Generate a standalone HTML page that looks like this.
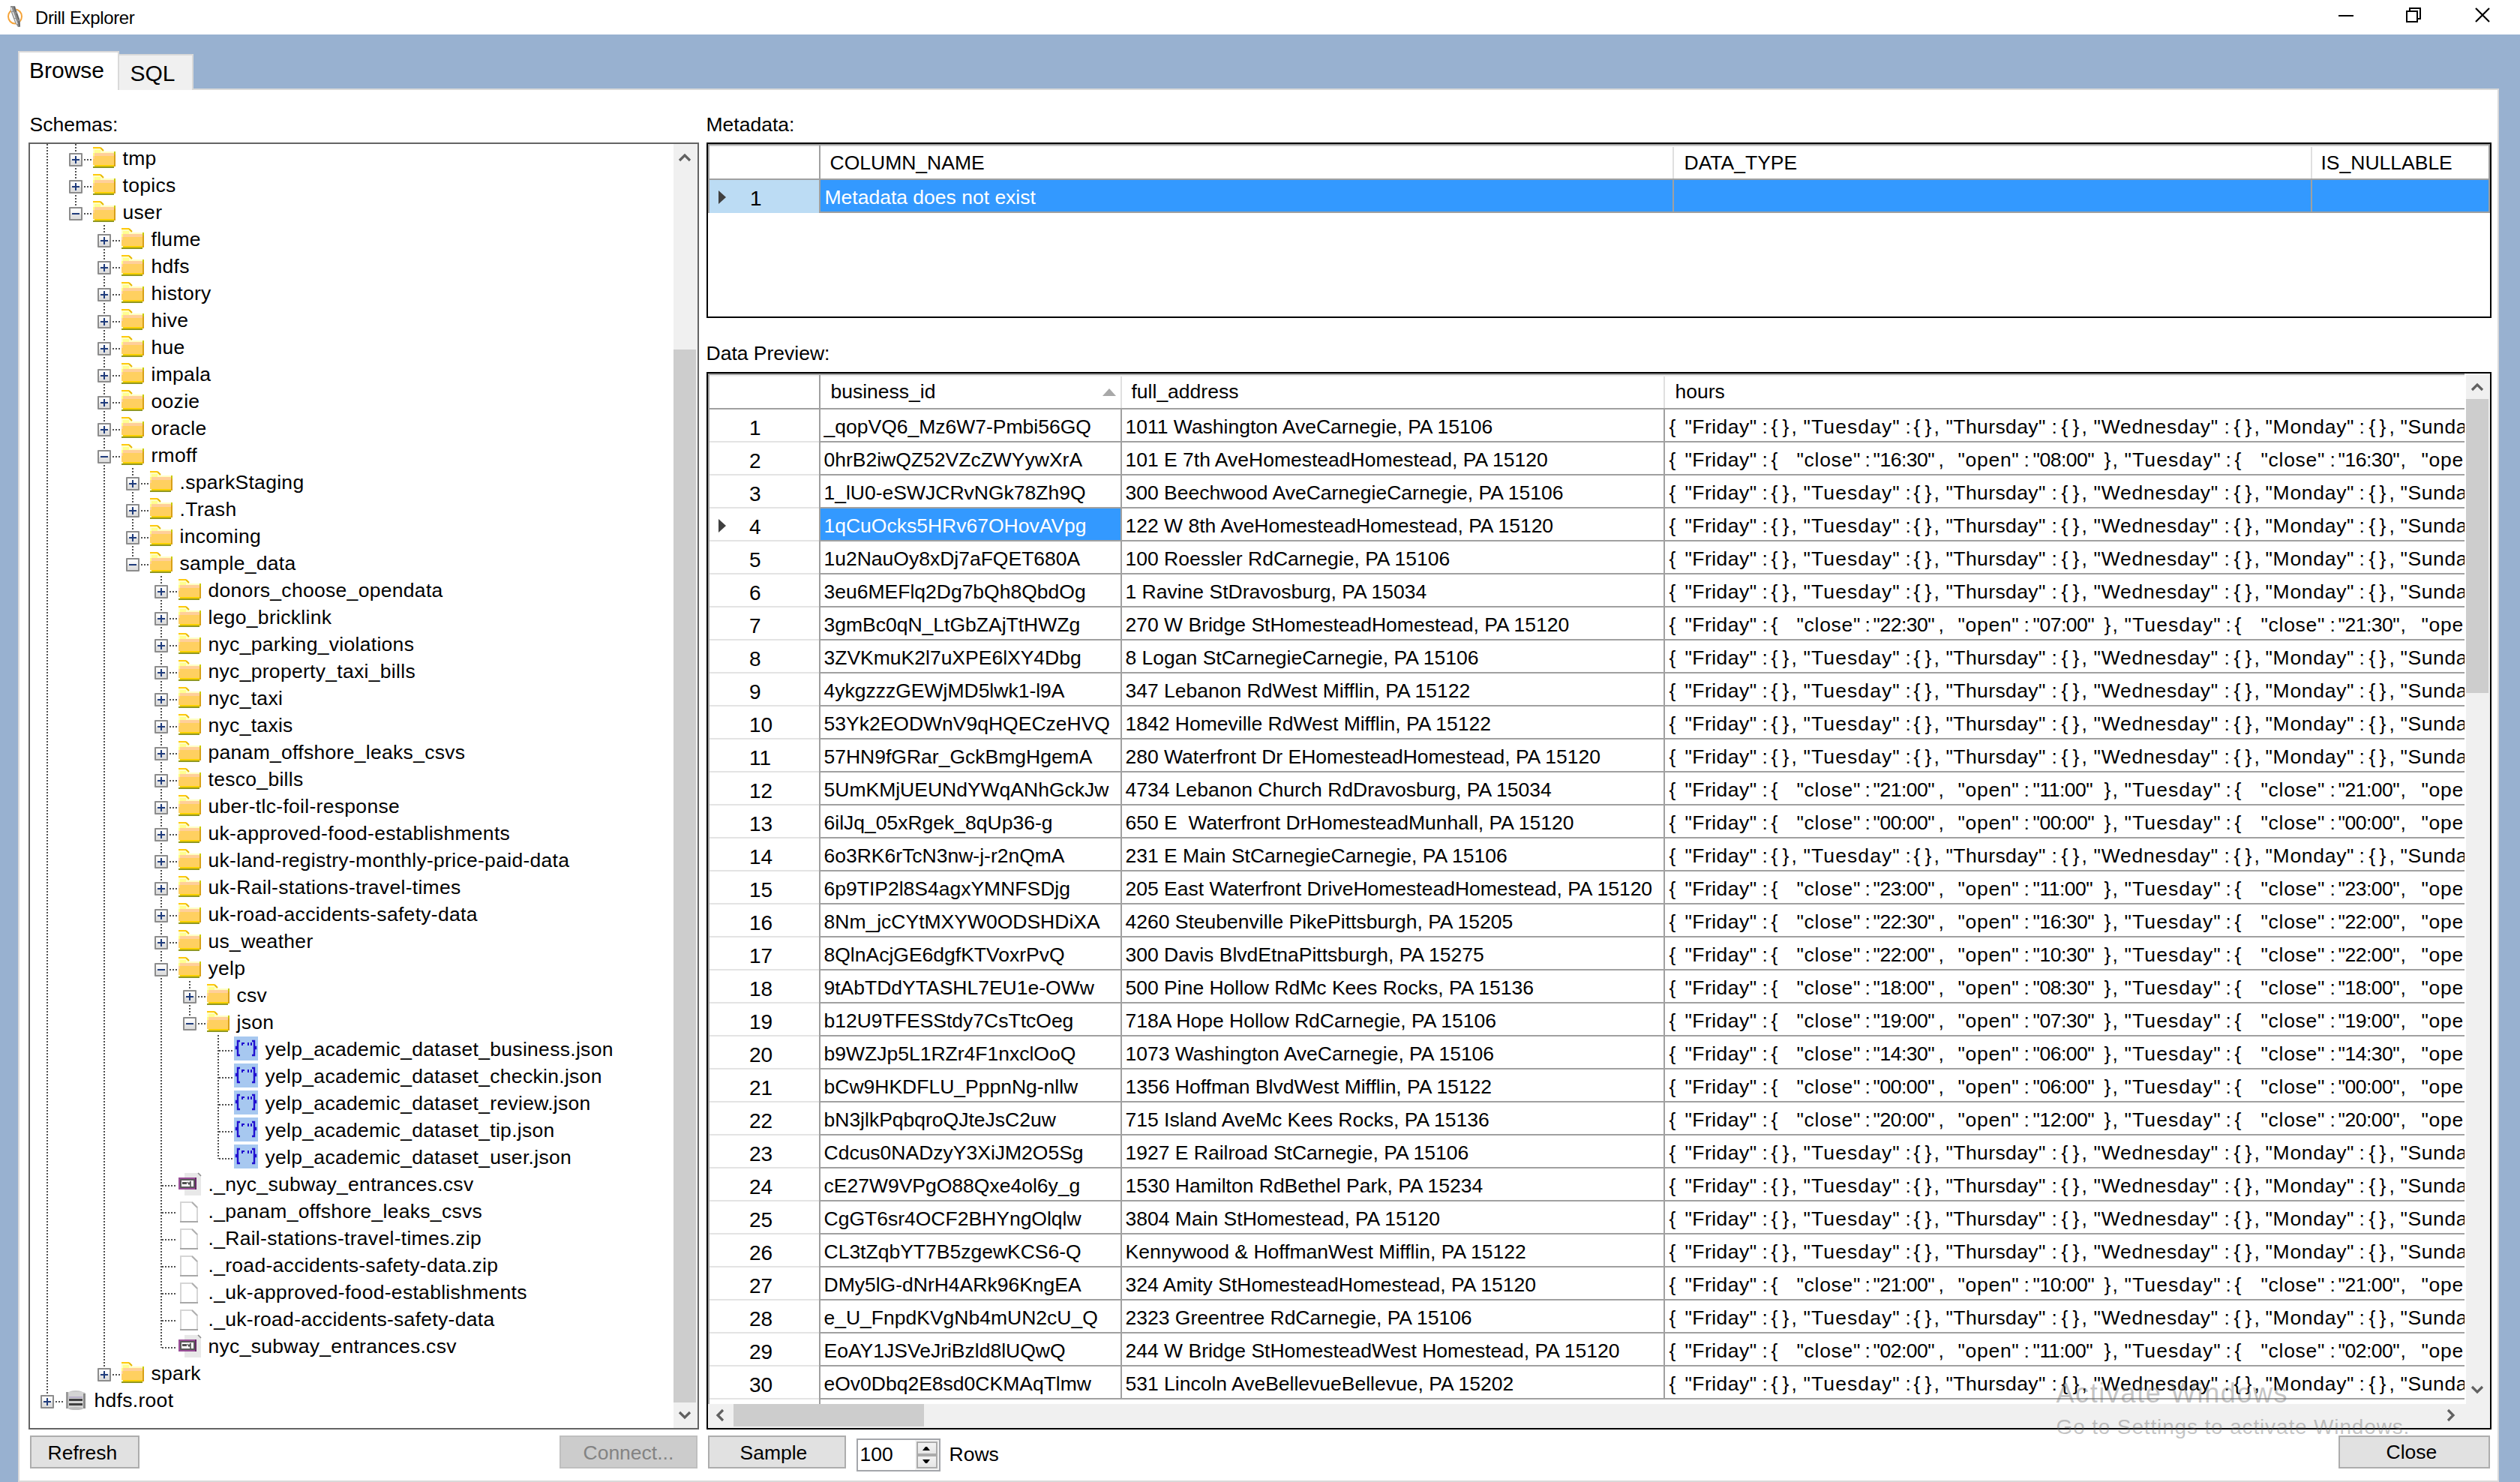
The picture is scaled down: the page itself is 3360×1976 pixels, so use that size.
<!DOCTYPE html><html><head><meta charset="utf-8"><title>Drill Explorer</title><style>
*{margin:0;padding:0;box-sizing:border-box}
html,body{width:3360px;height:1976px;overflow:hidden}
body{position:relative;background:#98B1D0;font-family:"Liberation Sans",sans-serif;color:#000}
div,span{position:absolute}
.t{white-space:pre}
.dv{width:2px;background:repeating-linear-gradient(to bottom,#505050 0 2px,transparent 2px 4px)}
.dh{height:2px;background:repeating-linear-gradient(to right,#505050 0 2px,transparent 2px 4px)}
.pm{width:18px;height:18px;border:2px solid #8C8C8C;border-radius:1px;background:linear-gradient(#FDFDFD 0,#F4F4F4 45%,#E2E2E2 55%,#DEDEDE 100%)}
.pm i{position:absolute;background:#1F3C7C}
svg{position:absolute;overflow:visible}

</style></head><body>
<div style="left:0px;top:0px;width:3360px;height:46px;background:#FFFFFF"></div>
<svg style="left:8px;top:6px" width="26" height="34" viewBox="0 0 26 34"><ellipse cx="12" cy="16" rx="9" ry="9.5" fill="none" stroke="#F6A43A" stroke-width="2"/><path d="M6 2 L12 2 L19 22 L19 30 L16 30 L12 24 L6 8 Z" fill="#8C8C8C"/><path d="M7 4 L8 9 M9 10 L12 18 M12 19 L15 26" stroke="#F0F0F0" stroke-width="1.4"/><path d="M11 3 L13 10 M14 12 L17 20 M17 22 L18 29" stroke="#5E5E5E" stroke-width="1.4"/></svg>
<div class="t" style="left:47.0px;top:12.2px;font-size:24px;line-height:24px;letter-spacing:-0.35px">Drill Explorer</div>
<div style="left:3118px;top:20px;width:20px;height:2px;background:#000"></div>
<div style="left:3212px;top:10px;width:16px;height:16px;border:2px solid #000;background:#fff"></div>
<div style="left:3208px;top:14px;width:16px;height:16px;border:2px solid #000;background:#fff"></div>
<svg style="left:3300px;top:10px" width="20" height="20" viewBox="0 0 20 20"><path d="M1 1 L19 19 M19 1 L1 19" stroke="#000" stroke-width="2.2"/></svg>
<div style="left:24px;top:118px;width:3308px;height:1858px;background:#fff;border:2px solid #D9D9D9"></div>
<div style="left:157px;top:72px;width:101px;height:48px;background:#F0F0F0;border:2px solid #D9D9D9;border-bottom:none"></div>
<div style="left:24px;top:68px;width:135px;height:52px;background:#fff;border:2px solid #D9D9D9;border-bottom:none"></div>
<div style="left:26px;top:118px;width:131px;height:4px;background:#fff"></div>
<div class="t" style="left:39.0px;top:79.1px;font-size:30px;line-height:30px;">Browse</div>
<div class="t" style="left:173.5px;top:83.1px;font-size:30px;line-height:30px;">SQL</div>
<div class="t" style="left:39.5px;top:153.1px;font-size:26.5px;line-height:26.5px;">Schemas:</div>
<div class="t" style="left:941.5px;top:153.1px;font-size:26.5px;line-height:26.5px;">Metadata:</div>
<div class="t" style="left:941.5px;top:458.1px;font-size:26.5px;line-height:26.5px;">Data Preview:</div>
<div style="left:38px;top:190px;width:894px;height:1716px;background:#fff;border:2px solid #646464"></div>
<div class="dv" style="left:62px;top:192px;height:1677px"></div>
<div class="dv" style="left:100px;top:192px;height:21px"></div>
<div class="dv" style="left:100px;top:212px;height:37px"></div>
<div class="dh" style="left:112px;top:212px;width:10px"></div>
<div class="dv" style="left:100px;top:248px;height:37px"></div>
<div class="dh" style="left:112px;top:248px;width:10px"></div>
<div class="dh" style="left:112px;top:284px;width:10px"></div>
<div class="dv" style="left:138px;top:320px;height:37px"></div>
<div class="dv" style="left:138px;top:300px;height:21px"></div>
<div class="dh" style="left:150px;top:320px;width:10px"></div>
<div class="dv" style="left:138px;top:356px;height:37px"></div>
<div class="dh" style="left:150px;top:356px;width:10px"></div>
<div class="dv" style="left:138px;top:392px;height:37px"></div>
<div class="dh" style="left:150px;top:392px;width:10px"></div>
<div class="dv" style="left:138px;top:428px;height:37px"></div>
<div class="dh" style="left:150px;top:428px;width:10px"></div>
<div class="dv" style="left:138px;top:464px;height:37px"></div>
<div class="dh" style="left:150px;top:464px;width:10px"></div>
<div class="dv" style="left:138px;top:500px;height:37px"></div>
<div class="dh" style="left:150px;top:500px;width:10px"></div>
<div class="dv" style="left:138px;top:536px;height:37px"></div>
<div class="dh" style="left:150px;top:536px;width:10px"></div>
<div class="dv" style="left:138px;top:572px;height:37px"></div>
<div class="dh" style="left:150px;top:572px;width:10px"></div>
<div class="dv" style="left:138px;top:608px;height:1225px"></div>
<div class="dh" style="left:150px;top:608px;width:10px"></div>
<div class="dv" style="left:176px;top:644px;height:37px"></div>
<div class="dv" style="left:176px;top:624px;height:21px"></div>
<div class="dh" style="left:188px;top:644px;width:10px"></div>
<div class="dv" style="left:176px;top:680px;height:37px"></div>
<div class="dh" style="left:188px;top:680px;width:10px"></div>
<div class="dv" style="left:176px;top:716px;height:37px"></div>
<div class="dh" style="left:188px;top:716px;width:10px"></div>
<div class="dh" style="left:188px;top:752px;width:10px"></div>
<div class="dv" style="left:214px;top:788px;height:37px"></div>
<div class="dv" style="left:214px;top:768px;height:21px"></div>
<div class="dh" style="left:226px;top:788px;width:10px"></div>
<div class="dv" style="left:214px;top:824px;height:37px"></div>
<div class="dh" style="left:226px;top:824px;width:10px"></div>
<div class="dv" style="left:214px;top:860px;height:37px"></div>
<div class="dh" style="left:226px;top:860px;width:10px"></div>
<div class="dv" style="left:214px;top:896px;height:37px"></div>
<div class="dh" style="left:226px;top:896px;width:10px"></div>
<div class="dv" style="left:214px;top:932px;height:37px"></div>
<div class="dh" style="left:226px;top:932px;width:10px"></div>
<div class="dv" style="left:214px;top:968px;height:37px"></div>
<div class="dh" style="left:226px;top:968px;width:10px"></div>
<div class="dv" style="left:214px;top:1004px;height:37px"></div>
<div class="dh" style="left:226px;top:1004px;width:10px"></div>
<div class="dv" style="left:214px;top:1040px;height:37px"></div>
<div class="dh" style="left:226px;top:1040px;width:10px"></div>
<div class="dv" style="left:214px;top:1076px;height:37px"></div>
<div class="dh" style="left:226px;top:1076px;width:10px"></div>
<div class="dv" style="left:214px;top:1112px;height:37px"></div>
<div class="dh" style="left:226px;top:1112px;width:10px"></div>
<div class="dv" style="left:214px;top:1148px;height:37px"></div>
<div class="dh" style="left:226px;top:1148px;width:10px"></div>
<div class="dv" style="left:214px;top:1184px;height:37px"></div>
<div class="dh" style="left:226px;top:1184px;width:10px"></div>
<div class="dv" style="left:214px;top:1220px;height:37px"></div>
<div class="dh" style="left:226px;top:1220px;width:10px"></div>
<div class="dv" style="left:214px;top:1256px;height:37px"></div>
<div class="dh" style="left:226px;top:1256px;width:10px"></div>
<div class="dv" style="left:214px;top:1292px;height:289px"></div>
<div class="dh" style="left:226px;top:1292px;width:10px"></div>
<div class="dv" style="left:252px;top:1328px;height:37px"></div>
<div class="dv" style="left:252px;top:1308px;height:21px"></div>
<div class="dh" style="left:264px;top:1328px;width:10px"></div>
<div class="dh" style="left:264px;top:1364px;width:10px"></div>
<div class="dv" style="left:290px;top:1400px;height:37px"></div>
<div class="dv" style="left:290px;top:1380px;height:21px"></div>
<div class="dh" style="left:292px;top:1400px;width:20px"></div>
<div class="dv" style="left:290px;top:1436px;height:37px"></div>
<div class="dh" style="left:292px;top:1436px;width:20px"></div>
<div class="dv" style="left:290px;top:1472px;height:37px"></div>
<div class="dh" style="left:292px;top:1472px;width:20px"></div>
<div class="dv" style="left:290px;top:1508px;height:37px"></div>
<div class="dh" style="left:292px;top:1508px;width:20px"></div>
<div class="dh" style="left:292px;top:1544px;width:20px"></div>
<div class="dv" style="left:214px;top:1580px;height:37px"></div>
<div class="dh" style="left:216px;top:1580px;width:20px"></div>
<div class="dv" style="left:214px;top:1616px;height:37px"></div>
<div class="dh" style="left:216px;top:1616px;width:20px"></div>
<div class="dv" style="left:214px;top:1652px;height:37px"></div>
<div class="dh" style="left:216px;top:1652px;width:20px"></div>
<div class="dv" style="left:214px;top:1688px;height:37px"></div>
<div class="dh" style="left:216px;top:1688px;width:20px"></div>
<div class="dv" style="left:214px;top:1724px;height:37px"></div>
<div class="dh" style="left:216px;top:1724px;width:20px"></div>
<div class="dv" style="left:214px;top:1760px;height:37px"></div>
<div class="dh" style="left:216px;top:1760px;width:20px"></div>
<div class="dh" style="left:216px;top:1796px;width:20px"></div>
<div class="dh" style="left:150px;top:1832px;width:10px"></div>
<div class="dh" style="left:74px;top:1868px;width:10px"></div>
<div class="pm" style="left:92px;top:204px"><i style="left:2px;top:6px;width:10px;height:2px"></i><i style="left:6px;top:2px;width:2px;height:10px"></i></div>
<svg style="left:124px;top:196px" width="30" height="28" viewBox="0 0 30 28"><path d="M0 0 H10 L14 6 H28 V26 H0 Z" fill="#FFFFC4"/><rect x="0" y="0" width="10" height="2" fill="#FFC90E"/><path d="M10 1 L12 3 L14 5" stroke="#E6B800" stroke-width="2" fill="none"/><rect x="2" y="4" width="8" height="4" fill="#FFFF90"/><rect x="2" y="8" width="26" height="4" fill="#FFCF9A"/><rect x="0" y="12" width="28" height="12" fill="#FFD060"/><rect x="0" y="8" width="2" height="4" fill="#FFFF80"/><rect x="0" y="12" width="2" height="4" fill="#FFD09A"/><rect x="2" y="24" width="26" height="2" fill="#FFD200"/><rect x="28" y="6" width="2" height="20" fill="#D8A018"/><rect x="28" y="6" width="2" height="4" fill="#C8C800"/><rect x="0" y="26" width="28" height="2" fill="#909820"/></svg>
<div class="t" style="left:163.5px;top:198.1px;font-size:26.5px;line-height:26.5px;letter-spacing:0.3px">tmp</div>
<div class="pm" style="left:92px;top:240px"><i style="left:2px;top:6px;width:10px;height:2px"></i><i style="left:6px;top:2px;width:2px;height:10px"></i></div>
<svg style="left:124px;top:232px" width="30" height="28" viewBox="0 0 30 28"><path d="M0 0 H10 L14 6 H28 V26 H0 Z" fill="#FFFFC4"/><rect x="0" y="0" width="10" height="2" fill="#FFC90E"/><path d="M10 1 L12 3 L14 5" stroke="#E6B800" stroke-width="2" fill="none"/><rect x="2" y="4" width="8" height="4" fill="#FFFF90"/><rect x="2" y="8" width="26" height="4" fill="#FFCF9A"/><rect x="0" y="12" width="28" height="12" fill="#FFD060"/><rect x="0" y="8" width="2" height="4" fill="#FFFF80"/><rect x="0" y="12" width="2" height="4" fill="#FFD09A"/><rect x="2" y="24" width="26" height="2" fill="#FFD200"/><rect x="28" y="6" width="2" height="20" fill="#D8A018"/><rect x="28" y="6" width="2" height="4" fill="#C8C800"/><rect x="0" y="26" width="28" height="2" fill="#909820"/></svg>
<div class="t" style="left:163.5px;top:234.1px;font-size:26.5px;line-height:26.5px;letter-spacing:0.3px">topics</div>
<div class="pm" style="left:92px;top:276px"><i style="left:2px;top:6px;width:10px;height:2px"></i></div>
<svg style="left:124px;top:268px" width="30" height="28" viewBox="0 0 30 28"><path d="M0 0 H10 L14 6 H28 V26 H0 Z" fill="#FFFFC4"/><rect x="0" y="0" width="10" height="2" fill="#FFC90E"/><path d="M10 1 L12 3 L14 5" stroke="#E6B800" stroke-width="2" fill="none"/><rect x="2" y="4" width="8" height="4" fill="#FFFF90"/><rect x="2" y="8" width="26" height="4" fill="#FFCF9A"/><rect x="0" y="12" width="28" height="12" fill="#FFD060"/><rect x="0" y="8" width="2" height="4" fill="#FFFF80"/><rect x="0" y="12" width="2" height="4" fill="#FFD09A"/><rect x="2" y="24" width="26" height="2" fill="#FFD200"/><rect x="28" y="6" width="2" height="20" fill="#D8A018"/><rect x="28" y="6" width="2" height="4" fill="#C8C800"/><rect x="0" y="26" width="28" height="2" fill="#909820"/></svg>
<div class="t" style="left:163.5px;top:270.1px;font-size:26.5px;line-height:26.5px;letter-spacing:0.3px">user</div>
<div class="pm" style="left:130px;top:312px"><i style="left:2px;top:6px;width:10px;height:2px"></i><i style="left:6px;top:2px;width:2px;height:10px"></i></div>
<svg style="left:162px;top:304px" width="30" height="28" viewBox="0 0 30 28"><path d="M0 0 H10 L14 6 H28 V26 H0 Z" fill="#FFFFC4"/><rect x="0" y="0" width="10" height="2" fill="#FFC90E"/><path d="M10 1 L12 3 L14 5" stroke="#E6B800" stroke-width="2" fill="none"/><rect x="2" y="4" width="8" height="4" fill="#FFFF90"/><rect x="2" y="8" width="26" height="4" fill="#FFCF9A"/><rect x="0" y="12" width="28" height="12" fill="#FFD060"/><rect x="0" y="8" width="2" height="4" fill="#FFFF80"/><rect x="0" y="12" width="2" height="4" fill="#FFD09A"/><rect x="2" y="24" width="26" height="2" fill="#FFD200"/><rect x="28" y="6" width="2" height="20" fill="#D8A018"/><rect x="28" y="6" width="2" height="4" fill="#C8C800"/><rect x="0" y="26" width="28" height="2" fill="#909820"/></svg>
<div class="t" style="left:201.5px;top:306.1px;font-size:26.5px;line-height:26.5px;letter-spacing:0.3px">flume</div>
<div class="pm" style="left:130px;top:348px"><i style="left:2px;top:6px;width:10px;height:2px"></i><i style="left:6px;top:2px;width:2px;height:10px"></i></div>
<svg style="left:162px;top:340px" width="30" height="28" viewBox="0 0 30 28"><path d="M0 0 H10 L14 6 H28 V26 H0 Z" fill="#FFFFC4"/><rect x="0" y="0" width="10" height="2" fill="#FFC90E"/><path d="M10 1 L12 3 L14 5" stroke="#E6B800" stroke-width="2" fill="none"/><rect x="2" y="4" width="8" height="4" fill="#FFFF90"/><rect x="2" y="8" width="26" height="4" fill="#FFCF9A"/><rect x="0" y="12" width="28" height="12" fill="#FFD060"/><rect x="0" y="8" width="2" height="4" fill="#FFFF80"/><rect x="0" y="12" width="2" height="4" fill="#FFD09A"/><rect x="2" y="24" width="26" height="2" fill="#FFD200"/><rect x="28" y="6" width="2" height="20" fill="#D8A018"/><rect x="28" y="6" width="2" height="4" fill="#C8C800"/><rect x="0" y="26" width="28" height="2" fill="#909820"/></svg>
<div class="t" style="left:201.5px;top:342.1px;font-size:26.5px;line-height:26.5px;letter-spacing:0.3px">hdfs</div>
<div class="pm" style="left:130px;top:384px"><i style="left:2px;top:6px;width:10px;height:2px"></i><i style="left:6px;top:2px;width:2px;height:10px"></i></div>
<svg style="left:162px;top:376px" width="30" height="28" viewBox="0 0 30 28"><path d="M0 0 H10 L14 6 H28 V26 H0 Z" fill="#FFFFC4"/><rect x="0" y="0" width="10" height="2" fill="#FFC90E"/><path d="M10 1 L12 3 L14 5" stroke="#E6B800" stroke-width="2" fill="none"/><rect x="2" y="4" width="8" height="4" fill="#FFFF90"/><rect x="2" y="8" width="26" height="4" fill="#FFCF9A"/><rect x="0" y="12" width="28" height="12" fill="#FFD060"/><rect x="0" y="8" width="2" height="4" fill="#FFFF80"/><rect x="0" y="12" width="2" height="4" fill="#FFD09A"/><rect x="2" y="24" width="26" height="2" fill="#FFD200"/><rect x="28" y="6" width="2" height="20" fill="#D8A018"/><rect x="28" y="6" width="2" height="4" fill="#C8C800"/><rect x="0" y="26" width="28" height="2" fill="#909820"/></svg>
<div class="t" style="left:201.5px;top:378.1px;font-size:26.5px;line-height:26.5px;letter-spacing:0.3px">history</div>
<div class="pm" style="left:130px;top:420px"><i style="left:2px;top:6px;width:10px;height:2px"></i><i style="left:6px;top:2px;width:2px;height:10px"></i></div>
<svg style="left:162px;top:412px" width="30" height="28" viewBox="0 0 30 28"><path d="M0 0 H10 L14 6 H28 V26 H0 Z" fill="#FFFFC4"/><rect x="0" y="0" width="10" height="2" fill="#FFC90E"/><path d="M10 1 L12 3 L14 5" stroke="#E6B800" stroke-width="2" fill="none"/><rect x="2" y="4" width="8" height="4" fill="#FFFF90"/><rect x="2" y="8" width="26" height="4" fill="#FFCF9A"/><rect x="0" y="12" width="28" height="12" fill="#FFD060"/><rect x="0" y="8" width="2" height="4" fill="#FFFF80"/><rect x="0" y="12" width="2" height="4" fill="#FFD09A"/><rect x="2" y="24" width="26" height="2" fill="#FFD200"/><rect x="28" y="6" width="2" height="20" fill="#D8A018"/><rect x="28" y="6" width="2" height="4" fill="#C8C800"/><rect x="0" y="26" width="28" height="2" fill="#909820"/></svg>
<div class="t" style="left:201.5px;top:414.1px;font-size:26.5px;line-height:26.5px;letter-spacing:0.3px">hive</div>
<div class="pm" style="left:130px;top:456px"><i style="left:2px;top:6px;width:10px;height:2px"></i><i style="left:6px;top:2px;width:2px;height:10px"></i></div>
<svg style="left:162px;top:448px" width="30" height="28" viewBox="0 0 30 28"><path d="M0 0 H10 L14 6 H28 V26 H0 Z" fill="#FFFFC4"/><rect x="0" y="0" width="10" height="2" fill="#FFC90E"/><path d="M10 1 L12 3 L14 5" stroke="#E6B800" stroke-width="2" fill="none"/><rect x="2" y="4" width="8" height="4" fill="#FFFF90"/><rect x="2" y="8" width="26" height="4" fill="#FFCF9A"/><rect x="0" y="12" width="28" height="12" fill="#FFD060"/><rect x="0" y="8" width="2" height="4" fill="#FFFF80"/><rect x="0" y="12" width="2" height="4" fill="#FFD09A"/><rect x="2" y="24" width="26" height="2" fill="#FFD200"/><rect x="28" y="6" width="2" height="20" fill="#D8A018"/><rect x="28" y="6" width="2" height="4" fill="#C8C800"/><rect x="0" y="26" width="28" height="2" fill="#909820"/></svg>
<div class="t" style="left:201.5px;top:450.1px;font-size:26.5px;line-height:26.5px;letter-spacing:0.3px">hue</div>
<div class="pm" style="left:130px;top:492px"><i style="left:2px;top:6px;width:10px;height:2px"></i><i style="left:6px;top:2px;width:2px;height:10px"></i></div>
<svg style="left:162px;top:484px" width="30" height="28" viewBox="0 0 30 28"><path d="M0 0 H10 L14 6 H28 V26 H0 Z" fill="#FFFFC4"/><rect x="0" y="0" width="10" height="2" fill="#FFC90E"/><path d="M10 1 L12 3 L14 5" stroke="#E6B800" stroke-width="2" fill="none"/><rect x="2" y="4" width="8" height="4" fill="#FFFF90"/><rect x="2" y="8" width="26" height="4" fill="#FFCF9A"/><rect x="0" y="12" width="28" height="12" fill="#FFD060"/><rect x="0" y="8" width="2" height="4" fill="#FFFF80"/><rect x="0" y="12" width="2" height="4" fill="#FFD09A"/><rect x="2" y="24" width="26" height="2" fill="#FFD200"/><rect x="28" y="6" width="2" height="20" fill="#D8A018"/><rect x="28" y="6" width="2" height="4" fill="#C8C800"/><rect x="0" y="26" width="28" height="2" fill="#909820"/></svg>
<div class="t" style="left:201.5px;top:486.1px;font-size:26.5px;line-height:26.5px;letter-spacing:0.3px">impala</div>
<div class="pm" style="left:130px;top:528px"><i style="left:2px;top:6px;width:10px;height:2px"></i><i style="left:6px;top:2px;width:2px;height:10px"></i></div>
<svg style="left:162px;top:520px" width="30" height="28" viewBox="0 0 30 28"><path d="M0 0 H10 L14 6 H28 V26 H0 Z" fill="#FFFFC4"/><rect x="0" y="0" width="10" height="2" fill="#FFC90E"/><path d="M10 1 L12 3 L14 5" stroke="#E6B800" stroke-width="2" fill="none"/><rect x="2" y="4" width="8" height="4" fill="#FFFF90"/><rect x="2" y="8" width="26" height="4" fill="#FFCF9A"/><rect x="0" y="12" width="28" height="12" fill="#FFD060"/><rect x="0" y="8" width="2" height="4" fill="#FFFF80"/><rect x="0" y="12" width="2" height="4" fill="#FFD09A"/><rect x="2" y="24" width="26" height="2" fill="#FFD200"/><rect x="28" y="6" width="2" height="20" fill="#D8A018"/><rect x="28" y="6" width="2" height="4" fill="#C8C800"/><rect x="0" y="26" width="28" height="2" fill="#909820"/></svg>
<div class="t" style="left:201.5px;top:522.1px;font-size:26.5px;line-height:26.5px;letter-spacing:0.3px">oozie</div>
<div class="pm" style="left:130px;top:564px"><i style="left:2px;top:6px;width:10px;height:2px"></i><i style="left:6px;top:2px;width:2px;height:10px"></i></div>
<svg style="left:162px;top:556px" width="30" height="28" viewBox="0 0 30 28"><path d="M0 0 H10 L14 6 H28 V26 H0 Z" fill="#FFFFC4"/><rect x="0" y="0" width="10" height="2" fill="#FFC90E"/><path d="M10 1 L12 3 L14 5" stroke="#E6B800" stroke-width="2" fill="none"/><rect x="2" y="4" width="8" height="4" fill="#FFFF90"/><rect x="2" y="8" width="26" height="4" fill="#FFCF9A"/><rect x="0" y="12" width="28" height="12" fill="#FFD060"/><rect x="0" y="8" width="2" height="4" fill="#FFFF80"/><rect x="0" y="12" width="2" height="4" fill="#FFD09A"/><rect x="2" y="24" width="26" height="2" fill="#FFD200"/><rect x="28" y="6" width="2" height="20" fill="#D8A018"/><rect x="28" y="6" width="2" height="4" fill="#C8C800"/><rect x="0" y="26" width="28" height="2" fill="#909820"/></svg>
<div class="t" style="left:201.5px;top:558.1px;font-size:26.5px;line-height:26.5px;letter-spacing:0.3px">oracle</div>
<div class="pm" style="left:130px;top:600px"><i style="left:2px;top:6px;width:10px;height:2px"></i></div>
<svg style="left:162px;top:592px" width="30" height="28" viewBox="0 0 30 28"><path d="M0 0 H10 L14 6 H28 V26 H0 Z" fill="#FFFFC4"/><rect x="0" y="0" width="10" height="2" fill="#FFC90E"/><path d="M10 1 L12 3 L14 5" stroke="#E6B800" stroke-width="2" fill="none"/><rect x="2" y="4" width="8" height="4" fill="#FFFF90"/><rect x="2" y="8" width="26" height="4" fill="#FFCF9A"/><rect x="0" y="12" width="28" height="12" fill="#FFD060"/><rect x="0" y="8" width="2" height="4" fill="#FFFF80"/><rect x="0" y="12" width="2" height="4" fill="#FFD09A"/><rect x="2" y="24" width="26" height="2" fill="#FFD200"/><rect x="28" y="6" width="2" height="20" fill="#D8A018"/><rect x="28" y="6" width="2" height="4" fill="#C8C800"/><rect x="0" y="26" width="28" height="2" fill="#909820"/></svg>
<div class="t" style="left:201.5px;top:594.1px;font-size:26.5px;line-height:26.5px;letter-spacing:0.3px">rmoff</div>
<div class="pm" style="left:168px;top:636px"><i style="left:2px;top:6px;width:10px;height:2px"></i><i style="left:6px;top:2px;width:2px;height:10px"></i></div>
<svg style="left:200px;top:628px" width="30" height="28" viewBox="0 0 30 28"><path d="M0 0 H10 L14 6 H28 V26 H0 Z" fill="#FFFFC4"/><rect x="0" y="0" width="10" height="2" fill="#FFC90E"/><path d="M10 1 L12 3 L14 5" stroke="#E6B800" stroke-width="2" fill="none"/><rect x="2" y="4" width="8" height="4" fill="#FFFF90"/><rect x="2" y="8" width="26" height="4" fill="#FFCF9A"/><rect x="0" y="12" width="28" height="12" fill="#FFD060"/><rect x="0" y="8" width="2" height="4" fill="#FFFF80"/><rect x="0" y="12" width="2" height="4" fill="#FFD09A"/><rect x="2" y="24" width="26" height="2" fill="#FFD200"/><rect x="28" y="6" width="2" height="20" fill="#D8A018"/><rect x="28" y="6" width="2" height="4" fill="#C8C800"/><rect x="0" y="26" width="28" height="2" fill="#909820"/></svg>
<div class="t" style="left:239.5px;top:630.1px;font-size:26.5px;line-height:26.5px;letter-spacing:0.3px">.sparkStaging</div>
<div class="pm" style="left:168px;top:672px"><i style="left:2px;top:6px;width:10px;height:2px"></i><i style="left:6px;top:2px;width:2px;height:10px"></i></div>
<svg style="left:200px;top:664px" width="30" height="28" viewBox="0 0 30 28"><path d="M0 0 H10 L14 6 H28 V26 H0 Z" fill="#FFFFC4"/><rect x="0" y="0" width="10" height="2" fill="#FFC90E"/><path d="M10 1 L12 3 L14 5" stroke="#E6B800" stroke-width="2" fill="none"/><rect x="2" y="4" width="8" height="4" fill="#FFFF90"/><rect x="2" y="8" width="26" height="4" fill="#FFCF9A"/><rect x="0" y="12" width="28" height="12" fill="#FFD060"/><rect x="0" y="8" width="2" height="4" fill="#FFFF80"/><rect x="0" y="12" width="2" height="4" fill="#FFD09A"/><rect x="2" y="24" width="26" height="2" fill="#FFD200"/><rect x="28" y="6" width="2" height="20" fill="#D8A018"/><rect x="28" y="6" width="2" height="4" fill="#C8C800"/><rect x="0" y="26" width="28" height="2" fill="#909820"/></svg>
<div class="t" style="left:239.5px;top:666.1px;font-size:26.5px;line-height:26.5px;letter-spacing:0.3px">.Trash</div>
<div class="pm" style="left:168px;top:708px"><i style="left:2px;top:6px;width:10px;height:2px"></i><i style="left:6px;top:2px;width:2px;height:10px"></i></div>
<svg style="left:200px;top:700px" width="30" height="28" viewBox="0 0 30 28"><path d="M0 0 H10 L14 6 H28 V26 H0 Z" fill="#FFFFC4"/><rect x="0" y="0" width="10" height="2" fill="#FFC90E"/><path d="M10 1 L12 3 L14 5" stroke="#E6B800" stroke-width="2" fill="none"/><rect x="2" y="4" width="8" height="4" fill="#FFFF90"/><rect x="2" y="8" width="26" height="4" fill="#FFCF9A"/><rect x="0" y="12" width="28" height="12" fill="#FFD060"/><rect x="0" y="8" width="2" height="4" fill="#FFFF80"/><rect x="0" y="12" width="2" height="4" fill="#FFD09A"/><rect x="2" y="24" width="26" height="2" fill="#FFD200"/><rect x="28" y="6" width="2" height="20" fill="#D8A018"/><rect x="28" y="6" width="2" height="4" fill="#C8C800"/><rect x="0" y="26" width="28" height="2" fill="#909820"/></svg>
<div class="t" style="left:239.5px;top:702.1px;font-size:26.5px;line-height:26.5px;letter-spacing:0.3px">incoming</div>
<div class="pm" style="left:168px;top:744px"><i style="left:2px;top:6px;width:10px;height:2px"></i></div>
<svg style="left:200px;top:736px" width="30" height="28" viewBox="0 0 30 28"><path d="M0 0 H10 L14 6 H28 V26 H0 Z" fill="#FFFFC4"/><rect x="0" y="0" width="10" height="2" fill="#FFC90E"/><path d="M10 1 L12 3 L14 5" stroke="#E6B800" stroke-width="2" fill="none"/><rect x="2" y="4" width="8" height="4" fill="#FFFF90"/><rect x="2" y="8" width="26" height="4" fill="#FFCF9A"/><rect x="0" y="12" width="28" height="12" fill="#FFD060"/><rect x="0" y="8" width="2" height="4" fill="#FFFF80"/><rect x="0" y="12" width="2" height="4" fill="#FFD09A"/><rect x="2" y="24" width="26" height="2" fill="#FFD200"/><rect x="28" y="6" width="2" height="20" fill="#D8A018"/><rect x="28" y="6" width="2" height="4" fill="#C8C800"/><rect x="0" y="26" width="28" height="2" fill="#909820"/></svg>
<div class="t" style="left:239.5px;top:738.1px;font-size:26.5px;line-height:26.5px;letter-spacing:0.3px">sample_data</div>
<div class="pm" style="left:206px;top:780px"><i style="left:2px;top:6px;width:10px;height:2px"></i><i style="left:6px;top:2px;width:2px;height:10px"></i></div>
<svg style="left:238px;top:772px" width="30" height="28" viewBox="0 0 30 28"><path d="M0 0 H10 L14 6 H28 V26 H0 Z" fill="#FFFFC4"/><rect x="0" y="0" width="10" height="2" fill="#FFC90E"/><path d="M10 1 L12 3 L14 5" stroke="#E6B800" stroke-width="2" fill="none"/><rect x="2" y="4" width="8" height="4" fill="#FFFF90"/><rect x="2" y="8" width="26" height="4" fill="#FFCF9A"/><rect x="0" y="12" width="28" height="12" fill="#FFD060"/><rect x="0" y="8" width="2" height="4" fill="#FFFF80"/><rect x="0" y="12" width="2" height="4" fill="#FFD09A"/><rect x="2" y="24" width="26" height="2" fill="#FFD200"/><rect x="28" y="6" width="2" height="20" fill="#D8A018"/><rect x="28" y="6" width="2" height="4" fill="#C8C800"/><rect x="0" y="26" width="28" height="2" fill="#909820"/></svg>
<div class="t" style="left:277.5px;top:774.1px;font-size:26.5px;line-height:26.5px;letter-spacing:0.3px">donors_choose_opendata</div>
<div class="pm" style="left:206px;top:816px"><i style="left:2px;top:6px;width:10px;height:2px"></i><i style="left:6px;top:2px;width:2px;height:10px"></i></div>
<svg style="left:238px;top:808px" width="30" height="28" viewBox="0 0 30 28"><path d="M0 0 H10 L14 6 H28 V26 H0 Z" fill="#FFFFC4"/><rect x="0" y="0" width="10" height="2" fill="#FFC90E"/><path d="M10 1 L12 3 L14 5" stroke="#E6B800" stroke-width="2" fill="none"/><rect x="2" y="4" width="8" height="4" fill="#FFFF90"/><rect x="2" y="8" width="26" height="4" fill="#FFCF9A"/><rect x="0" y="12" width="28" height="12" fill="#FFD060"/><rect x="0" y="8" width="2" height="4" fill="#FFFF80"/><rect x="0" y="12" width="2" height="4" fill="#FFD09A"/><rect x="2" y="24" width="26" height="2" fill="#FFD200"/><rect x="28" y="6" width="2" height="20" fill="#D8A018"/><rect x="28" y="6" width="2" height="4" fill="#C8C800"/><rect x="0" y="26" width="28" height="2" fill="#909820"/></svg>
<div class="t" style="left:277.5px;top:810.1px;font-size:26.5px;line-height:26.5px;letter-spacing:0.3px">lego_bricklink</div>
<div class="pm" style="left:206px;top:852px"><i style="left:2px;top:6px;width:10px;height:2px"></i><i style="left:6px;top:2px;width:2px;height:10px"></i></div>
<svg style="left:238px;top:844px" width="30" height="28" viewBox="0 0 30 28"><path d="M0 0 H10 L14 6 H28 V26 H0 Z" fill="#FFFFC4"/><rect x="0" y="0" width="10" height="2" fill="#FFC90E"/><path d="M10 1 L12 3 L14 5" stroke="#E6B800" stroke-width="2" fill="none"/><rect x="2" y="4" width="8" height="4" fill="#FFFF90"/><rect x="2" y="8" width="26" height="4" fill="#FFCF9A"/><rect x="0" y="12" width="28" height="12" fill="#FFD060"/><rect x="0" y="8" width="2" height="4" fill="#FFFF80"/><rect x="0" y="12" width="2" height="4" fill="#FFD09A"/><rect x="2" y="24" width="26" height="2" fill="#FFD200"/><rect x="28" y="6" width="2" height="20" fill="#D8A018"/><rect x="28" y="6" width="2" height="4" fill="#C8C800"/><rect x="0" y="26" width="28" height="2" fill="#909820"/></svg>
<div class="t" style="left:277.5px;top:846.1px;font-size:26.5px;line-height:26.5px;letter-spacing:0.3px">nyc_parking_violations</div>
<div class="pm" style="left:206px;top:888px"><i style="left:2px;top:6px;width:10px;height:2px"></i><i style="left:6px;top:2px;width:2px;height:10px"></i></div>
<svg style="left:238px;top:880px" width="30" height="28" viewBox="0 0 30 28"><path d="M0 0 H10 L14 6 H28 V26 H0 Z" fill="#FFFFC4"/><rect x="0" y="0" width="10" height="2" fill="#FFC90E"/><path d="M10 1 L12 3 L14 5" stroke="#E6B800" stroke-width="2" fill="none"/><rect x="2" y="4" width="8" height="4" fill="#FFFF90"/><rect x="2" y="8" width="26" height="4" fill="#FFCF9A"/><rect x="0" y="12" width="28" height="12" fill="#FFD060"/><rect x="0" y="8" width="2" height="4" fill="#FFFF80"/><rect x="0" y="12" width="2" height="4" fill="#FFD09A"/><rect x="2" y="24" width="26" height="2" fill="#FFD200"/><rect x="28" y="6" width="2" height="20" fill="#D8A018"/><rect x="28" y="6" width="2" height="4" fill="#C8C800"/><rect x="0" y="26" width="28" height="2" fill="#909820"/></svg>
<div class="t" style="left:277.5px;top:882.1px;font-size:26.5px;line-height:26.5px;letter-spacing:0.3px">nyc_property_taxi_bills</div>
<div class="pm" style="left:206px;top:924px"><i style="left:2px;top:6px;width:10px;height:2px"></i><i style="left:6px;top:2px;width:2px;height:10px"></i></div>
<svg style="left:238px;top:916px" width="30" height="28" viewBox="0 0 30 28"><path d="M0 0 H10 L14 6 H28 V26 H0 Z" fill="#FFFFC4"/><rect x="0" y="0" width="10" height="2" fill="#FFC90E"/><path d="M10 1 L12 3 L14 5" stroke="#E6B800" stroke-width="2" fill="none"/><rect x="2" y="4" width="8" height="4" fill="#FFFF90"/><rect x="2" y="8" width="26" height="4" fill="#FFCF9A"/><rect x="0" y="12" width="28" height="12" fill="#FFD060"/><rect x="0" y="8" width="2" height="4" fill="#FFFF80"/><rect x="0" y="12" width="2" height="4" fill="#FFD09A"/><rect x="2" y="24" width="26" height="2" fill="#FFD200"/><rect x="28" y="6" width="2" height="20" fill="#D8A018"/><rect x="28" y="6" width="2" height="4" fill="#C8C800"/><rect x="0" y="26" width="28" height="2" fill="#909820"/></svg>
<div class="t" style="left:277.5px;top:918.1px;font-size:26.5px;line-height:26.5px;letter-spacing:0.3px">nyc_taxi</div>
<div class="pm" style="left:206px;top:960px"><i style="left:2px;top:6px;width:10px;height:2px"></i><i style="left:6px;top:2px;width:2px;height:10px"></i></div>
<svg style="left:238px;top:952px" width="30" height="28" viewBox="0 0 30 28"><path d="M0 0 H10 L14 6 H28 V26 H0 Z" fill="#FFFFC4"/><rect x="0" y="0" width="10" height="2" fill="#FFC90E"/><path d="M10 1 L12 3 L14 5" stroke="#E6B800" stroke-width="2" fill="none"/><rect x="2" y="4" width="8" height="4" fill="#FFFF90"/><rect x="2" y="8" width="26" height="4" fill="#FFCF9A"/><rect x="0" y="12" width="28" height="12" fill="#FFD060"/><rect x="0" y="8" width="2" height="4" fill="#FFFF80"/><rect x="0" y="12" width="2" height="4" fill="#FFD09A"/><rect x="2" y="24" width="26" height="2" fill="#FFD200"/><rect x="28" y="6" width="2" height="20" fill="#D8A018"/><rect x="28" y="6" width="2" height="4" fill="#C8C800"/><rect x="0" y="26" width="28" height="2" fill="#909820"/></svg>
<div class="t" style="left:277.5px;top:954.1px;font-size:26.5px;line-height:26.5px;letter-spacing:0.3px">nyc_taxis</div>
<div class="pm" style="left:206px;top:996px"><i style="left:2px;top:6px;width:10px;height:2px"></i><i style="left:6px;top:2px;width:2px;height:10px"></i></div>
<svg style="left:238px;top:988px" width="30" height="28" viewBox="0 0 30 28"><path d="M0 0 H10 L14 6 H28 V26 H0 Z" fill="#FFFFC4"/><rect x="0" y="0" width="10" height="2" fill="#FFC90E"/><path d="M10 1 L12 3 L14 5" stroke="#E6B800" stroke-width="2" fill="none"/><rect x="2" y="4" width="8" height="4" fill="#FFFF90"/><rect x="2" y="8" width="26" height="4" fill="#FFCF9A"/><rect x="0" y="12" width="28" height="12" fill="#FFD060"/><rect x="0" y="8" width="2" height="4" fill="#FFFF80"/><rect x="0" y="12" width="2" height="4" fill="#FFD09A"/><rect x="2" y="24" width="26" height="2" fill="#FFD200"/><rect x="28" y="6" width="2" height="20" fill="#D8A018"/><rect x="28" y="6" width="2" height="4" fill="#C8C800"/><rect x="0" y="26" width="28" height="2" fill="#909820"/></svg>
<div class="t" style="left:277.5px;top:990.1px;font-size:26.5px;line-height:26.5px;letter-spacing:0.3px">panam_offshore_leaks_csvs</div>
<div class="pm" style="left:206px;top:1032px"><i style="left:2px;top:6px;width:10px;height:2px"></i><i style="left:6px;top:2px;width:2px;height:10px"></i></div>
<svg style="left:238px;top:1024px" width="30" height="28" viewBox="0 0 30 28"><path d="M0 0 H10 L14 6 H28 V26 H0 Z" fill="#FFFFC4"/><rect x="0" y="0" width="10" height="2" fill="#FFC90E"/><path d="M10 1 L12 3 L14 5" stroke="#E6B800" stroke-width="2" fill="none"/><rect x="2" y="4" width="8" height="4" fill="#FFFF90"/><rect x="2" y="8" width="26" height="4" fill="#FFCF9A"/><rect x="0" y="12" width="28" height="12" fill="#FFD060"/><rect x="0" y="8" width="2" height="4" fill="#FFFF80"/><rect x="0" y="12" width="2" height="4" fill="#FFD09A"/><rect x="2" y="24" width="26" height="2" fill="#FFD200"/><rect x="28" y="6" width="2" height="20" fill="#D8A018"/><rect x="28" y="6" width="2" height="4" fill="#C8C800"/><rect x="0" y="26" width="28" height="2" fill="#909820"/></svg>
<div class="t" style="left:277.5px;top:1026.1px;font-size:26.5px;line-height:26.5px;letter-spacing:0.3px">tesco_bills</div>
<div class="pm" style="left:206px;top:1068px"><i style="left:2px;top:6px;width:10px;height:2px"></i><i style="left:6px;top:2px;width:2px;height:10px"></i></div>
<svg style="left:238px;top:1060px" width="30" height="28" viewBox="0 0 30 28"><path d="M0 0 H10 L14 6 H28 V26 H0 Z" fill="#FFFFC4"/><rect x="0" y="0" width="10" height="2" fill="#FFC90E"/><path d="M10 1 L12 3 L14 5" stroke="#E6B800" stroke-width="2" fill="none"/><rect x="2" y="4" width="8" height="4" fill="#FFFF90"/><rect x="2" y="8" width="26" height="4" fill="#FFCF9A"/><rect x="0" y="12" width="28" height="12" fill="#FFD060"/><rect x="0" y="8" width="2" height="4" fill="#FFFF80"/><rect x="0" y="12" width="2" height="4" fill="#FFD09A"/><rect x="2" y="24" width="26" height="2" fill="#FFD200"/><rect x="28" y="6" width="2" height="20" fill="#D8A018"/><rect x="28" y="6" width="2" height="4" fill="#C8C800"/><rect x="0" y="26" width="28" height="2" fill="#909820"/></svg>
<div class="t" style="left:277.5px;top:1062.1px;font-size:26.5px;line-height:26.5px;letter-spacing:0.3px">uber-tlc-foil-response</div>
<div class="pm" style="left:206px;top:1104px"><i style="left:2px;top:6px;width:10px;height:2px"></i><i style="left:6px;top:2px;width:2px;height:10px"></i></div>
<svg style="left:238px;top:1096px" width="30" height="28" viewBox="0 0 30 28"><path d="M0 0 H10 L14 6 H28 V26 H0 Z" fill="#FFFFC4"/><rect x="0" y="0" width="10" height="2" fill="#FFC90E"/><path d="M10 1 L12 3 L14 5" stroke="#E6B800" stroke-width="2" fill="none"/><rect x="2" y="4" width="8" height="4" fill="#FFFF90"/><rect x="2" y="8" width="26" height="4" fill="#FFCF9A"/><rect x="0" y="12" width="28" height="12" fill="#FFD060"/><rect x="0" y="8" width="2" height="4" fill="#FFFF80"/><rect x="0" y="12" width="2" height="4" fill="#FFD09A"/><rect x="2" y="24" width="26" height="2" fill="#FFD200"/><rect x="28" y="6" width="2" height="20" fill="#D8A018"/><rect x="28" y="6" width="2" height="4" fill="#C8C800"/><rect x="0" y="26" width="28" height="2" fill="#909820"/></svg>
<div class="t" style="left:277.5px;top:1098.1px;font-size:26.5px;line-height:26.5px;letter-spacing:0.3px">uk-approved-food-establishments</div>
<div class="pm" style="left:206px;top:1140px"><i style="left:2px;top:6px;width:10px;height:2px"></i><i style="left:6px;top:2px;width:2px;height:10px"></i></div>
<svg style="left:238px;top:1132px" width="30" height="28" viewBox="0 0 30 28"><path d="M0 0 H10 L14 6 H28 V26 H0 Z" fill="#FFFFC4"/><rect x="0" y="0" width="10" height="2" fill="#FFC90E"/><path d="M10 1 L12 3 L14 5" stroke="#E6B800" stroke-width="2" fill="none"/><rect x="2" y="4" width="8" height="4" fill="#FFFF90"/><rect x="2" y="8" width="26" height="4" fill="#FFCF9A"/><rect x="0" y="12" width="28" height="12" fill="#FFD060"/><rect x="0" y="8" width="2" height="4" fill="#FFFF80"/><rect x="0" y="12" width="2" height="4" fill="#FFD09A"/><rect x="2" y="24" width="26" height="2" fill="#FFD200"/><rect x="28" y="6" width="2" height="20" fill="#D8A018"/><rect x="28" y="6" width="2" height="4" fill="#C8C800"/><rect x="0" y="26" width="28" height="2" fill="#909820"/></svg>
<div class="t" style="left:277.5px;top:1134.1px;font-size:26.5px;line-height:26.5px;letter-spacing:0.3px">uk-land-registry-monthly-price-paid-data</div>
<div class="pm" style="left:206px;top:1176px"><i style="left:2px;top:6px;width:10px;height:2px"></i><i style="left:6px;top:2px;width:2px;height:10px"></i></div>
<svg style="left:238px;top:1168px" width="30" height="28" viewBox="0 0 30 28"><path d="M0 0 H10 L14 6 H28 V26 H0 Z" fill="#FFFFC4"/><rect x="0" y="0" width="10" height="2" fill="#FFC90E"/><path d="M10 1 L12 3 L14 5" stroke="#E6B800" stroke-width="2" fill="none"/><rect x="2" y="4" width="8" height="4" fill="#FFFF90"/><rect x="2" y="8" width="26" height="4" fill="#FFCF9A"/><rect x="0" y="12" width="28" height="12" fill="#FFD060"/><rect x="0" y="8" width="2" height="4" fill="#FFFF80"/><rect x="0" y="12" width="2" height="4" fill="#FFD09A"/><rect x="2" y="24" width="26" height="2" fill="#FFD200"/><rect x="28" y="6" width="2" height="20" fill="#D8A018"/><rect x="28" y="6" width="2" height="4" fill="#C8C800"/><rect x="0" y="26" width="28" height="2" fill="#909820"/></svg>
<div class="t" style="left:277.5px;top:1170.1px;font-size:26.5px;line-height:26.5px;letter-spacing:0.3px">uk-Rail-stations-travel-times</div>
<div class="pm" style="left:206px;top:1212px"><i style="left:2px;top:6px;width:10px;height:2px"></i><i style="left:6px;top:2px;width:2px;height:10px"></i></div>
<svg style="left:238px;top:1204px" width="30" height="28" viewBox="0 0 30 28"><path d="M0 0 H10 L14 6 H28 V26 H0 Z" fill="#FFFFC4"/><rect x="0" y="0" width="10" height="2" fill="#FFC90E"/><path d="M10 1 L12 3 L14 5" stroke="#E6B800" stroke-width="2" fill="none"/><rect x="2" y="4" width="8" height="4" fill="#FFFF90"/><rect x="2" y="8" width="26" height="4" fill="#FFCF9A"/><rect x="0" y="12" width="28" height="12" fill="#FFD060"/><rect x="0" y="8" width="2" height="4" fill="#FFFF80"/><rect x="0" y="12" width="2" height="4" fill="#FFD09A"/><rect x="2" y="24" width="26" height="2" fill="#FFD200"/><rect x="28" y="6" width="2" height="20" fill="#D8A018"/><rect x="28" y="6" width="2" height="4" fill="#C8C800"/><rect x="0" y="26" width="28" height="2" fill="#909820"/></svg>
<div class="t" style="left:277.5px;top:1206.1px;font-size:26.5px;line-height:26.5px;letter-spacing:0.3px">uk-road-accidents-safety-data</div>
<div class="pm" style="left:206px;top:1248px"><i style="left:2px;top:6px;width:10px;height:2px"></i><i style="left:6px;top:2px;width:2px;height:10px"></i></div>
<svg style="left:238px;top:1240px" width="30" height="28" viewBox="0 0 30 28"><path d="M0 0 H10 L14 6 H28 V26 H0 Z" fill="#FFFFC4"/><rect x="0" y="0" width="10" height="2" fill="#FFC90E"/><path d="M10 1 L12 3 L14 5" stroke="#E6B800" stroke-width="2" fill="none"/><rect x="2" y="4" width="8" height="4" fill="#FFFF90"/><rect x="2" y="8" width="26" height="4" fill="#FFCF9A"/><rect x="0" y="12" width="28" height="12" fill="#FFD060"/><rect x="0" y="8" width="2" height="4" fill="#FFFF80"/><rect x="0" y="12" width="2" height="4" fill="#FFD09A"/><rect x="2" y="24" width="26" height="2" fill="#FFD200"/><rect x="28" y="6" width="2" height="20" fill="#D8A018"/><rect x="28" y="6" width="2" height="4" fill="#C8C800"/><rect x="0" y="26" width="28" height="2" fill="#909820"/></svg>
<div class="t" style="left:277.5px;top:1242.1px;font-size:26.5px;line-height:26.5px;letter-spacing:0.3px">us_weather</div>
<div class="pm" style="left:206px;top:1284px"><i style="left:2px;top:6px;width:10px;height:2px"></i></div>
<svg style="left:238px;top:1276px" width="30" height="28" viewBox="0 0 30 28"><path d="M0 0 H10 L14 6 H28 V26 H0 Z" fill="#FFFFC4"/><rect x="0" y="0" width="10" height="2" fill="#FFC90E"/><path d="M10 1 L12 3 L14 5" stroke="#E6B800" stroke-width="2" fill="none"/><rect x="2" y="4" width="8" height="4" fill="#FFFF90"/><rect x="2" y="8" width="26" height="4" fill="#FFCF9A"/><rect x="0" y="12" width="28" height="12" fill="#FFD060"/><rect x="0" y="8" width="2" height="4" fill="#FFFF80"/><rect x="0" y="12" width="2" height="4" fill="#FFD09A"/><rect x="2" y="24" width="26" height="2" fill="#FFD200"/><rect x="28" y="6" width="2" height="20" fill="#D8A018"/><rect x="28" y="6" width="2" height="4" fill="#C8C800"/><rect x="0" y="26" width="28" height="2" fill="#909820"/></svg>
<div class="t" style="left:277.5px;top:1278.1px;font-size:26.5px;line-height:26.5px;letter-spacing:0.3px">yelp</div>
<div class="pm" style="left:244px;top:1320px"><i style="left:2px;top:6px;width:10px;height:2px"></i><i style="left:6px;top:2px;width:2px;height:10px"></i></div>
<svg style="left:276px;top:1312px" width="30" height="28" viewBox="0 0 30 28"><path d="M0 0 H10 L14 6 H28 V26 H0 Z" fill="#FFFFC4"/><rect x="0" y="0" width="10" height="2" fill="#FFC90E"/><path d="M10 1 L12 3 L14 5" stroke="#E6B800" stroke-width="2" fill="none"/><rect x="2" y="4" width="8" height="4" fill="#FFFF90"/><rect x="2" y="8" width="26" height="4" fill="#FFCF9A"/><rect x="0" y="12" width="28" height="12" fill="#FFD060"/><rect x="0" y="8" width="2" height="4" fill="#FFFF80"/><rect x="0" y="12" width="2" height="4" fill="#FFD09A"/><rect x="2" y="24" width="26" height="2" fill="#FFD200"/><rect x="28" y="6" width="2" height="20" fill="#D8A018"/><rect x="28" y="6" width="2" height="4" fill="#C8C800"/><rect x="0" y="26" width="28" height="2" fill="#909820"/></svg>
<div class="t" style="left:315.5px;top:1314.1px;font-size:26.5px;line-height:26.5px;letter-spacing:0.3px">csv</div>
<div class="pm" style="left:244px;top:1356px"><i style="left:2px;top:6px;width:10px;height:2px"></i></div>
<svg style="left:276px;top:1348px" width="30" height="28" viewBox="0 0 30 28"><path d="M0 0 H10 L14 6 H28 V26 H0 Z" fill="#FFFFC4"/><rect x="0" y="0" width="10" height="2" fill="#FFC90E"/><path d="M10 1 L12 3 L14 5" stroke="#E6B800" stroke-width="2" fill="none"/><rect x="2" y="4" width="8" height="4" fill="#FFFF90"/><rect x="2" y="8" width="26" height="4" fill="#FFCF9A"/><rect x="0" y="12" width="28" height="12" fill="#FFD060"/><rect x="0" y="8" width="2" height="4" fill="#FFFF80"/><rect x="0" y="12" width="2" height="4" fill="#FFD09A"/><rect x="2" y="24" width="26" height="2" fill="#FFD200"/><rect x="28" y="6" width="2" height="20" fill="#D8A018"/><rect x="28" y="6" width="2" height="4" fill="#C8C800"/><rect x="0" y="26" width="28" height="2" fill="#909820"/></svg>
<div class="t" style="left:315.5px;top:1350.1px;font-size:26.5px;line-height:26.5px;letter-spacing:0.3px">json</div>
<svg style="left:312px;top:1382px" width="32" height="32" viewBox="0 0 32 32"><rect width="32" height="32" fill="#A7C8F0"/><path d="M8 6 H5 V14 H3 V16 H5 V25 H8" stroke="#2010D0" stroke-width="2.4" fill="none"/><path d="M24 6 H27 V14 H29 V16 H27 V25 H24" stroke="#2010D0" stroke-width="2.4" fill="none"/><rect x="10" y="8" width="2" height="4" fill="#2010D0"/><rect x="12" y="8" width="2" height="2" fill="#2010D0"/><rect x="18" y="8" width="2" height="4" fill="#2010D0"/><rect x="22" y="8" width="2" height="4" fill="#2010D0"/></svg>
<div class="t" style="left:353.5px;top:1386.1px;font-size:26.5px;line-height:26.5px;letter-spacing:0.3px">yelp_academic_dataset_business.json</div>
<svg style="left:312px;top:1418px" width="32" height="32" viewBox="0 0 32 32"><rect width="32" height="32" fill="#A7C8F0"/><path d="M8 6 H5 V14 H3 V16 H5 V25 H8" stroke="#2010D0" stroke-width="2.4" fill="none"/><path d="M24 6 H27 V14 H29 V16 H27 V25 H24" stroke="#2010D0" stroke-width="2.4" fill="none"/><rect x="10" y="8" width="2" height="4" fill="#2010D0"/><rect x="12" y="8" width="2" height="2" fill="#2010D0"/><rect x="18" y="8" width="2" height="4" fill="#2010D0"/><rect x="22" y="8" width="2" height="4" fill="#2010D0"/></svg>
<div class="t" style="left:353.5px;top:1422.1px;font-size:26.5px;line-height:26.5px;letter-spacing:0.3px">yelp_academic_dataset_checkin.json</div>
<svg style="left:312px;top:1454px" width="32" height="32" viewBox="0 0 32 32"><rect width="32" height="32" fill="#A7C8F0"/><path d="M8 6 H5 V14 H3 V16 H5 V25 H8" stroke="#2010D0" stroke-width="2.4" fill="none"/><path d="M24 6 H27 V14 H29 V16 H27 V25 H24" stroke="#2010D0" stroke-width="2.4" fill="none"/><rect x="10" y="8" width="2" height="4" fill="#2010D0"/><rect x="12" y="8" width="2" height="2" fill="#2010D0"/><rect x="18" y="8" width="2" height="4" fill="#2010D0"/><rect x="22" y="8" width="2" height="4" fill="#2010D0"/></svg>
<div class="t" style="left:353.5px;top:1458.1px;font-size:26.5px;line-height:26.5px;letter-spacing:0.3px">yelp_academic_dataset_review.json</div>
<svg style="left:312px;top:1490px" width="32" height="32" viewBox="0 0 32 32"><rect width="32" height="32" fill="#A7C8F0"/><path d="M8 6 H5 V14 H3 V16 H5 V25 H8" stroke="#2010D0" stroke-width="2.4" fill="none"/><path d="M24 6 H27 V14 H29 V16 H27 V25 H24" stroke="#2010D0" stroke-width="2.4" fill="none"/><rect x="10" y="8" width="2" height="4" fill="#2010D0"/><rect x="12" y="8" width="2" height="2" fill="#2010D0"/><rect x="18" y="8" width="2" height="4" fill="#2010D0"/><rect x="22" y="8" width="2" height="4" fill="#2010D0"/></svg>
<div class="t" style="left:353.5px;top:1494.1px;font-size:26.5px;line-height:26.5px;letter-spacing:0.3px">yelp_academic_dataset_tip.json</div>
<svg style="left:312px;top:1526px" width="32" height="32" viewBox="0 0 32 32"><rect width="32" height="32" fill="#A7C8F0"/><path d="M8 6 H5 V14 H3 V16 H5 V25 H8" stroke="#2010D0" stroke-width="2.4" fill="none"/><path d="M24 6 H27 V14 H29 V16 H27 V25 H24" stroke="#2010D0" stroke-width="2.4" fill="none"/><rect x="10" y="8" width="2" height="4" fill="#2010D0"/><rect x="12" y="8" width="2" height="2" fill="#2010D0"/><rect x="18" y="8" width="2" height="4" fill="#2010D0"/><rect x="22" y="8" width="2" height="4" fill="#2010D0"/></svg>
<div class="t" style="left:353.5px;top:1530.1px;font-size:26.5px;line-height:26.5px;letter-spacing:0.3px">yelp_academic_dataset_user.json</div>
<svg style="left:238px;top:1564px" width="32" height="30" viewBox="0 0 32 30"><path d="M8 0 H28 L30 2 V30 H8 Z" fill="#E8E8E8"/><path d="M26 0 L30 4" stroke="#888" stroke-width="1.5"/><rect x="0" y="6" width="24" height="16" fill="#9A4E98"/><rect x="22" y="6" width="2" height="16" fill="#6A2A6A"/><rect x="2" y="8" width="20" height="12" fill="#5A5A5A"/><rect x="4" y="10" width="16" height="8" fill="#fff"/><rect x="5" y="12" width="6" height="3" fill="#505050"/><path d="M12 12 L14 15 L16 11 V18" stroke="#505050" stroke-width="1.6" fill="none"/></svg>
<div class="t" style="left:277.5px;top:1566.1px;font-size:26.5px;line-height:26.5px;letter-spacing:0.3px">._nyc_subway_entrances.csv</div>
<svg style="left:240px;top:1602px" width="24" height="28" viewBox="0 0 24 28"><path d="M1 1 H16 L23 8 V27 H1 Z" fill="#FFFFFF" stroke="#D6D6D6" stroke-width="2"/><path d="M16 1 L23 8" stroke="#B0B0B0" stroke-width="2"/><rect x="0" y="26" width="24" height="2" fill="#A8A8A8"/></svg>
<div class="t" style="left:277.5px;top:1602.1px;font-size:26.5px;line-height:26.5px;letter-spacing:0.3px">._panam_offshore_leaks_csvs</div>
<svg style="left:240px;top:1638px" width="24" height="28" viewBox="0 0 24 28"><path d="M1 1 H16 L23 8 V27 H1 Z" fill="#FFFFFF" stroke="#D6D6D6" stroke-width="2"/><path d="M16 1 L23 8" stroke="#B0B0B0" stroke-width="2"/><rect x="0" y="26" width="24" height="2" fill="#A8A8A8"/></svg>
<div class="t" style="left:277.5px;top:1638.1px;font-size:26.5px;line-height:26.5px;letter-spacing:0.3px">._Rail-stations-travel-times.zip</div>
<svg style="left:240px;top:1674px" width="24" height="28" viewBox="0 0 24 28"><path d="M1 1 H16 L23 8 V27 H1 Z" fill="#FFFFFF" stroke="#D6D6D6" stroke-width="2"/><path d="M16 1 L23 8" stroke="#B0B0B0" stroke-width="2"/><rect x="0" y="26" width="24" height="2" fill="#A8A8A8"/></svg>
<div class="t" style="left:277.5px;top:1674.1px;font-size:26.5px;line-height:26.5px;letter-spacing:0.3px">._road-accidents-safety-data.zip</div>
<svg style="left:240px;top:1710px" width="24" height="28" viewBox="0 0 24 28"><path d="M1 1 H16 L23 8 V27 H1 Z" fill="#FFFFFF" stroke="#D6D6D6" stroke-width="2"/><path d="M16 1 L23 8" stroke="#B0B0B0" stroke-width="2"/><rect x="0" y="26" width="24" height="2" fill="#A8A8A8"/></svg>
<div class="t" style="left:277.5px;top:1710.1px;font-size:26.5px;line-height:26.5px;letter-spacing:0.3px">._uk-approved-food-establishments</div>
<svg style="left:240px;top:1746px" width="24" height="28" viewBox="0 0 24 28"><path d="M1 1 H16 L23 8 V27 H1 Z" fill="#FFFFFF" stroke="#D6D6D6" stroke-width="2"/><path d="M16 1 L23 8" stroke="#B0B0B0" stroke-width="2"/><rect x="0" y="26" width="24" height="2" fill="#A8A8A8"/></svg>
<div class="t" style="left:277.5px;top:1746.1px;font-size:26.5px;line-height:26.5px;letter-spacing:0.3px">._uk-road-accidents-safety-data</div>
<svg style="left:238px;top:1780px" width="32" height="30" viewBox="0 0 32 30"><path d="M8 0 H28 L30 2 V30 H8 Z" fill="#E8E8E8"/><path d="M26 0 L30 4" stroke="#888" stroke-width="1.5"/><rect x="0" y="6" width="24" height="16" fill="#9A4E98"/><rect x="22" y="6" width="2" height="16" fill="#6A2A6A"/><rect x="2" y="8" width="20" height="12" fill="#5A5A5A"/><rect x="4" y="10" width="16" height="8" fill="#fff"/><rect x="5" y="12" width="6" height="3" fill="#505050"/><path d="M12 12 L14 15 L16 11 V18" stroke="#505050" stroke-width="1.6" fill="none"/></svg>
<div class="t" style="left:277.5px;top:1782.1px;font-size:26.5px;line-height:26.5px;letter-spacing:0.3px">nyc_subway_entrances.csv</div>
<div class="pm" style="left:130px;top:1824px"><i style="left:2px;top:6px;width:10px;height:2px"></i><i style="left:6px;top:2px;width:2px;height:10px"></i></div>
<svg style="left:162px;top:1816px" width="30" height="28" viewBox="0 0 30 28"><path d="M0 0 H10 L14 6 H28 V26 H0 Z" fill="#FFFFC4"/><rect x="0" y="0" width="10" height="2" fill="#FFC90E"/><path d="M10 1 L12 3 L14 5" stroke="#E6B800" stroke-width="2" fill="none"/><rect x="2" y="4" width="8" height="4" fill="#FFFF90"/><rect x="2" y="8" width="26" height="4" fill="#FFCF9A"/><rect x="0" y="12" width="28" height="12" fill="#FFD060"/><rect x="0" y="8" width="2" height="4" fill="#FFFF80"/><rect x="0" y="12" width="2" height="4" fill="#FFD09A"/><rect x="2" y="24" width="26" height="2" fill="#FFD200"/><rect x="28" y="6" width="2" height="20" fill="#D8A018"/><rect x="28" y="6" width="2" height="4" fill="#C8C800"/><rect x="0" y="26" width="28" height="2" fill="#909820"/></svg>
<div class="t" style="left:201.5px;top:1818.1px;font-size:26.5px;line-height:26.5px;letter-spacing:0.3px">spark</div>
<div class="pm" style="left:54px;top:1860px"><i style="left:2px;top:6px;width:10px;height:2px"></i><i style="left:6px;top:2px;width:2px;height:10px"></i></div>
<svg style="left:88px;top:1854px" width="26" height="26" viewBox="0 0 26 26"><ellipse cx="13" cy="3" rx="10" ry="3" fill="#C8C8C8"/><rect x="0" y="2" width="26" height="22" rx="3" fill="#D4D4D4"/><rect x="0" y="2" width="3" height="22" fill="#9A9A9A"/><rect x="23" y="4" width="3" height="20" fill="#8A8A8A"/><rect x="4" y="8" width="18" height="2" fill="#B8B0C8"/><rect x="4" y="11" width="18" height="3" fill="#404040"/><rect x="4" y="17" width="18" height="3" fill="#404040"/><ellipse cx="13" cy="24" rx="10" ry="2" fill="#BDBDBD"/></svg>
<div class="t" style="left:125.5px;top:1854.1px;font-size:26.5px;line-height:26.5px;letter-spacing:0.3px">hdfs.root</div>
<div style="left:898px;top:192px;width:32px;height:1712px;background:#F0F0F0"></div>
<div style="left:898px;top:466px;width:30px;height:1404px;background:#CDCDCD"></div>
<svg style="left:0;top:0" width="1" height="1"><path d="M906 214 L913 207 L920 214" stroke="#606060" stroke-width="3.2" fill="none"/></svg>
<svg style="left:0;top:0" width="1" height="1"><path d="M906 1883 L913 1890 L920 1883" stroke="#606060" stroke-width="3.2" fill="none"/></svg>
<div style="left:942px;top:190px;width:2380px;height:234px;background:#fff;border:2px solid #000"></div>
<div style="left:944px;top:192px;width:2376px;height:2px;background:#A0A0A0"></div>
<div style="left:944px;top:192px;width:2px;height:92px;background:#A0A0A0"></div>
<div style="left:946px;top:194px;width:2374px;height:2px;background:#F0F0F0"></div>
<div style="left:946px;top:238px;width:2374px;height:2px;background:#A0A0A0"></div>
<div style="left:946px;top:240px;width:146px;height:44px;background:#BCDCF4"></div>
<div style="left:1094px;top:240px;width:2224px;height:42px;background:#3399FF"></div>
<div style="left:1094px;top:282px;width:2226px;height:2px;background:#A0A0A0"></div>
<div style="left:1092px;top:194px;width:2px;height:90px;background:#A0A0A0"></div>
<div style="left:2230px;top:196px;width:2px;height:42px;background:#E0E0E0"></div>
<div style="left:2230px;top:240px;width:2px;height:44px;background:#A0A0A0"></div>
<div style="left:3081px;top:196px;width:2px;height:42px;background:#E0E0E0"></div>
<div style="left:3081px;top:240px;width:2px;height:44px;background:#A0A0A0"></div>
<div style="left:3318px;top:194px;width:2px;height:90px;background:#A0A0A0"></div>
<svg style="left:958px;top:254px" width="10" height="18" viewBox="0 0 10 18"><path d="M0 0 L10 9 L0 18 Z" fill="#404040"/></svg>
<div class="t" style="left:1000.0px;top:250.8px;font-size:28px;line-height:28px;">1</div>
<div class="t" style="left:1106.5px;top:204.1px;font-size:26.5px;line-height:26.5px;">COLUMN_NAME</div>
<div class="t" style="left:2245.5px;top:204.1px;font-size:26.5px;line-height:26.5px;">DATA_TYPE</div>
<div class="t" style="left:3094.5px;top:204.1px;font-size:26.5px;line-height:26.5px;">IS_NULLABLE</div>
<div class="t" style="left:1099.5px;top:250.1px;font-size:26.5px;line-height:26.5px;color:#fff;">Metadata does not exist</div>
<div style="left:942px;top:496px;width:2380px;height:1410px;background:#fff;border:2px solid #000"></div>
<div style="left:944px;top:498px;width:2342px;height:2px;background:#A0A0A0"></div>
<div style="left:946px;top:500px;width:2340px;height:2px;background:#F0F0F0"></div>
<div style="left:944px;top:498px;width:2px;height:1374px;background:#A0A0A0"></div>
<div style="left:946px;top:544px;width:2340px;height:2px;background:#A0A0A0"></div>
<div style="left:1092px;top:500px;width:2px;height:1372px;background:#A0A0A0"></div>
<div style="left:1494px;top:502px;width:2px;height:42px;background:#E0E0E0"></div>
<div style="left:2218px;top:502px;width:2px;height:42px;background:#E0E0E0"></div>
<div style="left:1494px;top:546px;width:2px;height:1320px;background:#A0A0A0"></div>
<div style="left:2218px;top:546px;width:2px;height:1320px;background:#A0A0A0"></div>
<div class="t" style="left:1107.5px;top:509.1px;font-size:26.5px;line-height:26.5px;">business_id</div>
<div class="t" style="left:1508.5px;top:509.1px;font-size:26.5px;line-height:26.5px;">full_address</div>
<div class="t" style="left:2233.5px;top:509.1px;font-size:26.5px;line-height:26.5px;">hours</div>
<svg style="left:1470px;top:518px" width="18" height="10" viewBox="0 0 18 10"><path d="M0 10 L9 0 L18 10 Z" fill="#A8A8A8"/></svg>
<div style="left:946px;top:588px;width:146px;height:2px;background:#E4E4E4"></div>
<div style="left:1094px;top:588px;width:2192px;height:2px;background:#A0A0A0"></div>
<div class="t" style="left:999.0px;top:556.8px;font-size:28px;line-height:28px;">1</div>
<div class="t" style="left:1098.5px;top:556.1px;font-size:26.5px;line-height:26.5px;">_qopVQ6_Mz6W7-Pmbi56GQ</div>
<div class="t" style="left:1500.5px;top:556.1px;font-size:26.5px;line-height:26.5px;">1011 Washington AveCarnegie, PA 15106</div>
<div style="left:946px;top:632px;width:146px;height:2px;background:#E4E4E4"></div>
<div style="left:1094px;top:632px;width:2192px;height:2px;background:#A0A0A0"></div>
<div class="t" style="left:999.0px;top:600.8px;font-size:28px;line-height:28px;">2</div>
<div class="t" style="left:1098.5px;top:600.1px;font-size:26.5px;line-height:26.5px;">0hrB2iwQZ52VZcZWYywXrA</div>
<div class="t" style="left:1500.5px;top:600.1px;font-size:26.5px;line-height:26.5px;">101 E 7th AveHomesteadHomestead, PA 15120</div>
<div style="left:946px;top:676px;width:146px;height:2px;background:#E4E4E4"></div>
<div style="left:1094px;top:676px;width:2192px;height:2px;background:#A0A0A0"></div>
<div class="t" style="left:999.0px;top:644.8px;font-size:28px;line-height:28px;">3</div>
<div class="t" style="left:1098.5px;top:644.1px;font-size:26.5px;line-height:26.5px;">1_lU0-eSWJCRvNGk78Zh9Q</div>
<div class="t" style="left:1500.5px;top:644.1px;font-size:26.5px;line-height:26.5px;">300 Beechwood AveCarnegieCarnegie, PA 15106</div>
<div style="left:946px;top:720px;width:146px;height:2px;background:#E4E4E4"></div>
<div style="left:1094px;top:720px;width:2192px;height:2px;background:#A0A0A0"></div>
<div style="left:1094px;top:678px;width:400px;height:42px;background:#3399FF"></div>
<svg style="left:958px;top:692px" width="10" height="18" viewBox="0 0 10 18"><path d="M0 0 L10 9 L0 18 Z" fill="#404040"/></svg>
<div class="t" style="left:999.0px;top:688.8px;font-size:28px;line-height:28px;">4</div>
<div class="t" style="left:1098.5px;top:688.1px;font-size:26.5px;line-height:26.5px;color:#fff;">1qCuOcks5HRv67OHovAVpg</div>
<div class="t" style="left:1500.5px;top:688.1px;font-size:26.5px;line-height:26.5px;">122 W 8th AveHomesteadHomestead, PA 15120</div>
<div style="left:946px;top:764px;width:146px;height:2px;background:#E4E4E4"></div>
<div style="left:1094px;top:764px;width:2192px;height:2px;background:#A0A0A0"></div>
<div class="t" style="left:999.0px;top:732.8px;font-size:28px;line-height:28px;">5</div>
<div class="t" style="left:1098.5px;top:732.1px;font-size:26.5px;line-height:26.5px;">1u2NauOy8xDj7aFQET680A</div>
<div class="t" style="left:1500.5px;top:732.1px;font-size:26.5px;line-height:26.5px;">100 Roessler RdCarnegie, PA 15106</div>
<div style="left:946px;top:808px;width:146px;height:2px;background:#E4E4E4"></div>
<div style="left:1094px;top:808px;width:2192px;height:2px;background:#A0A0A0"></div>
<div class="t" style="left:999.0px;top:776.8px;font-size:28px;line-height:28px;">6</div>
<div class="t" style="left:1098.5px;top:776.1px;font-size:26.5px;line-height:26.5px;">3eu6MEFlq2Dg7bQh8QbdOg</div>
<div class="t" style="left:1500.5px;top:776.1px;font-size:26.5px;line-height:26.5px;">1 Ravine StDravosburg, PA 15034</div>
<div style="left:946px;top:852px;width:146px;height:2px;background:#E4E4E4"></div>
<div style="left:1094px;top:852px;width:2192px;height:2px;background:#A0A0A0"></div>
<div class="t" style="left:999.0px;top:820.8px;font-size:28px;line-height:28px;">7</div>
<div class="t" style="left:1098.5px;top:820.1px;font-size:26.5px;line-height:26.5px;">3gmBc0qN_LtGbZAjTtHWZg</div>
<div class="t" style="left:1500.5px;top:820.1px;font-size:26.5px;line-height:26.5px;">270 W Bridge StHomesteadHomestead, PA 15120</div>
<div style="left:946px;top:896px;width:146px;height:2px;background:#E4E4E4"></div>
<div style="left:1094px;top:896px;width:2192px;height:2px;background:#A0A0A0"></div>
<div class="t" style="left:999.0px;top:864.8px;font-size:28px;line-height:28px;">8</div>
<div class="t" style="left:1098.5px;top:864.1px;font-size:26.5px;line-height:26.5px;">3ZVKmuK2l7uXPE6lXY4Dbg</div>
<div class="t" style="left:1500.5px;top:864.1px;font-size:26.5px;line-height:26.5px;">8 Logan StCarnegieCarnegie, PA 15106</div>
<div style="left:946px;top:940px;width:146px;height:2px;background:#E4E4E4"></div>
<div style="left:1094px;top:940px;width:2192px;height:2px;background:#A0A0A0"></div>
<div class="t" style="left:999.0px;top:908.8px;font-size:28px;line-height:28px;">9</div>
<div class="t" style="left:1098.5px;top:908.1px;font-size:26.5px;line-height:26.5px;">4ykgzzzGEWjMD5lwk1-l9A</div>
<div class="t" style="left:1500.5px;top:908.1px;font-size:26.5px;line-height:26.5px;">347 Lebanon RdWest Mifflin, PA 15122</div>
<div style="left:946px;top:984px;width:146px;height:2px;background:#E4E4E4"></div>
<div style="left:1094px;top:984px;width:2192px;height:2px;background:#A0A0A0"></div>
<div class="t" style="left:999.0px;top:952.8px;font-size:28px;line-height:28px;">10</div>
<div class="t" style="left:1098.5px;top:952.1px;font-size:26.5px;line-height:26.5px;">53Yk2EODWnV9qHQECzeHVQ</div>
<div class="t" style="left:1500.5px;top:952.1px;font-size:26.5px;line-height:26.5px;">1842 Homeville RdWest Mifflin, PA 15122</div>
<div style="left:946px;top:1028px;width:146px;height:2px;background:#E4E4E4"></div>
<div style="left:1094px;top:1028px;width:2192px;height:2px;background:#A0A0A0"></div>
<div class="t" style="left:999.0px;top:996.8px;font-size:28px;line-height:28px;">11</div>
<div class="t" style="left:1098.5px;top:996.1px;font-size:26.5px;line-height:26.5px;">57HN9fGRar_GckBmgHgemA</div>
<div class="t" style="left:1500.5px;top:996.1px;font-size:26.5px;line-height:26.5px;">280 Waterfront Dr EHomesteadHomestead, PA 15120</div>
<div style="left:946px;top:1072px;width:146px;height:2px;background:#E4E4E4"></div>
<div style="left:1094px;top:1072px;width:2192px;height:2px;background:#A0A0A0"></div>
<div class="t" style="left:999.0px;top:1040.8px;font-size:28px;line-height:28px;">12</div>
<div class="t" style="left:1098.5px;top:1040.1px;font-size:26.5px;line-height:26.5px;">5UmKMjUEUNdYWqANhGckJw</div>
<div class="t" style="left:1500.5px;top:1040.1px;font-size:26.5px;line-height:26.5px;">4734 Lebanon Church RdDravosburg, PA 15034</div>
<div style="left:946px;top:1116px;width:146px;height:2px;background:#E4E4E4"></div>
<div style="left:1094px;top:1116px;width:2192px;height:2px;background:#A0A0A0"></div>
<div class="t" style="left:999.0px;top:1084.8px;font-size:28px;line-height:28px;">13</div>
<div class="t" style="left:1098.5px;top:1084.1px;font-size:26.5px;line-height:26.5px;">6ilJq_05xRgek_8qUp36-g</div>
<div class="t" style="left:1500.5px;top:1084.1px;font-size:26.5px;line-height:26.5px;">650 E  Waterfront DrHomesteadMunhall, PA 15120</div>
<div style="left:946px;top:1160px;width:146px;height:2px;background:#E4E4E4"></div>
<div style="left:1094px;top:1160px;width:2192px;height:2px;background:#A0A0A0"></div>
<div class="t" style="left:999.0px;top:1128.8px;font-size:28px;line-height:28px;">14</div>
<div class="t" style="left:1098.5px;top:1128.1px;font-size:26.5px;line-height:26.5px;">6o3RK6rTcN3nw-j-r2nQmA</div>
<div class="t" style="left:1500.5px;top:1128.1px;font-size:26.5px;line-height:26.5px;">231 E Main StCarnegieCarnegie, PA 15106</div>
<div style="left:946px;top:1204px;width:146px;height:2px;background:#E4E4E4"></div>
<div style="left:1094px;top:1204px;width:2192px;height:2px;background:#A0A0A0"></div>
<div class="t" style="left:999.0px;top:1172.8px;font-size:28px;line-height:28px;">15</div>
<div class="t" style="left:1098.5px;top:1172.1px;font-size:26.5px;line-height:26.5px;">6p9TIP2l8S4agxYMNFSDjg</div>
<div class="t" style="left:1500.5px;top:1172.1px;font-size:26.5px;line-height:26.5px;">205 East Waterfront DriveHomesteadHomestead, PA 15120</div>
<div style="left:946px;top:1248px;width:146px;height:2px;background:#E4E4E4"></div>
<div style="left:1094px;top:1248px;width:2192px;height:2px;background:#A0A0A0"></div>
<div class="t" style="left:999.0px;top:1216.8px;font-size:28px;line-height:28px;">16</div>
<div class="t" style="left:1098.5px;top:1216.1px;font-size:26.5px;line-height:26.5px;">8Nm_jcCYtMXYW0ODSHDiXA</div>
<div class="t" style="left:1500.5px;top:1216.1px;font-size:26.5px;line-height:26.5px;">4260 Steubenville PikePittsburgh, PA 15205</div>
<div style="left:946px;top:1292px;width:146px;height:2px;background:#E4E4E4"></div>
<div style="left:1094px;top:1292px;width:2192px;height:2px;background:#A0A0A0"></div>
<div class="t" style="left:999.0px;top:1260.8px;font-size:28px;line-height:28px;">17</div>
<div class="t" style="left:1098.5px;top:1260.1px;font-size:26.5px;line-height:26.5px;">8QlnAcjGE6dgfKTVoxrPvQ</div>
<div class="t" style="left:1500.5px;top:1260.1px;font-size:26.5px;line-height:26.5px;">300 Davis BlvdEtnaPittsburgh, PA 15275</div>
<div style="left:946px;top:1336px;width:146px;height:2px;background:#E4E4E4"></div>
<div style="left:1094px;top:1336px;width:2192px;height:2px;background:#A0A0A0"></div>
<div class="t" style="left:999.0px;top:1304.8px;font-size:28px;line-height:28px;">18</div>
<div class="t" style="left:1098.5px;top:1304.1px;font-size:26.5px;line-height:26.5px;">9tAbTDdYTASHL7EU1e-OWw</div>
<div class="t" style="left:1500.5px;top:1304.1px;font-size:26.5px;line-height:26.5px;">500 Pine Hollow RdMc Kees Rocks, PA 15136</div>
<div style="left:946px;top:1380px;width:146px;height:2px;background:#E4E4E4"></div>
<div style="left:1094px;top:1380px;width:2192px;height:2px;background:#A0A0A0"></div>
<div class="t" style="left:999.0px;top:1348.8px;font-size:28px;line-height:28px;">19</div>
<div class="t" style="left:1098.5px;top:1348.1px;font-size:26.5px;line-height:26.5px;">b12U9TFESStdy7CsTtcOeg</div>
<div class="t" style="left:1500.5px;top:1348.1px;font-size:26.5px;line-height:26.5px;">718A Hope Hollow RdCarnegie, PA 15106</div>
<div style="left:946px;top:1424px;width:146px;height:2px;background:#E4E4E4"></div>
<div style="left:1094px;top:1424px;width:2192px;height:2px;background:#A0A0A0"></div>
<div class="t" style="left:999.0px;top:1392.8px;font-size:28px;line-height:28px;">20</div>
<div class="t" style="left:1098.5px;top:1392.1px;font-size:26.5px;line-height:26.5px;">b9WZJp5L1RZr4F1nxclOoQ</div>
<div class="t" style="left:1500.5px;top:1392.1px;font-size:26.5px;line-height:26.5px;">1073 Washington AveCarnegie, PA 15106</div>
<div style="left:946px;top:1468px;width:146px;height:2px;background:#E4E4E4"></div>
<div style="left:1094px;top:1468px;width:2192px;height:2px;background:#A0A0A0"></div>
<div class="t" style="left:999.0px;top:1436.8px;font-size:28px;line-height:28px;">21</div>
<div class="t" style="left:1098.5px;top:1436.1px;font-size:26.5px;line-height:26.5px;">bCw9HKDFLU_PppnNg-nllw</div>
<div class="t" style="left:1500.5px;top:1436.1px;font-size:26.5px;line-height:26.5px;">1356 Hoffman BlvdWest Mifflin, PA 15122</div>
<div style="left:946px;top:1512px;width:146px;height:2px;background:#E4E4E4"></div>
<div style="left:1094px;top:1512px;width:2192px;height:2px;background:#A0A0A0"></div>
<div class="t" style="left:999.0px;top:1480.8px;font-size:28px;line-height:28px;">22</div>
<div class="t" style="left:1098.5px;top:1480.1px;font-size:26.5px;line-height:26.5px;">bN3jlkPqbqroQJteJsC2uw</div>
<div class="t" style="left:1500.5px;top:1480.1px;font-size:26.5px;line-height:26.5px;">715 Island AveMc Kees Rocks, PA 15136</div>
<div style="left:946px;top:1556px;width:146px;height:2px;background:#E4E4E4"></div>
<div style="left:1094px;top:1556px;width:2192px;height:2px;background:#A0A0A0"></div>
<div class="t" style="left:999.0px;top:1524.8px;font-size:28px;line-height:28px;">23</div>
<div class="t" style="left:1098.5px;top:1524.1px;font-size:26.5px;line-height:26.5px;">Cdcus0NADzyY3XiJM2O5Sg</div>
<div class="t" style="left:1500.5px;top:1524.1px;font-size:26.5px;line-height:26.5px;">1927 E Railroad StCarnegie, PA 15106</div>
<div style="left:946px;top:1600px;width:146px;height:2px;background:#E4E4E4"></div>
<div style="left:1094px;top:1600px;width:2192px;height:2px;background:#A0A0A0"></div>
<div class="t" style="left:999.0px;top:1568.8px;font-size:28px;line-height:28px;">24</div>
<div class="t" style="left:1098.5px;top:1568.1px;font-size:26.5px;line-height:26.5px;">cE27W9VPgO88Qxe4ol6y_g</div>
<div class="t" style="left:1500.5px;top:1568.1px;font-size:26.5px;line-height:26.5px;">1530 Hamilton RdBethel Park, PA 15234</div>
<div style="left:946px;top:1644px;width:146px;height:2px;background:#E4E4E4"></div>
<div style="left:1094px;top:1644px;width:2192px;height:2px;background:#A0A0A0"></div>
<div class="t" style="left:999.0px;top:1612.8px;font-size:28px;line-height:28px;">25</div>
<div class="t" style="left:1098.5px;top:1612.1px;font-size:26.5px;line-height:26.5px;">CgGT6sr4OCF2BHYngOlqlw</div>
<div class="t" style="left:1500.5px;top:1612.1px;font-size:26.5px;line-height:26.5px;">3804 Main StHomestead, PA 15120</div>
<div style="left:946px;top:1688px;width:146px;height:2px;background:#E4E4E4"></div>
<div style="left:1094px;top:1688px;width:2192px;height:2px;background:#A0A0A0"></div>
<div class="t" style="left:999.0px;top:1656.8px;font-size:28px;line-height:28px;">26</div>
<div class="t" style="left:1098.5px;top:1656.1px;font-size:26.5px;line-height:26.5px;">CL3tZqbYT7B5zgewKCS6-Q</div>
<div class="t" style="left:1500.5px;top:1656.1px;font-size:26.5px;line-height:26.5px;">Kennywood &amp; HoffmanWest Mifflin, PA 15122</div>
<div style="left:946px;top:1732px;width:146px;height:2px;background:#E4E4E4"></div>
<div style="left:1094px;top:1732px;width:2192px;height:2px;background:#A0A0A0"></div>
<div class="t" style="left:999.0px;top:1700.8px;font-size:28px;line-height:28px;">27</div>
<div class="t" style="left:1098.5px;top:1700.1px;font-size:26.5px;line-height:26.5px;">DMy5lG-dNrH4ARk96KngEA</div>
<div class="t" style="left:1500.5px;top:1700.1px;font-size:26.5px;line-height:26.5px;">324 Amity StHomesteadHomestead, PA 15120</div>
<div style="left:946px;top:1776px;width:146px;height:2px;background:#E4E4E4"></div>
<div style="left:1094px;top:1776px;width:2192px;height:2px;background:#A0A0A0"></div>
<div class="t" style="left:999.0px;top:1744.8px;font-size:28px;line-height:28px;">28</div>
<div class="t" style="left:1098.5px;top:1744.1px;font-size:26.5px;line-height:26.5px;">e_U_FnpdKVgNb4mUN2cU_Q</div>
<div class="t" style="left:1500.5px;top:1744.1px;font-size:26.5px;line-height:26.5px;">2323 Greentree RdCarnegie, PA 15106</div>
<div style="left:946px;top:1820px;width:146px;height:2px;background:#E4E4E4"></div>
<div style="left:1094px;top:1820px;width:2192px;height:2px;background:#A0A0A0"></div>
<div class="t" style="left:999.0px;top:1788.8px;font-size:28px;line-height:28px;">29</div>
<div class="t" style="left:1098.5px;top:1788.1px;font-size:26.5px;line-height:26.5px;">EoAY1JSVeJriBzld8lUQwQ</div>
<div class="t" style="left:1500.5px;top:1788.1px;font-size:26.5px;line-height:26.5px;">244 W Bridge StHomesteadWest Homestead, PA 15120</div>
<div style="left:946px;top:1864px;width:146px;height:2px;background:#E4E4E4"></div>
<div style="left:1094px;top:1864px;width:2192px;height:2px;background:#A0A0A0"></div>
<div class="t" style="left:999.0px;top:1832.8px;font-size:28px;line-height:28px;">30</div>
<div class="t" style="left:1098.5px;top:1832.1px;font-size:26.5px;line-height:26.5px;">eOv0Dbq2E8sd0CKMAqTlmw</div>
<div class="t" style="left:1500.5px;top:1832.1px;font-size:26.5px;line-height:26.5px;">531 Lincoln AveBellevueBellevue, PA 15202</div>
<div style="left:2220px;top:546px;width:1066px;height:1320px;overflow:hidden">
<div class="t" style="left:5.5px;top:10.1px;font-size:26.5px;line-height:26.5px;letter-spacing:0px">{</div>
<div class="t" style="left:26.5px;top:10.1px;font-size:26.5px;line-height:26.5px;letter-spacing:0.45px">&quot;Friday&quot;</div>
<div class="t" style="left:129.5px;top:10.1px;font-size:26.5px;line-height:26.5px;letter-spacing:0px">:</div>
<div class="t" style="left:141.5px;top:10.1px;font-size:26.5px;line-height:26.5px;letter-spacing:0px">{</div>
<div class="t" style="left:156.5px;top:10.1px;font-size:26.5px;line-height:26.5px;letter-spacing:0px">}</div>
<div class="t" style="left:168.5px;top:10.1px;font-size:26.5px;line-height:26.5px;letter-spacing:0px">,</div>
<div class="t" style="left:184.5px;top:10.1px;font-size:26.5px;line-height:26.5px;letter-spacing:1.1px">&quot;Tuesday&quot;</div>
<div class="t" style="left:320.5px;top:10.1px;font-size:26.5px;line-height:26.5px;letter-spacing:0px">:</div>
<div class="t" style="left:331.5px;top:10.1px;font-size:26.5px;line-height:26.5px;letter-spacing:0px">{</div>
<div class="t" style="left:346.5px;top:10.1px;font-size:26.5px;line-height:26.5px;letter-spacing:0px">}</div>
<div class="t" style="left:358.5px;top:10.1px;font-size:26.5px;line-height:26.5px;letter-spacing:0px">,</div>
<div class="t" style="left:374.5px;top:10.1px;font-size:26.5px;line-height:26.5px;letter-spacing:0.4px">&quot;Thursday&quot;</div>
<div class="t" style="left:515.5px;top:10.1px;font-size:26.5px;line-height:26.5px;letter-spacing:0px">:</div>
<div class="t" style="left:528.5px;top:10.1px;font-size:26.5px;line-height:26.5px;letter-spacing:0px">{</div>
<div class="t" style="left:543.5px;top:10.1px;font-size:26.5px;line-height:26.5px;letter-spacing:0px">}</div>
<div class="t" style="left:555.5px;top:10.1px;font-size:26.5px;line-height:26.5px;letter-spacing:0px">,</div>
<div class="t" style="left:571.5px;top:10.1px;font-size:26.5px;line-height:26.5px;letter-spacing:0.75px">&quot;Wednesday&quot;</div>
<div class="t" style="left:745.5px;top:10.1px;font-size:26.5px;line-height:26.5px;letter-spacing:0px">:</div>
<div class="t" style="left:758.5px;top:10.1px;font-size:26.5px;line-height:26.5px;letter-spacing:0px">{</div>
<div class="t" style="left:773.5px;top:10.1px;font-size:26.5px;line-height:26.5px;letter-spacing:0px">}</div>
<div class="t" style="left:785.5px;top:10.1px;font-size:26.5px;line-height:26.5px;letter-spacing:0px">,</div>
<div class="t" style="left:800.5px;top:10.1px;font-size:26.5px;line-height:26.5px;letter-spacing:0.7px">&quot;Monday&quot;</div>
<div class="t" style="left:925.5px;top:10.1px;font-size:26.5px;line-height:26.5px;letter-spacing:0px">:</div>
<div class="t" style="left:938.5px;top:10.1px;font-size:26.5px;line-height:26.5px;letter-spacing:0px">{</div>
<div class="t" style="left:952.5px;top:10.1px;font-size:26.5px;line-height:26.5px;letter-spacing:0px">}</div>
<div class="t" style="left:965.5px;top:10.1px;font-size:26.5px;line-height:26.5px;letter-spacing:0px">,</div>
<div class="t" style="left:980.5px;top:10.1px;font-size:26.5px;line-height:26.5px;letter-spacing:0.6px">&quot;Sunday&quot;</div>
<div class="t" style="left:5.5px;top:54.1px;font-size:26.5px;line-height:26.5px;letter-spacing:0px">{</div>
<div class="t" style="left:26.5px;top:54.1px;font-size:26.5px;line-height:26.5px;letter-spacing:0.45px">&quot;Friday&quot;</div>
<div class="t" style="left:129.5px;top:54.1px;font-size:26.5px;line-height:26.5px;letter-spacing:0px">:</div>
<div class="t" style="left:141.5px;top:54.1px;font-size:26.5px;line-height:26.5px;letter-spacing:0px">{</div>
<div class="t" style="left:175.5px;top:54.1px;font-size:26.5px;line-height:26.5px;letter-spacing:0.7px">&quot;close&quot;</div>
<div class="t" style="left:266.5px;top:54.1px;font-size:26.5px;line-height:26.5px;letter-spacing:0px">:</div>
<div class="t" style="left:277.5px;top:54.1px;font-size:26.5px;line-height:26.5px;letter-spacing:-0.5px">&quot;16:30&quot;</div>
<div class="t" style="left:364.5px;top:54.1px;font-size:26.5px;line-height:26.5px;letter-spacing:0px">,</div>
<div class="t" style="left:390.5px;top:54.1px;font-size:26.5px;line-height:26.5px;letter-spacing:0.7px">&quot;open&quot;</div>
<div class="t" style="left:478.5px;top:54.1px;font-size:26.5px;line-height:26.5px;letter-spacing:0px">:</div>
<div class="t" style="left:490.5px;top:54.1px;font-size:26.5px;line-height:26.5px;letter-spacing:-0.5px">&quot;08:00&quot;</div>
<div class="t" style="left:585.5px;top:54.1px;font-size:26.5px;line-height:26.5px;letter-spacing:0px">}</div>
<div class="t" style="left:596.5px;top:54.1px;font-size:26.5px;line-height:26.5px;letter-spacing:0px">,</div>
<div class="t" style="left:612.5px;top:54.1px;font-size:26.5px;line-height:26.5px;letter-spacing:1.1px">&quot;Tuesday&quot;</div>
<div class="t" style="left:747.5px;top:54.1px;font-size:26.5px;line-height:26.5px;letter-spacing:0px">:</div>
<div class="t" style="left:759.5px;top:54.1px;font-size:26.5px;line-height:26.5px;letter-spacing:0px">{</div>
<div class="t" style="left:794.5px;top:54.1px;font-size:26.5px;line-height:26.5px;letter-spacing:0.7px">&quot;close&quot;</div>
<div class="t" style="left:886.5px;top:54.1px;font-size:26.5px;line-height:26.5px;letter-spacing:0px">:</div>
<div class="t" style="left:897.5px;top:54.1px;font-size:26.5px;line-height:26.5px;letter-spacing:-0.5px">&quot;16:30&quot;</div>
<div class="t" style="left:980.5px;top:54.1px;font-size:26.5px;line-height:26.5px;letter-spacing:0px">,</div>
<div class="t" style="left:1008.5px;top:54.1px;font-size:26.5px;line-height:26.5px;letter-spacing:0.7px">&quot;open&quot;</div>
<div class="t" style="left:5.5px;top:98.1px;font-size:26.5px;line-height:26.5px;letter-spacing:0px">{</div>
<div class="t" style="left:26.5px;top:98.1px;font-size:26.5px;line-height:26.5px;letter-spacing:0.45px">&quot;Friday&quot;</div>
<div class="t" style="left:129.5px;top:98.1px;font-size:26.5px;line-height:26.5px;letter-spacing:0px">:</div>
<div class="t" style="left:141.5px;top:98.1px;font-size:26.5px;line-height:26.5px;letter-spacing:0px">{</div>
<div class="t" style="left:156.5px;top:98.1px;font-size:26.5px;line-height:26.5px;letter-spacing:0px">}</div>
<div class="t" style="left:168.5px;top:98.1px;font-size:26.5px;line-height:26.5px;letter-spacing:0px">,</div>
<div class="t" style="left:184.5px;top:98.1px;font-size:26.5px;line-height:26.5px;letter-spacing:1.1px">&quot;Tuesday&quot;</div>
<div class="t" style="left:320.5px;top:98.1px;font-size:26.5px;line-height:26.5px;letter-spacing:0px">:</div>
<div class="t" style="left:331.5px;top:98.1px;font-size:26.5px;line-height:26.5px;letter-spacing:0px">{</div>
<div class="t" style="left:346.5px;top:98.1px;font-size:26.5px;line-height:26.5px;letter-spacing:0px">}</div>
<div class="t" style="left:358.5px;top:98.1px;font-size:26.5px;line-height:26.5px;letter-spacing:0px">,</div>
<div class="t" style="left:374.5px;top:98.1px;font-size:26.5px;line-height:26.5px;letter-spacing:0.4px">&quot;Thursday&quot;</div>
<div class="t" style="left:515.5px;top:98.1px;font-size:26.5px;line-height:26.5px;letter-spacing:0px">:</div>
<div class="t" style="left:528.5px;top:98.1px;font-size:26.5px;line-height:26.5px;letter-spacing:0px">{</div>
<div class="t" style="left:543.5px;top:98.1px;font-size:26.5px;line-height:26.5px;letter-spacing:0px">}</div>
<div class="t" style="left:555.5px;top:98.1px;font-size:26.5px;line-height:26.5px;letter-spacing:0px">,</div>
<div class="t" style="left:571.5px;top:98.1px;font-size:26.5px;line-height:26.5px;letter-spacing:0.75px">&quot;Wednesday&quot;</div>
<div class="t" style="left:745.5px;top:98.1px;font-size:26.5px;line-height:26.5px;letter-spacing:0px">:</div>
<div class="t" style="left:758.5px;top:98.1px;font-size:26.5px;line-height:26.5px;letter-spacing:0px">{</div>
<div class="t" style="left:773.5px;top:98.1px;font-size:26.5px;line-height:26.5px;letter-spacing:0px">}</div>
<div class="t" style="left:785.5px;top:98.1px;font-size:26.5px;line-height:26.5px;letter-spacing:0px">,</div>
<div class="t" style="left:800.5px;top:98.1px;font-size:26.5px;line-height:26.5px;letter-spacing:0.7px">&quot;Monday&quot;</div>
<div class="t" style="left:925.5px;top:98.1px;font-size:26.5px;line-height:26.5px;letter-spacing:0px">:</div>
<div class="t" style="left:938.5px;top:98.1px;font-size:26.5px;line-height:26.5px;letter-spacing:0px">{</div>
<div class="t" style="left:952.5px;top:98.1px;font-size:26.5px;line-height:26.5px;letter-spacing:0px">}</div>
<div class="t" style="left:965.5px;top:98.1px;font-size:26.5px;line-height:26.5px;letter-spacing:0px">,</div>
<div class="t" style="left:980.5px;top:98.1px;font-size:26.5px;line-height:26.5px;letter-spacing:0.6px">&quot;Sunday&quot;</div>
<div class="t" style="left:5.5px;top:142.1px;font-size:26.5px;line-height:26.5px;letter-spacing:0px">{</div>
<div class="t" style="left:26.5px;top:142.1px;font-size:26.5px;line-height:26.5px;letter-spacing:0.45px">&quot;Friday&quot;</div>
<div class="t" style="left:129.5px;top:142.1px;font-size:26.5px;line-height:26.5px;letter-spacing:0px">:</div>
<div class="t" style="left:141.5px;top:142.1px;font-size:26.5px;line-height:26.5px;letter-spacing:0px">{</div>
<div class="t" style="left:156.5px;top:142.1px;font-size:26.5px;line-height:26.5px;letter-spacing:0px">}</div>
<div class="t" style="left:168.5px;top:142.1px;font-size:26.5px;line-height:26.5px;letter-spacing:0px">,</div>
<div class="t" style="left:184.5px;top:142.1px;font-size:26.5px;line-height:26.5px;letter-spacing:1.1px">&quot;Tuesday&quot;</div>
<div class="t" style="left:320.5px;top:142.1px;font-size:26.5px;line-height:26.5px;letter-spacing:0px">:</div>
<div class="t" style="left:331.5px;top:142.1px;font-size:26.5px;line-height:26.5px;letter-spacing:0px">{</div>
<div class="t" style="left:346.5px;top:142.1px;font-size:26.5px;line-height:26.5px;letter-spacing:0px">}</div>
<div class="t" style="left:358.5px;top:142.1px;font-size:26.5px;line-height:26.5px;letter-spacing:0px">,</div>
<div class="t" style="left:374.5px;top:142.1px;font-size:26.5px;line-height:26.5px;letter-spacing:0.4px">&quot;Thursday&quot;</div>
<div class="t" style="left:515.5px;top:142.1px;font-size:26.5px;line-height:26.5px;letter-spacing:0px">:</div>
<div class="t" style="left:528.5px;top:142.1px;font-size:26.5px;line-height:26.5px;letter-spacing:0px">{</div>
<div class="t" style="left:543.5px;top:142.1px;font-size:26.5px;line-height:26.5px;letter-spacing:0px">}</div>
<div class="t" style="left:555.5px;top:142.1px;font-size:26.5px;line-height:26.5px;letter-spacing:0px">,</div>
<div class="t" style="left:571.5px;top:142.1px;font-size:26.5px;line-height:26.5px;letter-spacing:0.75px">&quot;Wednesday&quot;</div>
<div class="t" style="left:745.5px;top:142.1px;font-size:26.5px;line-height:26.5px;letter-spacing:0px">:</div>
<div class="t" style="left:758.5px;top:142.1px;font-size:26.5px;line-height:26.5px;letter-spacing:0px">{</div>
<div class="t" style="left:773.5px;top:142.1px;font-size:26.5px;line-height:26.5px;letter-spacing:0px">}</div>
<div class="t" style="left:785.5px;top:142.1px;font-size:26.5px;line-height:26.5px;letter-spacing:0px">,</div>
<div class="t" style="left:800.5px;top:142.1px;font-size:26.5px;line-height:26.5px;letter-spacing:0.7px">&quot;Monday&quot;</div>
<div class="t" style="left:925.5px;top:142.1px;font-size:26.5px;line-height:26.5px;letter-spacing:0px">:</div>
<div class="t" style="left:938.5px;top:142.1px;font-size:26.5px;line-height:26.5px;letter-spacing:0px">{</div>
<div class="t" style="left:952.5px;top:142.1px;font-size:26.5px;line-height:26.5px;letter-spacing:0px">}</div>
<div class="t" style="left:965.5px;top:142.1px;font-size:26.5px;line-height:26.5px;letter-spacing:0px">,</div>
<div class="t" style="left:980.5px;top:142.1px;font-size:26.5px;line-height:26.5px;letter-spacing:0.6px">&quot;Sunday&quot;</div>
<div class="t" style="left:5.5px;top:186.1px;font-size:26.5px;line-height:26.5px;letter-spacing:0px">{</div>
<div class="t" style="left:26.5px;top:186.1px;font-size:26.5px;line-height:26.5px;letter-spacing:0.45px">&quot;Friday&quot;</div>
<div class="t" style="left:129.5px;top:186.1px;font-size:26.5px;line-height:26.5px;letter-spacing:0px">:</div>
<div class="t" style="left:141.5px;top:186.1px;font-size:26.5px;line-height:26.5px;letter-spacing:0px">{</div>
<div class="t" style="left:156.5px;top:186.1px;font-size:26.5px;line-height:26.5px;letter-spacing:0px">}</div>
<div class="t" style="left:168.5px;top:186.1px;font-size:26.5px;line-height:26.5px;letter-spacing:0px">,</div>
<div class="t" style="left:184.5px;top:186.1px;font-size:26.5px;line-height:26.5px;letter-spacing:1.1px">&quot;Tuesday&quot;</div>
<div class="t" style="left:320.5px;top:186.1px;font-size:26.5px;line-height:26.5px;letter-spacing:0px">:</div>
<div class="t" style="left:331.5px;top:186.1px;font-size:26.5px;line-height:26.5px;letter-spacing:0px">{</div>
<div class="t" style="left:346.5px;top:186.1px;font-size:26.5px;line-height:26.5px;letter-spacing:0px">}</div>
<div class="t" style="left:358.5px;top:186.1px;font-size:26.5px;line-height:26.5px;letter-spacing:0px">,</div>
<div class="t" style="left:374.5px;top:186.1px;font-size:26.5px;line-height:26.5px;letter-spacing:0.4px">&quot;Thursday&quot;</div>
<div class="t" style="left:515.5px;top:186.1px;font-size:26.5px;line-height:26.5px;letter-spacing:0px">:</div>
<div class="t" style="left:528.5px;top:186.1px;font-size:26.5px;line-height:26.5px;letter-spacing:0px">{</div>
<div class="t" style="left:543.5px;top:186.1px;font-size:26.5px;line-height:26.5px;letter-spacing:0px">}</div>
<div class="t" style="left:555.5px;top:186.1px;font-size:26.5px;line-height:26.5px;letter-spacing:0px">,</div>
<div class="t" style="left:571.5px;top:186.1px;font-size:26.5px;line-height:26.5px;letter-spacing:0.75px">&quot;Wednesday&quot;</div>
<div class="t" style="left:745.5px;top:186.1px;font-size:26.5px;line-height:26.5px;letter-spacing:0px">:</div>
<div class="t" style="left:758.5px;top:186.1px;font-size:26.5px;line-height:26.5px;letter-spacing:0px">{</div>
<div class="t" style="left:773.5px;top:186.1px;font-size:26.5px;line-height:26.5px;letter-spacing:0px">}</div>
<div class="t" style="left:785.5px;top:186.1px;font-size:26.5px;line-height:26.5px;letter-spacing:0px">,</div>
<div class="t" style="left:800.5px;top:186.1px;font-size:26.5px;line-height:26.5px;letter-spacing:0.7px">&quot;Monday&quot;</div>
<div class="t" style="left:925.5px;top:186.1px;font-size:26.5px;line-height:26.5px;letter-spacing:0px">:</div>
<div class="t" style="left:938.5px;top:186.1px;font-size:26.5px;line-height:26.5px;letter-spacing:0px">{</div>
<div class="t" style="left:952.5px;top:186.1px;font-size:26.5px;line-height:26.5px;letter-spacing:0px">}</div>
<div class="t" style="left:965.5px;top:186.1px;font-size:26.5px;line-height:26.5px;letter-spacing:0px">,</div>
<div class="t" style="left:980.5px;top:186.1px;font-size:26.5px;line-height:26.5px;letter-spacing:0.6px">&quot;Sunday&quot;</div>
<div class="t" style="left:5.5px;top:230.1px;font-size:26.5px;line-height:26.5px;letter-spacing:0px">{</div>
<div class="t" style="left:26.5px;top:230.1px;font-size:26.5px;line-height:26.5px;letter-spacing:0.45px">&quot;Friday&quot;</div>
<div class="t" style="left:129.5px;top:230.1px;font-size:26.5px;line-height:26.5px;letter-spacing:0px">:</div>
<div class="t" style="left:141.5px;top:230.1px;font-size:26.5px;line-height:26.5px;letter-spacing:0px">{</div>
<div class="t" style="left:156.5px;top:230.1px;font-size:26.5px;line-height:26.5px;letter-spacing:0px">}</div>
<div class="t" style="left:168.5px;top:230.1px;font-size:26.5px;line-height:26.5px;letter-spacing:0px">,</div>
<div class="t" style="left:184.5px;top:230.1px;font-size:26.5px;line-height:26.5px;letter-spacing:1.1px">&quot;Tuesday&quot;</div>
<div class="t" style="left:320.5px;top:230.1px;font-size:26.5px;line-height:26.5px;letter-spacing:0px">:</div>
<div class="t" style="left:331.5px;top:230.1px;font-size:26.5px;line-height:26.5px;letter-spacing:0px">{</div>
<div class="t" style="left:346.5px;top:230.1px;font-size:26.5px;line-height:26.5px;letter-spacing:0px">}</div>
<div class="t" style="left:358.5px;top:230.1px;font-size:26.5px;line-height:26.5px;letter-spacing:0px">,</div>
<div class="t" style="left:374.5px;top:230.1px;font-size:26.5px;line-height:26.5px;letter-spacing:0.4px">&quot;Thursday&quot;</div>
<div class="t" style="left:515.5px;top:230.1px;font-size:26.5px;line-height:26.5px;letter-spacing:0px">:</div>
<div class="t" style="left:528.5px;top:230.1px;font-size:26.5px;line-height:26.5px;letter-spacing:0px">{</div>
<div class="t" style="left:543.5px;top:230.1px;font-size:26.5px;line-height:26.5px;letter-spacing:0px">}</div>
<div class="t" style="left:555.5px;top:230.1px;font-size:26.5px;line-height:26.5px;letter-spacing:0px">,</div>
<div class="t" style="left:571.5px;top:230.1px;font-size:26.5px;line-height:26.5px;letter-spacing:0.75px">&quot;Wednesday&quot;</div>
<div class="t" style="left:745.5px;top:230.1px;font-size:26.5px;line-height:26.5px;letter-spacing:0px">:</div>
<div class="t" style="left:758.5px;top:230.1px;font-size:26.5px;line-height:26.5px;letter-spacing:0px">{</div>
<div class="t" style="left:773.5px;top:230.1px;font-size:26.5px;line-height:26.5px;letter-spacing:0px">}</div>
<div class="t" style="left:785.5px;top:230.1px;font-size:26.5px;line-height:26.5px;letter-spacing:0px">,</div>
<div class="t" style="left:800.5px;top:230.1px;font-size:26.5px;line-height:26.5px;letter-spacing:0.7px">&quot;Monday&quot;</div>
<div class="t" style="left:925.5px;top:230.1px;font-size:26.5px;line-height:26.5px;letter-spacing:0px">:</div>
<div class="t" style="left:938.5px;top:230.1px;font-size:26.5px;line-height:26.5px;letter-spacing:0px">{</div>
<div class="t" style="left:952.5px;top:230.1px;font-size:26.5px;line-height:26.5px;letter-spacing:0px">}</div>
<div class="t" style="left:965.5px;top:230.1px;font-size:26.5px;line-height:26.5px;letter-spacing:0px">,</div>
<div class="t" style="left:980.5px;top:230.1px;font-size:26.5px;line-height:26.5px;letter-spacing:0.6px">&quot;Sunday&quot;</div>
<div class="t" style="left:5.5px;top:274.1px;font-size:26.5px;line-height:26.5px;letter-spacing:0px">{</div>
<div class="t" style="left:26.5px;top:274.1px;font-size:26.5px;line-height:26.5px;letter-spacing:0.45px">&quot;Friday&quot;</div>
<div class="t" style="left:129.5px;top:274.1px;font-size:26.5px;line-height:26.5px;letter-spacing:0px">:</div>
<div class="t" style="left:141.5px;top:274.1px;font-size:26.5px;line-height:26.5px;letter-spacing:0px">{</div>
<div class="t" style="left:175.5px;top:274.1px;font-size:26.5px;line-height:26.5px;letter-spacing:0.7px">&quot;close&quot;</div>
<div class="t" style="left:266.5px;top:274.1px;font-size:26.5px;line-height:26.5px;letter-spacing:0px">:</div>
<div class="t" style="left:277.5px;top:274.1px;font-size:26.5px;line-height:26.5px;letter-spacing:-0.5px">&quot;22:30&quot;</div>
<div class="t" style="left:364.5px;top:274.1px;font-size:26.5px;line-height:26.5px;letter-spacing:0px">,</div>
<div class="t" style="left:390.5px;top:274.1px;font-size:26.5px;line-height:26.5px;letter-spacing:0.7px">&quot;open&quot;</div>
<div class="t" style="left:478.5px;top:274.1px;font-size:26.5px;line-height:26.5px;letter-spacing:0px">:</div>
<div class="t" style="left:490.5px;top:274.1px;font-size:26.5px;line-height:26.5px;letter-spacing:-0.5px">&quot;07:00&quot;</div>
<div class="t" style="left:585.5px;top:274.1px;font-size:26.5px;line-height:26.5px;letter-spacing:0px">}</div>
<div class="t" style="left:596.5px;top:274.1px;font-size:26.5px;line-height:26.5px;letter-spacing:0px">,</div>
<div class="t" style="left:612.5px;top:274.1px;font-size:26.5px;line-height:26.5px;letter-spacing:1.1px">&quot;Tuesday&quot;</div>
<div class="t" style="left:747.5px;top:274.1px;font-size:26.5px;line-height:26.5px;letter-spacing:0px">:</div>
<div class="t" style="left:759.5px;top:274.1px;font-size:26.5px;line-height:26.5px;letter-spacing:0px">{</div>
<div class="t" style="left:794.5px;top:274.1px;font-size:26.5px;line-height:26.5px;letter-spacing:0.7px">&quot;close&quot;</div>
<div class="t" style="left:886.5px;top:274.1px;font-size:26.5px;line-height:26.5px;letter-spacing:0px">:</div>
<div class="t" style="left:897.5px;top:274.1px;font-size:26.5px;line-height:26.5px;letter-spacing:-0.5px">&quot;21:30&quot;</div>
<div class="t" style="left:980.5px;top:274.1px;font-size:26.5px;line-height:26.5px;letter-spacing:0px">,</div>
<div class="t" style="left:1008.5px;top:274.1px;font-size:26.5px;line-height:26.5px;letter-spacing:0.7px">&quot;open&quot;</div>
<div class="t" style="left:5.5px;top:318.1px;font-size:26.5px;line-height:26.5px;letter-spacing:0px">{</div>
<div class="t" style="left:26.5px;top:318.1px;font-size:26.5px;line-height:26.5px;letter-spacing:0.45px">&quot;Friday&quot;</div>
<div class="t" style="left:129.5px;top:318.1px;font-size:26.5px;line-height:26.5px;letter-spacing:0px">:</div>
<div class="t" style="left:141.5px;top:318.1px;font-size:26.5px;line-height:26.5px;letter-spacing:0px">{</div>
<div class="t" style="left:156.5px;top:318.1px;font-size:26.5px;line-height:26.5px;letter-spacing:0px">}</div>
<div class="t" style="left:168.5px;top:318.1px;font-size:26.5px;line-height:26.5px;letter-spacing:0px">,</div>
<div class="t" style="left:184.5px;top:318.1px;font-size:26.5px;line-height:26.5px;letter-spacing:1.1px">&quot;Tuesday&quot;</div>
<div class="t" style="left:320.5px;top:318.1px;font-size:26.5px;line-height:26.5px;letter-spacing:0px">:</div>
<div class="t" style="left:331.5px;top:318.1px;font-size:26.5px;line-height:26.5px;letter-spacing:0px">{</div>
<div class="t" style="left:346.5px;top:318.1px;font-size:26.5px;line-height:26.5px;letter-spacing:0px">}</div>
<div class="t" style="left:358.5px;top:318.1px;font-size:26.5px;line-height:26.5px;letter-spacing:0px">,</div>
<div class="t" style="left:374.5px;top:318.1px;font-size:26.5px;line-height:26.5px;letter-spacing:0.4px">&quot;Thursday&quot;</div>
<div class="t" style="left:515.5px;top:318.1px;font-size:26.5px;line-height:26.5px;letter-spacing:0px">:</div>
<div class="t" style="left:528.5px;top:318.1px;font-size:26.5px;line-height:26.5px;letter-spacing:0px">{</div>
<div class="t" style="left:543.5px;top:318.1px;font-size:26.5px;line-height:26.5px;letter-spacing:0px">}</div>
<div class="t" style="left:555.5px;top:318.1px;font-size:26.5px;line-height:26.5px;letter-spacing:0px">,</div>
<div class="t" style="left:571.5px;top:318.1px;font-size:26.5px;line-height:26.5px;letter-spacing:0.75px">&quot;Wednesday&quot;</div>
<div class="t" style="left:745.5px;top:318.1px;font-size:26.5px;line-height:26.5px;letter-spacing:0px">:</div>
<div class="t" style="left:758.5px;top:318.1px;font-size:26.5px;line-height:26.5px;letter-spacing:0px">{</div>
<div class="t" style="left:773.5px;top:318.1px;font-size:26.5px;line-height:26.5px;letter-spacing:0px">}</div>
<div class="t" style="left:785.5px;top:318.1px;font-size:26.5px;line-height:26.5px;letter-spacing:0px">,</div>
<div class="t" style="left:800.5px;top:318.1px;font-size:26.5px;line-height:26.5px;letter-spacing:0.7px">&quot;Monday&quot;</div>
<div class="t" style="left:925.5px;top:318.1px;font-size:26.5px;line-height:26.5px;letter-spacing:0px">:</div>
<div class="t" style="left:938.5px;top:318.1px;font-size:26.5px;line-height:26.5px;letter-spacing:0px">{</div>
<div class="t" style="left:952.5px;top:318.1px;font-size:26.5px;line-height:26.5px;letter-spacing:0px">}</div>
<div class="t" style="left:965.5px;top:318.1px;font-size:26.5px;line-height:26.5px;letter-spacing:0px">,</div>
<div class="t" style="left:980.5px;top:318.1px;font-size:26.5px;line-height:26.5px;letter-spacing:0.6px">&quot;Sunday&quot;</div>
<div class="t" style="left:5.5px;top:362.1px;font-size:26.5px;line-height:26.5px;letter-spacing:0px">{</div>
<div class="t" style="left:26.5px;top:362.1px;font-size:26.5px;line-height:26.5px;letter-spacing:0.45px">&quot;Friday&quot;</div>
<div class="t" style="left:129.5px;top:362.1px;font-size:26.5px;line-height:26.5px;letter-spacing:0px">:</div>
<div class="t" style="left:141.5px;top:362.1px;font-size:26.5px;line-height:26.5px;letter-spacing:0px">{</div>
<div class="t" style="left:156.5px;top:362.1px;font-size:26.5px;line-height:26.5px;letter-spacing:0px">}</div>
<div class="t" style="left:168.5px;top:362.1px;font-size:26.5px;line-height:26.5px;letter-spacing:0px">,</div>
<div class="t" style="left:184.5px;top:362.1px;font-size:26.5px;line-height:26.5px;letter-spacing:1.1px">&quot;Tuesday&quot;</div>
<div class="t" style="left:320.5px;top:362.1px;font-size:26.5px;line-height:26.5px;letter-spacing:0px">:</div>
<div class="t" style="left:331.5px;top:362.1px;font-size:26.5px;line-height:26.5px;letter-spacing:0px">{</div>
<div class="t" style="left:346.5px;top:362.1px;font-size:26.5px;line-height:26.5px;letter-spacing:0px">}</div>
<div class="t" style="left:358.5px;top:362.1px;font-size:26.5px;line-height:26.5px;letter-spacing:0px">,</div>
<div class="t" style="left:374.5px;top:362.1px;font-size:26.5px;line-height:26.5px;letter-spacing:0.4px">&quot;Thursday&quot;</div>
<div class="t" style="left:515.5px;top:362.1px;font-size:26.5px;line-height:26.5px;letter-spacing:0px">:</div>
<div class="t" style="left:528.5px;top:362.1px;font-size:26.5px;line-height:26.5px;letter-spacing:0px">{</div>
<div class="t" style="left:543.5px;top:362.1px;font-size:26.5px;line-height:26.5px;letter-spacing:0px">}</div>
<div class="t" style="left:555.5px;top:362.1px;font-size:26.5px;line-height:26.5px;letter-spacing:0px">,</div>
<div class="t" style="left:571.5px;top:362.1px;font-size:26.5px;line-height:26.5px;letter-spacing:0.75px">&quot;Wednesday&quot;</div>
<div class="t" style="left:745.5px;top:362.1px;font-size:26.5px;line-height:26.5px;letter-spacing:0px">:</div>
<div class="t" style="left:758.5px;top:362.1px;font-size:26.5px;line-height:26.5px;letter-spacing:0px">{</div>
<div class="t" style="left:773.5px;top:362.1px;font-size:26.5px;line-height:26.5px;letter-spacing:0px">}</div>
<div class="t" style="left:785.5px;top:362.1px;font-size:26.5px;line-height:26.5px;letter-spacing:0px">,</div>
<div class="t" style="left:800.5px;top:362.1px;font-size:26.5px;line-height:26.5px;letter-spacing:0.7px">&quot;Monday&quot;</div>
<div class="t" style="left:925.5px;top:362.1px;font-size:26.5px;line-height:26.5px;letter-spacing:0px">:</div>
<div class="t" style="left:938.5px;top:362.1px;font-size:26.5px;line-height:26.5px;letter-spacing:0px">{</div>
<div class="t" style="left:952.5px;top:362.1px;font-size:26.5px;line-height:26.5px;letter-spacing:0px">}</div>
<div class="t" style="left:965.5px;top:362.1px;font-size:26.5px;line-height:26.5px;letter-spacing:0px">,</div>
<div class="t" style="left:980.5px;top:362.1px;font-size:26.5px;line-height:26.5px;letter-spacing:0.6px">&quot;Sunday&quot;</div>
<div class="t" style="left:5.5px;top:406.1px;font-size:26.5px;line-height:26.5px;letter-spacing:0px">{</div>
<div class="t" style="left:26.5px;top:406.1px;font-size:26.5px;line-height:26.5px;letter-spacing:0.45px">&quot;Friday&quot;</div>
<div class="t" style="left:129.5px;top:406.1px;font-size:26.5px;line-height:26.5px;letter-spacing:0px">:</div>
<div class="t" style="left:141.5px;top:406.1px;font-size:26.5px;line-height:26.5px;letter-spacing:0px">{</div>
<div class="t" style="left:156.5px;top:406.1px;font-size:26.5px;line-height:26.5px;letter-spacing:0px">}</div>
<div class="t" style="left:168.5px;top:406.1px;font-size:26.5px;line-height:26.5px;letter-spacing:0px">,</div>
<div class="t" style="left:184.5px;top:406.1px;font-size:26.5px;line-height:26.5px;letter-spacing:1.1px">&quot;Tuesday&quot;</div>
<div class="t" style="left:320.5px;top:406.1px;font-size:26.5px;line-height:26.5px;letter-spacing:0px">:</div>
<div class="t" style="left:331.5px;top:406.1px;font-size:26.5px;line-height:26.5px;letter-spacing:0px">{</div>
<div class="t" style="left:346.5px;top:406.1px;font-size:26.5px;line-height:26.5px;letter-spacing:0px">}</div>
<div class="t" style="left:358.5px;top:406.1px;font-size:26.5px;line-height:26.5px;letter-spacing:0px">,</div>
<div class="t" style="left:374.5px;top:406.1px;font-size:26.5px;line-height:26.5px;letter-spacing:0.4px">&quot;Thursday&quot;</div>
<div class="t" style="left:515.5px;top:406.1px;font-size:26.5px;line-height:26.5px;letter-spacing:0px">:</div>
<div class="t" style="left:528.5px;top:406.1px;font-size:26.5px;line-height:26.5px;letter-spacing:0px">{</div>
<div class="t" style="left:543.5px;top:406.1px;font-size:26.5px;line-height:26.5px;letter-spacing:0px">}</div>
<div class="t" style="left:555.5px;top:406.1px;font-size:26.5px;line-height:26.5px;letter-spacing:0px">,</div>
<div class="t" style="left:571.5px;top:406.1px;font-size:26.5px;line-height:26.5px;letter-spacing:0.75px">&quot;Wednesday&quot;</div>
<div class="t" style="left:745.5px;top:406.1px;font-size:26.5px;line-height:26.5px;letter-spacing:0px">:</div>
<div class="t" style="left:758.5px;top:406.1px;font-size:26.5px;line-height:26.5px;letter-spacing:0px">{</div>
<div class="t" style="left:773.5px;top:406.1px;font-size:26.5px;line-height:26.5px;letter-spacing:0px">}</div>
<div class="t" style="left:785.5px;top:406.1px;font-size:26.5px;line-height:26.5px;letter-spacing:0px">,</div>
<div class="t" style="left:800.5px;top:406.1px;font-size:26.5px;line-height:26.5px;letter-spacing:0.7px">&quot;Monday&quot;</div>
<div class="t" style="left:925.5px;top:406.1px;font-size:26.5px;line-height:26.5px;letter-spacing:0px">:</div>
<div class="t" style="left:938.5px;top:406.1px;font-size:26.5px;line-height:26.5px;letter-spacing:0px">{</div>
<div class="t" style="left:952.5px;top:406.1px;font-size:26.5px;line-height:26.5px;letter-spacing:0px">}</div>
<div class="t" style="left:965.5px;top:406.1px;font-size:26.5px;line-height:26.5px;letter-spacing:0px">,</div>
<div class="t" style="left:980.5px;top:406.1px;font-size:26.5px;line-height:26.5px;letter-spacing:0.6px">&quot;Sunday&quot;</div>
<div class="t" style="left:5.5px;top:450.1px;font-size:26.5px;line-height:26.5px;letter-spacing:0px">{</div>
<div class="t" style="left:26.5px;top:450.1px;font-size:26.5px;line-height:26.5px;letter-spacing:0.45px">&quot;Friday&quot;</div>
<div class="t" style="left:129.5px;top:450.1px;font-size:26.5px;line-height:26.5px;letter-spacing:0px">:</div>
<div class="t" style="left:141.5px;top:450.1px;font-size:26.5px;line-height:26.5px;letter-spacing:0px">{</div>
<div class="t" style="left:156.5px;top:450.1px;font-size:26.5px;line-height:26.5px;letter-spacing:0px">}</div>
<div class="t" style="left:168.5px;top:450.1px;font-size:26.5px;line-height:26.5px;letter-spacing:0px">,</div>
<div class="t" style="left:184.5px;top:450.1px;font-size:26.5px;line-height:26.5px;letter-spacing:1.1px">&quot;Tuesday&quot;</div>
<div class="t" style="left:320.5px;top:450.1px;font-size:26.5px;line-height:26.5px;letter-spacing:0px">:</div>
<div class="t" style="left:331.5px;top:450.1px;font-size:26.5px;line-height:26.5px;letter-spacing:0px">{</div>
<div class="t" style="left:346.5px;top:450.1px;font-size:26.5px;line-height:26.5px;letter-spacing:0px">}</div>
<div class="t" style="left:358.5px;top:450.1px;font-size:26.5px;line-height:26.5px;letter-spacing:0px">,</div>
<div class="t" style="left:374.5px;top:450.1px;font-size:26.5px;line-height:26.5px;letter-spacing:0.4px">&quot;Thursday&quot;</div>
<div class="t" style="left:515.5px;top:450.1px;font-size:26.5px;line-height:26.5px;letter-spacing:0px">:</div>
<div class="t" style="left:528.5px;top:450.1px;font-size:26.5px;line-height:26.5px;letter-spacing:0px">{</div>
<div class="t" style="left:543.5px;top:450.1px;font-size:26.5px;line-height:26.5px;letter-spacing:0px">}</div>
<div class="t" style="left:555.5px;top:450.1px;font-size:26.5px;line-height:26.5px;letter-spacing:0px">,</div>
<div class="t" style="left:571.5px;top:450.1px;font-size:26.5px;line-height:26.5px;letter-spacing:0.75px">&quot;Wednesday&quot;</div>
<div class="t" style="left:745.5px;top:450.1px;font-size:26.5px;line-height:26.5px;letter-spacing:0px">:</div>
<div class="t" style="left:758.5px;top:450.1px;font-size:26.5px;line-height:26.5px;letter-spacing:0px">{</div>
<div class="t" style="left:773.5px;top:450.1px;font-size:26.5px;line-height:26.5px;letter-spacing:0px">}</div>
<div class="t" style="left:785.5px;top:450.1px;font-size:26.5px;line-height:26.5px;letter-spacing:0px">,</div>
<div class="t" style="left:800.5px;top:450.1px;font-size:26.5px;line-height:26.5px;letter-spacing:0.7px">&quot;Monday&quot;</div>
<div class="t" style="left:925.5px;top:450.1px;font-size:26.5px;line-height:26.5px;letter-spacing:0px">:</div>
<div class="t" style="left:938.5px;top:450.1px;font-size:26.5px;line-height:26.5px;letter-spacing:0px">{</div>
<div class="t" style="left:952.5px;top:450.1px;font-size:26.5px;line-height:26.5px;letter-spacing:0px">}</div>
<div class="t" style="left:965.5px;top:450.1px;font-size:26.5px;line-height:26.5px;letter-spacing:0px">,</div>
<div class="t" style="left:980.5px;top:450.1px;font-size:26.5px;line-height:26.5px;letter-spacing:0.6px">&quot;Sunday&quot;</div>
<div class="t" style="left:5.5px;top:494.1px;font-size:26.5px;line-height:26.5px;letter-spacing:0px">{</div>
<div class="t" style="left:26.5px;top:494.1px;font-size:26.5px;line-height:26.5px;letter-spacing:0.45px">&quot;Friday&quot;</div>
<div class="t" style="left:129.5px;top:494.1px;font-size:26.5px;line-height:26.5px;letter-spacing:0px">:</div>
<div class="t" style="left:141.5px;top:494.1px;font-size:26.5px;line-height:26.5px;letter-spacing:0px">{</div>
<div class="t" style="left:175.5px;top:494.1px;font-size:26.5px;line-height:26.5px;letter-spacing:0.7px">&quot;close&quot;</div>
<div class="t" style="left:266.5px;top:494.1px;font-size:26.5px;line-height:26.5px;letter-spacing:0px">:</div>
<div class="t" style="left:277.5px;top:494.1px;font-size:26.5px;line-height:26.5px;letter-spacing:-0.5px">&quot;21:00&quot;</div>
<div class="t" style="left:364.5px;top:494.1px;font-size:26.5px;line-height:26.5px;letter-spacing:0px">,</div>
<div class="t" style="left:390.5px;top:494.1px;font-size:26.5px;line-height:26.5px;letter-spacing:0.7px">&quot;open&quot;</div>
<div class="t" style="left:478.5px;top:494.1px;font-size:26.5px;line-height:26.5px;letter-spacing:0px">:</div>
<div class="t" style="left:490.5px;top:494.1px;font-size:26.5px;line-height:26.5px;letter-spacing:-0.5px">&quot;11:00&quot;</div>
<div class="t" style="left:585.5px;top:494.1px;font-size:26.5px;line-height:26.5px;letter-spacing:0px">}</div>
<div class="t" style="left:596.5px;top:494.1px;font-size:26.5px;line-height:26.5px;letter-spacing:0px">,</div>
<div class="t" style="left:612.5px;top:494.1px;font-size:26.5px;line-height:26.5px;letter-spacing:1.1px">&quot;Tuesday&quot;</div>
<div class="t" style="left:747.5px;top:494.1px;font-size:26.5px;line-height:26.5px;letter-spacing:0px">:</div>
<div class="t" style="left:759.5px;top:494.1px;font-size:26.5px;line-height:26.5px;letter-spacing:0px">{</div>
<div class="t" style="left:794.5px;top:494.1px;font-size:26.5px;line-height:26.5px;letter-spacing:0.7px">&quot;close&quot;</div>
<div class="t" style="left:886.5px;top:494.1px;font-size:26.5px;line-height:26.5px;letter-spacing:0px">:</div>
<div class="t" style="left:897.5px;top:494.1px;font-size:26.5px;line-height:26.5px;letter-spacing:-0.5px">&quot;21:00&quot;</div>
<div class="t" style="left:980.5px;top:494.1px;font-size:26.5px;line-height:26.5px;letter-spacing:0px">,</div>
<div class="t" style="left:1008.5px;top:494.1px;font-size:26.5px;line-height:26.5px;letter-spacing:0.7px">&quot;open&quot;</div>
<div class="t" style="left:5.5px;top:538.1px;font-size:26.5px;line-height:26.5px;letter-spacing:0px">{</div>
<div class="t" style="left:26.5px;top:538.1px;font-size:26.5px;line-height:26.5px;letter-spacing:0.45px">&quot;Friday&quot;</div>
<div class="t" style="left:129.5px;top:538.1px;font-size:26.5px;line-height:26.5px;letter-spacing:0px">:</div>
<div class="t" style="left:141.5px;top:538.1px;font-size:26.5px;line-height:26.5px;letter-spacing:0px">{</div>
<div class="t" style="left:175.5px;top:538.1px;font-size:26.5px;line-height:26.5px;letter-spacing:0.7px">&quot;close&quot;</div>
<div class="t" style="left:266.5px;top:538.1px;font-size:26.5px;line-height:26.5px;letter-spacing:0px">:</div>
<div class="t" style="left:277.5px;top:538.1px;font-size:26.5px;line-height:26.5px;letter-spacing:-0.5px">&quot;00:00&quot;</div>
<div class="t" style="left:364.5px;top:538.1px;font-size:26.5px;line-height:26.5px;letter-spacing:0px">,</div>
<div class="t" style="left:390.5px;top:538.1px;font-size:26.5px;line-height:26.5px;letter-spacing:0.7px">&quot;open&quot;</div>
<div class="t" style="left:478.5px;top:538.1px;font-size:26.5px;line-height:26.5px;letter-spacing:0px">:</div>
<div class="t" style="left:490.5px;top:538.1px;font-size:26.5px;line-height:26.5px;letter-spacing:-0.5px">&quot;00:00&quot;</div>
<div class="t" style="left:585.5px;top:538.1px;font-size:26.5px;line-height:26.5px;letter-spacing:0px">}</div>
<div class="t" style="left:596.5px;top:538.1px;font-size:26.5px;line-height:26.5px;letter-spacing:0px">,</div>
<div class="t" style="left:612.5px;top:538.1px;font-size:26.5px;line-height:26.5px;letter-spacing:1.1px">&quot;Tuesday&quot;</div>
<div class="t" style="left:747.5px;top:538.1px;font-size:26.5px;line-height:26.5px;letter-spacing:0px">:</div>
<div class="t" style="left:759.5px;top:538.1px;font-size:26.5px;line-height:26.5px;letter-spacing:0px">{</div>
<div class="t" style="left:794.5px;top:538.1px;font-size:26.5px;line-height:26.5px;letter-spacing:0.7px">&quot;close&quot;</div>
<div class="t" style="left:886.5px;top:538.1px;font-size:26.5px;line-height:26.5px;letter-spacing:0px">:</div>
<div class="t" style="left:897.5px;top:538.1px;font-size:26.5px;line-height:26.5px;letter-spacing:-0.5px">&quot;00:00&quot;</div>
<div class="t" style="left:980.5px;top:538.1px;font-size:26.5px;line-height:26.5px;letter-spacing:0px">,</div>
<div class="t" style="left:1008.5px;top:538.1px;font-size:26.5px;line-height:26.5px;letter-spacing:0.7px">&quot;open&quot;</div>
<div class="t" style="left:5.5px;top:582.1px;font-size:26.5px;line-height:26.5px;letter-spacing:0px">{</div>
<div class="t" style="left:26.5px;top:582.1px;font-size:26.5px;line-height:26.5px;letter-spacing:0.45px">&quot;Friday&quot;</div>
<div class="t" style="left:129.5px;top:582.1px;font-size:26.5px;line-height:26.5px;letter-spacing:0px">:</div>
<div class="t" style="left:141.5px;top:582.1px;font-size:26.5px;line-height:26.5px;letter-spacing:0px">{</div>
<div class="t" style="left:156.5px;top:582.1px;font-size:26.5px;line-height:26.5px;letter-spacing:0px">}</div>
<div class="t" style="left:168.5px;top:582.1px;font-size:26.5px;line-height:26.5px;letter-spacing:0px">,</div>
<div class="t" style="left:184.5px;top:582.1px;font-size:26.5px;line-height:26.5px;letter-spacing:1.1px">&quot;Tuesday&quot;</div>
<div class="t" style="left:320.5px;top:582.1px;font-size:26.5px;line-height:26.5px;letter-spacing:0px">:</div>
<div class="t" style="left:331.5px;top:582.1px;font-size:26.5px;line-height:26.5px;letter-spacing:0px">{</div>
<div class="t" style="left:346.5px;top:582.1px;font-size:26.5px;line-height:26.5px;letter-spacing:0px">}</div>
<div class="t" style="left:358.5px;top:582.1px;font-size:26.5px;line-height:26.5px;letter-spacing:0px">,</div>
<div class="t" style="left:374.5px;top:582.1px;font-size:26.5px;line-height:26.5px;letter-spacing:0.4px">&quot;Thursday&quot;</div>
<div class="t" style="left:515.5px;top:582.1px;font-size:26.5px;line-height:26.5px;letter-spacing:0px">:</div>
<div class="t" style="left:528.5px;top:582.1px;font-size:26.5px;line-height:26.5px;letter-spacing:0px">{</div>
<div class="t" style="left:543.5px;top:582.1px;font-size:26.5px;line-height:26.5px;letter-spacing:0px">}</div>
<div class="t" style="left:555.5px;top:582.1px;font-size:26.5px;line-height:26.5px;letter-spacing:0px">,</div>
<div class="t" style="left:571.5px;top:582.1px;font-size:26.5px;line-height:26.5px;letter-spacing:0.75px">&quot;Wednesday&quot;</div>
<div class="t" style="left:745.5px;top:582.1px;font-size:26.5px;line-height:26.5px;letter-spacing:0px">:</div>
<div class="t" style="left:758.5px;top:582.1px;font-size:26.5px;line-height:26.5px;letter-spacing:0px">{</div>
<div class="t" style="left:773.5px;top:582.1px;font-size:26.5px;line-height:26.5px;letter-spacing:0px">}</div>
<div class="t" style="left:785.5px;top:582.1px;font-size:26.5px;line-height:26.5px;letter-spacing:0px">,</div>
<div class="t" style="left:800.5px;top:582.1px;font-size:26.5px;line-height:26.5px;letter-spacing:0.7px">&quot;Monday&quot;</div>
<div class="t" style="left:925.5px;top:582.1px;font-size:26.5px;line-height:26.5px;letter-spacing:0px">:</div>
<div class="t" style="left:938.5px;top:582.1px;font-size:26.5px;line-height:26.5px;letter-spacing:0px">{</div>
<div class="t" style="left:952.5px;top:582.1px;font-size:26.5px;line-height:26.5px;letter-spacing:0px">}</div>
<div class="t" style="left:965.5px;top:582.1px;font-size:26.5px;line-height:26.5px;letter-spacing:0px">,</div>
<div class="t" style="left:980.5px;top:582.1px;font-size:26.5px;line-height:26.5px;letter-spacing:0.6px">&quot;Sunday&quot;</div>
<div class="t" style="left:5.5px;top:626.1px;font-size:26.5px;line-height:26.5px;letter-spacing:0px">{</div>
<div class="t" style="left:26.5px;top:626.1px;font-size:26.5px;line-height:26.5px;letter-spacing:0.45px">&quot;Friday&quot;</div>
<div class="t" style="left:129.5px;top:626.1px;font-size:26.5px;line-height:26.5px;letter-spacing:0px">:</div>
<div class="t" style="left:141.5px;top:626.1px;font-size:26.5px;line-height:26.5px;letter-spacing:0px">{</div>
<div class="t" style="left:175.5px;top:626.1px;font-size:26.5px;line-height:26.5px;letter-spacing:0.7px">&quot;close&quot;</div>
<div class="t" style="left:266.5px;top:626.1px;font-size:26.5px;line-height:26.5px;letter-spacing:0px">:</div>
<div class="t" style="left:277.5px;top:626.1px;font-size:26.5px;line-height:26.5px;letter-spacing:-0.5px">&quot;23:00&quot;</div>
<div class="t" style="left:364.5px;top:626.1px;font-size:26.5px;line-height:26.5px;letter-spacing:0px">,</div>
<div class="t" style="left:390.5px;top:626.1px;font-size:26.5px;line-height:26.5px;letter-spacing:0.7px">&quot;open&quot;</div>
<div class="t" style="left:478.5px;top:626.1px;font-size:26.5px;line-height:26.5px;letter-spacing:0px">:</div>
<div class="t" style="left:490.5px;top:626.1px;font-size:26.5px;line-height:26.5px;letter-spacing:-0.5px">&quot;11:00&quot;</div>
<div class="t" style="left:585.5px;top:626.1px;font-size:26.5px;line-height:26.5px;letter-spacing:0px">}</div>
<div class="t" style="left:596.5px;top:626.1px;font-size:26.5px;line-height:26.5px;letter-spacing:0px">,</div>
<div class="t" style="left:612.5px;top:626.1px;font-size:26.5px;line-height:26.5px;letter-spacing:1.1px">&quot;Tuesday&quot;</div>
<div class="t" style="left:747.5px;top:626.1px;font-size:26.5px;line-height:26.5px;letter-spacing:0px">:</div>
<div class="t" style="left:759.5px;top:626.1px;font-size:26.5px;line-height:26.5px;letter-spacing:0px">{</div>
<div class="t" style="left:794.5px;top:626.1px;font-size:26.5px;line-height:26.5px;letter-spacing:0.7px">&quot;close&quot;</div>
<div class="t" style="left:886.5px;top:626.1px;font-size:26.5px;line-height:26.5px;letter-spacing:0px">:</div>
<div class="t" style="left:897.5px;top:626.1px;font-size:26.5px;line-height:26.5px;letter-spacing:-0.5px">&quot;23:00&quot;</div>
<div class="t" style="left:980.5px;top:626.1px;font-size:26.5px;line-height:26.5px;letter-spacing:0px">,</div>
<div class="t" style="left:1008.5px;top:626.1px;font-size:26.5px;line-height:26.5px;letter-spacing:0.7px">&quot;open&quot;</div>
<div class="t" style="left:5.5px;top:670.1px;font-size:26.5px;line-height:26.5px;letter-spacing:0px">{</div>
<div class="t" style="left:26.5px;top:670.1px;font-size:26.5px;line-height:26.5px;letter-spacing:0.45px">&quot;Friday&quot;</div>
<div class="t" style="left:129.5px;top:670.1px;font-size:26.5px;line-height:26.5px;letter-spacing:0px">:</div>
<div class="t" style="left:141.5px;top:670.1px;font-size:26.5px;line-height:26.5px;letter-spacing:0px">{</div>
<div class="t" style="left:175.5px;top:670.1px;font-size:26.5px;line-height:26.5px;letter-spacing:0.7px">&quot;close&quot;</div>
<div class="t" style="left:266.5px;top:670.1px;font-size:26.5px;line-height:26.5px;letter-spacing:0px">:</div>
<div class="t" style="left:277.5px;top:670.1px;font-size:26.5px;line-height:26.5px;letter-spacing:-0.5px">&quot;22:30&quot;</div>
<div class="t" style="left:364.5px;top:670.1px;font-size:26.5px;line-height:26.5px;letter-spacing:0px">,</div>
<div class="t" style="left:390.5px;top:670.1px;font-size:26.5px;line-height:26.5px;letter-spacing:0.7px">&quot;open&quot;</div>
<div class="t" style="left:478.5px;top:670.1px;font-size:26.5px;line-height:26.5px;letter-spacing:0px">:</div>
<div class="t" style="left:490.5px;top:670.1px;font-size:26.5px;line-height:26.5px;letter-spacing:-0.5px">&quot;16:30&quot;</div>
<div class="t" style="left:585.5px;top:670.1px;font-size:26.5px;line-height:26.5px;letter-spacing:0px">}</div>
<div class="t" style="left:596.5px;top:670.1px;font-size:26.5px;line-height:26.5px;letter-spacing:0px">,</div>
<div class="t" style="left:612.5px;top:670.1px;font-size:26.5px;line-height:26.5px;letter-spacing:1.1px">&quot;Tuesday&quot;</div>
<div class="t" style="left:747.5px;top:670.1px;font-size:26.5px;line-height:26.5px;letter-spacing:0px">:</div>
<div class="t" style="left:759.5px;top:670.1px;font-size:26.5px;line-height:26.5px;letter-spacing:0px">{</div>
<div class="t" style="left:794.5px;top:670.1px;font-size:26.5px;line-height:26.5px;letter-spacing:0.7px">&quot;close&quot;</div>
<div class="t" style="left:886.5px;top:670.1px;font-size:26.5px;line-height:26.5px;letter-spacing:0px">:</div>
<div class="t" style="left:897.5px;top:670.1px;font-size:26.5px;line-height:26.5px;letter-spacing:-0.5px">&quot;22:00&quot;</div>
<div class="t" style="left:980.5px;top:670.1px;font-size:26.5px;line-height:26.5px;letter-spacing:0px">,</div>
<div class="t" style="left:1008.5px;top:670.1px;font-size:26.5px;line-height:26.5px;letter-spacing:0.7px">&quot;open&quot;</div>
<div class="t" style="left:5.5px;top:714.1px;font-size:26.5px;line-height:26.5px;letter-spacing:0px">{</div>
<div class="t" style="left:26.5px;top:714.1px;font-size:26.5px;line-height:26.5px;letter-spacing:0.45px">&quot;Friday&quot;</div>
<div class="t" style="left:129.5px;top:714.1px;font-size:26.5px;line-height:26.5px;letter-spacing:0px">:</div>
<div class="t" style="left:141.5px;top:714.1px;font-size:26.5px;line-height:26.5px;letter-spacing:0px">{</div>
<div class="t" style="left:175.5px;top:714.1px;font-size:26.5px;line-height:26.5px;letter-spacing:0.7px">&quot;close&quot;</div>
<div class="t" style="left:266.5px;top:714.1px;font-size:26.5px;line-height:26.5px;letter-spacing:0px">:</div>
<div class="t" style="left:277.5px;top:714.1px;font-size:26.5px;line-height:26.5px;letter-spacing:-0.5px">&quot;22:00&quot;</div>
<div class="t" style="left:364.5px;top:714.1px;font-size:26.5px;line-height:26.5px;letter-spacing:0px">,</div>
<div class="t" style="left:390.5px;top:714.1px;font-size:26.5px;line-height:26.5px;letter-spacing:0.7px">&quot;open&quot;</div>
<div class="t" style="left:478.5px;top:714.1px;font-size:26.5px;line-height:26.5px;letter-spacing:0px">:</div>
<div class="t" style="left:490.5px;top:714.1px;font-size:26.5px;line-height:26.5px;letter-spacing:-0.5px">&quot;10:30&quot;</div>
<div class="t" style="left:585.5px;top:714.1px;font-size:26.5px;line-height:26.5px;letter-spacing:0px">}</div>
<div class="t" style="left:596.5px;top:714.1px;font-size:26.5px;line-height:26.5px;letter-spacing:0px">,</div>
<div class="t" style="left:612.5px;top:714.1px;font-size:26.5px;line-height:26.5px;letter-spacing:1.1px">&quot;Tuesday&quot;</div>
<div class="t" style="left:747.5px;top:714.1px;font-size:26.5px;line-height:26.5px;letter-spacing:0px">:</div>
<div class="t" style="left:759.5px;top:714.1px;font-size:26.5px;line-height:26.5px;letter-spacing:0px">{</div>
<div class="t" style="left:794.5px;top:714.1px;font-size:26.5px;line-height:26.5px;letter-spacing:0.7px">&quot;close&quot;</div>
<div class="t" style="left:886.5px;top:714.1px;font-size:26.5px;line-height:26.5px;letter-spacing:0px">:</div>
<div class="t" style="left:897.5px;top:714.1px;font-size:26.5px;line-height:26.5px;letter-spacing:-0.5px">&quot;22:00&quot;</div>
<div class="t" style="left:980.5px;top:714.1px;font-size:26.5px;line-height:26.5px;letter-spacing:0px">,</div>
<div class="t" style="left:1008.5px;top:714.1px;font-size:26.5px;line-height:26.5px;letter-spacing:0.7px">&quot;open&quot;</div>
<div class="t" style="left:5.5px;top:758.1px;font-size:26.5px;line-height:26.5px;letter-spacing:0px">{</div>
<div class="t" style="left:26.5px;top:758.1px;font-size:26.5px;line-height:26.5px;letter-spacing:0.45px">&quot;Friday&quot;</div>
<div class="t" style="left:129.5px;top:758.1px;font-size:26.5px;line-height:26.5px;letter-spacing:0px">:</div>
<div class="t" style="left:141.5px;top:758.1px;font-size:26.5px;line-height:26.5px;letter-spacing:0px">{</div>
<div class="t" style="left:175.5px;top:758.1px;font-size:26.5px;line-height:26.5px;letter-spacing:0.7px">&quot;close&quot;</div>
<div class="t" style="left:266.5px;top:758.1px;font-size:26.5px;line-height:26.5px;letter-spacing:0px">:</div>
<div class="t" style="left:277.5px;top:758.1px;font-size:26.5px;line-height:26.5px;letter-spacing:-0.5px">&quot;18:00&quot;</div>
<div class="t" style="left:364.5px;top:758.1px;font-size:26.5px;line-height:26.5px;letter-spacing:0px">,</div>
<div class="t" style="left:390.5px;top:758.1px;font-size:26.5px;line-height:26.5px;letter-spacing:0.7px">&quot;open&quot;</div>
<div class="t" style="left:478.5px;top:758.1px;font-size:26.5px;line-height:26.5px;letter-spacing:0px">:</div>
<div class="t" style="left:490.5px;top:758.1px;font-size:26.5px;line-height:26.5px;letter-spacing:-0.5px">&quot;08:30&quot;</div>
<div class="t" style="left:585.5px;top:758.1px;font-size:26.5px;line-height:26.5px;letter-spacing:0px">}</div>
<div class="t" style="left:596.5px;top:758.1px;font-size:26.5px;line-height:26.5px;letter-spacing:0px">,</div>
<div class="t" style="left:612.5px;top:758.1px;font-size:26.5px;line-height:26.5px;letter-spacing:1.1px">&quot;Tuesday&quot;</div>
<div class="t" style="left:747.5px;top:758.1px;font-size:26.5px;line-height:26.5px;letter-spacing:0px">:</div>
<div class="t" style="left:759.5px;top:758.1px;font-size:26.5px;line-height:26.5px;letter-spacing:0px">{</div>
<div class="t" style="left:794.5px;top:758.1px;font-size:26.5px;line-height:26.5px;letter-spacing:0.7px">&quot;close&quot;</div>
<div class="t" style="left:886.5px;top:758.1px;font-size:26.5px;line-height:26.5px;letter-spacing:0px">:</div>
<div class="t" style="left:897.5px;top:758.1px;font-size:26.5px;line-height:26.5px;letter-spacing:-0.5px">&quot;18:00&quot;</div>
<div class="t" style="left:980.5px;top:758.1px;font-size:26.5px;line-height:26.5px;letter-spacing:0px">,</div>
<div class="t" style="left:1008.5px;top:758.1px;font-size:26.5px;line-height:26.5px;letter-spacing:0.7px">&quot;open&quot;</div>
<div class="t" style="left:5.5px;top:802.1px;font-size:26.5px;line-height:26.5px;letter-spacing:0px">{</div>
<div class="t" style="left:26.5px;top:802.1px;font-size:26.5px;line-height:26.5px;letter-spacing:0.45px">&quot;Friday&quot;</div>
<div class="t" style="left:129.5px;top:802.1px;font-size:26.5px;line-height:26.5px;letter-spacing:0px">:</div>
<div class="t" style="left:141.5px;top:802.1px;font-size:26.5px;line-height:26.5px;letter-spacing:0px">{</div>
<div class="t" style="left:175.5px;top:802.1px;font-size:26.5px;line-height:26.5px;letter-spacing:0.7px">&quot;close&quot;</div>
<div class="t" style="left:266.5px;top:802.1px;font-size:26.5px;line-height:26.5px;letter-spacing:0px">:</div>
<div class="t" style="left:277.5px;top:802.1px;font-size:26.5px;line-height:26.5px;letter-spacing:-0.5px">&quot;19:00&quot;</div>
<div class="t" style="left:364.5px;top:802.1px;font-size:26.5px;line-height:26.5px;letter-spacing:0px">,</div>
<div class="t" style="left:390.5px;top:802.1px;font-size:26.5px;line-height:26.5px;letter-spacing:0.7px">&quot;open&quot;</div>
<div class="t" style="left:478.5px;top:802.1px;font-size:26.5px;line-height:26.5px;letter-spacing:0px">:</div>
<div class="t" style="left:490.5px;top:802.1px;font-size:26.5px;line-height:26.5px;letter-spacing:-0.5px">&quot;07:30&quot;</div>
<div class="t" style="left:585.5px;top:802.1px;font-size:26.5px;line-height:26.5px;letter-spacing:0px">}</div>
<div class="t" style="left:596.5px;top:802.1px;font-size:26.5px;line-height:26.5px;letter-spacing:0px">,</div>
<div class="t" style="left:612.5px;top:802.1px;font-size:26.5px;line-height:26.5px;letter-spacing:1.1px">&quot;Tuesday&quot;</div>
<div class="t" style="left:747.5px;top:802.1px;font-size:26.5px;line-height:26.5px;letter-spacing:0px">:</div>
<div class="t" style="left:759.5px;top:802.1px;font-size:26.5px;line-height:26.5px;letter-spacing:0px">{</div>
<div class="t" style="left:794.5px;top:802.1px;font-size:26.5px;line-height:26.5px;letter-spacing:0.7px">&quot;close&quot;</div>
<div class="t" style="left:886.5px;top:802.1px;font-size:26.5px;line-height:26.5px;letter-spacing:0px">:</div>
<div class="t" style="left:897.5px;top:802.1px;font-size:26.5px;line-height:26.5px;letter-spacing:-0.5px">&quot;19:00&quot;</div>
<div class="t" style="left:980.5px;top:802.1px;font-size:26.5px;line-height:26.5px;letter-spacing:0px">,</div>
<div class="t" style="left:1008.5px;top:802.1px;font-size:26.5px;line-height:26.5px;letter-spacing:0.7px">&quot;open&quot;</div>
<div class="t" style="left:5.5px;top:846.1px;font-size:26.5px;line-height:26.5px;letter-spacing:0px">{</div>
<div class="t" style="left:26.5px;top:846.1px;font-size:26.5px;line-height:26.5px;letter-spacing:0.45px">&quot;Friday&quot;</div>
<div class="t" style="left:129.5px;top:846.1px;font-size:26.5px;line-height:26.5px;letter-spacing:0px">:</div>
<div class="t" style="left:141.5px;top:846.1px;font-size:26.5px;line-height:26.5px;letter-spacing:0px">{</div>
<div class="t" style="left:175.5px;top:846.1px;font-size:26.5px;line-height:26.5px;letter-spacing:0.7px">&quot;close&quot;</div>
<div class="t" style="left:266.5px;top:846.1px;font-size:26.5px;line-height:26.5px;letter-spacing:0px">:</div>
<div class="t" style="left:277.5px;top:846.1px;font-size:26.5px;line-height:26.5px;letter-spacing:-0.5px">&quot;14:30&quot;</div>
<div class="t" style="left:364.5px;top:846.1px;font-size:26.5px;line-height:26.5px;letter-spacing:0px">,</div>
<div class="t" style="left:390.5px;top:846.1px;font-size:26.5px;line-height:26.5px;letter-spacing:0.7px">&quot;open&quot;</div>
<div class="t" style="left:478.5px;top:846.1px;font-size:26.5px;line-height:26.5px;letter-spacing:0px">:</div>
<div class="t" style="left:490.5px;top:846.1px;font-size:26.5px;line-height:26.5px;letter-spacing:-0.5px">&quot;06:00&quot;</div>
<div class="t" style="left:585.5px;top:846.1px;font-size:26.5px;line-height:26.5px;letter-spacing:0px">}</div>
<div class="t" style="left:596.5px;top:846.1px;font-size:26.5px;line-height:26.5px;letter-spacing:0px">,</div>
<div class="t" style="left:612.5px;top:846.1px;font-size:26.5px;line-height:26.5px;letter-spacing:1.1px">&quot;Tuesday&quot;</div>
<div class="t" style="left:747.5px;top:846.1px;font-size:26.5px;line-height:26.5px;letter-spacing:0px">:</div>
<div class="t" style="left:759.5px;top:846.1px;font-size:26.5px;line-height:26.5px;letter-spacing:0px">{</div>
<div class="t" style="left:794.5px;top:846.1px;font-size:26.5px;line-height:26.5px;letter-spacing:0.7px">&quot;close&quot;</div>
<div class="t" style="left:886.5px;top:846.1px;font-size:26.5px;line-height:26.5px;letter-spacing:0px">:</div>
<div class="t" style="left:897.5px;top:846.1px;font-size:26.5px;line-height:26.5px;letter-spacing:-0.5px">&quot;14:30&quot;</div>
<div class="t" style="left:980.5px;top:846.1px;font-size:26.5px;line-height:26.5px;letter-spacing:0px">,</div>
<div class="t" style="left:1008.5px;top:846.1px;font-size:26.5px;line-height:26.5px;letter-spacing:0.7px">&quot;open&quot;</div>
<div class="t" style="left:5.5px;top:890.1px;font-size:26.5px;line-height:26.5px;letter-spacing:0px">{</div>
<div class="t" style="left:26.5px;top:890.1px;font-size:26.5px;line-height:26.5px;letter-spacing:0.45px">&quot;Friday&quot;</div>
<div class="t" style="left:129.5px;top:890.1px;font-size:26.5px;line-height:26.5px;letter-spacing:0px">:</div>
<div class="t" style="left:141.5px;top:890.1px;font-size:26.5px;line-height:26.5px;letter-spacing:0px">{</div>
<div class="t" style="left:175.5px;top:890.1px;font-size:26.5px;line-height:26.5px;letter-spacing:0.7px">&quot;close&quot;</div>
<div class="t" style="left:266.5px;top:890.1px;font-size:26.5px;line-height:26.5px;letter-spacing:0px">:</div>
<div class="t" style="left:277.5px;top:890.1px;font-size:26.5px;line-height:26.5px;letter-spacing:-0.5px">&quot;00:00&quot;</div>
<div class="t" style="left:364.5px;top:890.1px;font-size:26.5px;line-height:26.5px;letter-spacing:0px">,</div>
<div class="t" style="left:390.5px;top:890.1px;font-size:26.5px;line-height:26.5px;letter-spacing:0.7px">&quot;open&quot;</div>
<div class="t" style="left:478.5px;top:890.1px;font-size:26.5px;line-height:26.5px;letter-spacing:0px">:</div>
<div class="t" style="left:490.5px;top:890.1px;font-size:26.5px;line-height:26.5px;letter-spacing:-0.5px">&quot;06:00&quot;</div>
<div class="t" style="left:585.5px;top:890.1px;font-size:26.5px;line-height:26.5px;letter-spacing:0px">}</div>
<div class="t" style="left:596.5px;top:890.1px;font-size:26.5px;line-height:26.5px;letter-spacing:0px">,</div>
<div class="t" style="left:612.5px;top:890.1px;font-size:26.5px;line-height:26.5px;letter-spacing:1.1px">&quot;Tuesday&quot;</div>
<div class="t" style="left:747.5px;top:890.1px;font-size:26.5px;line-height:26.5px;letter-spacing:0px">:</div>
<div class="t" style="left:759.5px;top:890.1px;font-size:26.5px;line-height:26.5px;letter-spacing:0px">{</div>
<div class="t" style="left:794.5px;top:890.1px;font-size:26.5px;line-height:26.5px;letter-spacing:0.7px">&quot;close&quot;</div>
<div class="t" style="left:886.5px;top:890.1px;font-size:26.5px;line-height:26.5px;letter-spacing:0px">:</div>
<div class="t" style="left:897.5px;top:890.1px;font-size:26.5px;line-height:26.5px;letter-spacing:-0.5px">&quot;00:00&quot;</div>
<div class="t" style="left:980.5px;top:890.1px;font-size:26.5px;line-height:26.5px;letter-spacing:0px">,</div>
<div class="t" style="left:1008.5px;top:890.1px;font-size:26.5px;line-height:26.5px;letter-spacing:0.7px">&quot;open&quot;</div>
<div class="t" style="left:5.5px;top:934.1px;font-size:26.5px;line-height:26.5px;letter-spacing:0px">{</div>
<div class="t" style="left:26.5px;top:934.1px;font-size:26.5px;line-height:26.5px;letter-spacing:0.45px">&quot;Friday&quot;</div>
<div class="t" style="left:129.5px;top:934.1px;font-size:26.5px;line-height:26.5px;letter-spacing:0px">:</div>
<div class="t" style="left:141.5px;top:934.1px;font-size:26.5px;line-height:26.5px;letter-spacing:0px">{</div>
<div class="t" style="left:175.5px;top:934.1px;font-size:26.5px;line-height:26.5px;letter-spacing:0.7px">&quot;close&quot;</div>
<div class="t" style="left:266.5px;top:934.1px;font-size:26.5px;line-height:26.5px;letter-spacing:0px">:</div>
<div class="t" style="left:277.5px;top:934.1px;font-size:26.5px;line-height:26.5px;letter-spacing:-0.5px">&quot;20:00&quot;</div>
<div class="t" style="left:364.5px;top:934.1px;font-size:26.5px;line-height:26.5px;letter-spacing:0px">,</div>
<div class="t" style="left:390.5px;top:934.1px;font-size:26.5px;line-height:26.5px;letter-spacing:0.7px">&quot;open&quot;</div>
<div class="t" style="left:478.5px;top:934.1px;font-size:26.5px;line-height:26.5px;letter-spacing:0px">:</div>
<div class="t" style="left:490.5px;top:934.1px;font-size:26.5px;line-height:26.5px;letter-spacing:-0.5px">&quot;12:00&quot;</div>
<div class="t" style="left:585.5px;top:934.1px;font-size:26.5px;line-height:26.5px;letter-spacing:0px">}</div>
<div class="t" style="left:596.5px;top:934.1px;font-size:26.5px;line-height:26.5px;letter-spacing:0px">,</div>
<div class="t" style="left:612.5px;top:934.1px;font-size:26.5px;line-height:26.5px;letter-spacing:1.1px">&quot;Tuesday&quot;</div>
<div class="t" style="left:747.5px;top:934.1px;font-size:26.5px;line-height:26.5px;letter-spacing:0px">:</div>
<div class="t" style="left:759.5px;top:934.1px;font-size:26.5px;line-height:26.5px;letter-spacing:0px">{</div>
<div class="t" style="left:794.5px;top:934.1px;font-size:26.5px;line-height:26.5px;letter-spacing:0.7px">&quot;close&quot;</div>
<div class="t" style="left:886.5px;top:934.1px;font-size:26.5px;line-height:26.5px;letter-spacing:0px">:</div>
<div class="t" style="left:897.5px;top:934.1px;font-size:26.5px;line-height:26.5px;letter-spacing:-0.5px">&quot;20:00&quot;</div>
<div class="t" style="left:980.5px;top:934.1px;font-size:26.5px;line-height:26.5px;letter-spacing:0px">,</div>
<div class="t" style="left:1008.5px;top:934.1px;font-size:26.5px;line-height:26.5px;letter-spacing:0.7px">&quot;open&quot;</div>
<div class="t" style="left:5.5px;top:978.1px;font-size:26.5px;line-height:26.5px;letter-spacing:0px">{</div>
<div class="t" style="left:26.5px;top:978.1px;font-size:26.5px;line-height:26.5px;letter-spacing:0.45px">&quot;Friday&quot;</div>
<div class="t" style="left:129.5px;top:978.1px;font-size:26.5px;line-height:26.5px;letter-spacing:0px">:</div>
<div class="t" style="left:141.5px;top:978.1px;font-size:26.5px;line-height:26.5px;letter-spacing:0px">{</div>
<div class="t" style="left:156.5px;top:978.1px;font-size:26.5px;line-height:26.5px;letter-spacing:0px">}</div>
<div class="t" style="left:168.5px;top:978.1px;font-size:26.5px;line-height:26.5px;letter-spacing:0px">,</div>
<div class="t" style="left:184.5px;top:978.1px;font-size:26.5px;line-height:26.5px;letter-spacing:1.1px">&quot;Tuesday&quot;</div>
<div class="t" style="left:320.5px;top:978.1px;font-size:26.5px;line-height:26.5px;letter-spacing:0px">:</div>
<div class="t" style="left:331.5px;top:978.1px;font-size:26.5px;line-height:26.5px;letter-spacing:0px">{</div>
<div class="t" style="left:346.5px;top:978.1px;font-size:26.5px;line-height:26.5px;letter-spacing:0px">}</div>
<div class="t" style="left:358.5px;top:978.1px;font-size:26.5px;line-height:26.5px;letter-spacing:0px">,</div>
<div class="t" style="left:374.5px;top:978.1px;font-size:26.5px;line-height:26.5px;letter-spacing:0.4px">&quot;Thursday&quot;</div>
<div class="t" style="left:515.5px;top:978.1px;font-size:26.5px;line-height:26.5px;letter-spacing:0px">:</div>
<div class="t" style="left:528.5px;top:978.1px;font-size:26.5px;line-height:26.5px;letter-spacing:0px">{</div>
<div class="t" style="left:543.5px;top:978.1px;font-size:26.5px;line-height:26.5px;letter-spacing:0px">}</div>
<div class="t" style="left:555.5px;top:978.1px;font-size:26.5px;line-height:26.5px;letter-spacing:0px">,</div>
<div class="t" style="left:571.5px;top:978.1px;font-size:26.5px;line-height:26.5px;letter-spacing:0.75px">&quot;Wednesday&quot;</div>
<div class="t" style="left:745.5px;top:978.1px;font-size:26.5px;line-height:26.5px;letter-spacing:0px">:</div>
<div class="t" style="left:758.5px;top:978.1px;font-size:26.5px;line-height:26.5px;letter-spacing:0px">{</div>
<div class="t" style="left:773.5px;top:978.1px;font-size:26.5px;line-height:26.5px;letter-spacing:0px">}</div>
<div class="t" style="left:785.5px;top:978.1px;font-size:26.5px;line-height:26.5px;letter-spacing:0px">,</div>
<div class="t" style="left:800.5px;top:978.1px;font-size:26.5px;line-height:26.5px;letter-spacing:0.7px">&quot;Monday&quot;</div>
<div class="t" style="left:925.5px;top:978.1px;font-size:26.5px;line-height:26.5px;letter-spacing:0px">:</div>
<div class="t" style="left:938.5px;top:978.1px;font-size:26.5px;line-height:26.5px;letter-spacing:0px">{</div>
<div class="t" style="left:952.5px;top:978.1px;font-size:26.5px;line-height:26.5px;letter-spacing:0px">}</div>
<div class="t" style="left:965.5px;top:978.1px;font-size:26.5px;line-height:26.5px;letter-spacing:0px">,</div>
<div class="t" style="left:980.5px;top:978.1px;font-size:26.5px;line-height:26.5px;letter-spacing:0.6px">&quot;Sunday&quot;</div>
<div class="t" style="left:5.5px;top:1022.1px;font-size:26.5px;line-height:26.5px;letter-spacing:0px">{</div>
<div class="t" style="left:26.5px;top:1022.1px;font-size:26.5px;line-height:26.5px;letter-spacing:0.45px">&quot;Friday&quot;</div>
<div class="t" style="left:129.5px;top:1022.1px;font-size:26.5px;line-height:26.5px;letter-spacing:0px">:</div>
<div class="t" style="left:141.5px;top:1022.1px;font-size:26.5px;line-height:26.5px;letter-spacing:0px">{</div>
<div class="t" style="left:156.5px;top:1022.1px;font-size:26.5px;line-height:26.5px;letter-spacing:0px">}</div>
<div class="t" style="left:168.5px;top:1022.1px;font-size:26.5px;line-height:26.5px;letter-spacing:0px">,</div>
<div class="t" style="left:184.5px;top:1022.1px;font-size:26.5px;line-height:26.5px;letter-spacing:1.1px">&quot;Tuesday&quot;</div>
<div class="t" style="left:320.5px;top:1022.1px;font-size:26.5px;line-height:26.5px;letter-spacing:0px">:</div>
<div class="t" style="left:331.5px;top:1022.1px;font-size:26.5px;line-height:26.5px;letter-spacing:0px">{</div>
<div class="t" style="left:346.5px;top:1022.1px;font-size:26.5px;line-height:26.5px;letter-spacing:0px">}</div>
<div class="t" style="left:358.5px;top:1022.1px;font-size:26.5px;line-height:26.5px;letter-spacing:0px">,</div>
<div class="t" style="left:374.5px;top:1022.1px;font-size:26.5px;line-height:26.5px;letter-spacing:0.4px">&quot;Thursday&quot;</div>
<div class="t" style="left:515.5px;top:1022.1px;font-size:26.5px;line-height:26.5px;letter-spacing:0px">:</div>
<div class="t" style="left:528.5px;top:1022.1px;font-size:26.5px;line-height:26.5px;letter-spacing:0px">{</div>
<div class="t" style="left:543.5px;top:1022.1px;font-size:26.5px;line-height:26.5px;letter-spacing:0px">}</div>
<div class="t" style="left:555.5px;top:1022.1px;font-size:26.5px;line-height:26.5px;letter-spacing:0px">,</div>
<div class="t" style="left:571.5px;top:1022.1px;font-size:26.5px;line-height:26.5px;letter-spacing:0.75px">&quot;Wednesday&quot;</div>
<div class="t" style="left:745.5px;top:1022.1px;font-size:26.5px;line-height:26.5px;letter-spacing:0px">:</div>
<div class="t" style="left:758.5px;top:1022.1px;font-size:26.5px;line-height:26.5px;letter-spacing:0px">{</div>
<div class="t" style="left:773.5px;top:1022.1px;font-size:26.5px;line-height:26.5px;letter-spacing:0px">}</div>
<div class="t" style="left:785.5px;top:1022.1px;font-size:26.5px;line-height:26.5px;letter-spacing:0px">,</div>
<div class="t" style="left:800.5px;top:1022.1px;font-size:26.5px;line-height:26.5px;letter-spacing:0.7px">&quot;Monday&quot;</div>
<div class="t" style="left:925.5px;top:1022.1px;font-size:26.5px;line-height:26.5px;letter-spacing:0px">:</div>
<div class="t" style="left:938.5px;top:1022.1px;font-size:26.5px;line-height:26.5px;letter-spacing:0px">{</div>
<div class="t" style="left:952.5px;top:1022.1px;font-size:26.5px;line-height:26.5px;letter-spacing:0px">}</div>
<div class="t" style="left:965.5px;top:1022.1px;font-size:26.5px;line-height:26.5px;letter-spacing:0px">,</div>
<div class="t" style="left:980.5px;top:1022.1px;font-size:26.5px;line-height:26.5px;letter-spacing:0.6px">&quot;Sunday&quot;</div>
<div class="t" style="left:5.5px;top:1066.1px;font-size:26.5px;line-height:26.5px;letter-spacing:0px">{</div>
<div class="t" style="left:26.5px;top:1066.1px;font-size:26.5px;line-height:26.5px;letter-spacing:0.45px">&quot;Friday&quot;</div>
<div class="t" style="left:129.5px;top:1066.1px;font-size:26.5px;line-height:26.5px;letter-spacing:0px">:</div>
<div class="t" style="left:141.5px;top:1066.1px;font-size:26.5px;line-height:26.5px;letter-spacing:0px">{</div>
<div class="t" style="left:156.5px;top:1066.1px;font-size:26.5px;line-height:26.5px;letter-spacing:0px">}</div>
<div class="t" style="left:168.5px;top:1066.1px;font-size:26.5px;line-height:26.5px;letter-spacing:0px">,</div>
<div class="t" style="left:184.5px;top:1066.1px;font-size:26.5px;line-height:26.5px;letter-spacing:1.1px">&quot;Tuesday&quot;</div>
<div class="t" style="left:320.5px;top:1066.1px;font-size:26.5px;line-height:26.5px;letter-spacing:0px">:</div>
<div class="t" style="left:331.5px;top:1066.1px;font-size:26.5px;line-height:26.5px;letter-spacing:0px">{</div>
<div class="t" style="left:346.5px;top:1066.1px;font-size:26.5px;line-height:26.5px;letter-spacing:0px">}</div>
<div class="t" style="left:358.5px;top:1066.1px;font-size:26.5px;line-height:26.5px;letter-spacing:0px">,</div>
<div class="t" style="left:374.5px;top:1066.1px;font-size:26.5px;line-height:26.5px;letter-spacing:0.4px">&quot;Thursday&quot;</div>
<div class="t" style="left:515.5px;top:1066.1px;font-size:26.5px;line-height:26.5px;letter-spacing:0px">:</div>
<div class="t" style="left:528.5px;top:1066.1px;font-size:26.5px;line-height:26.5px;letter-spacing:0px">{</div>
<div class="t" style="left:543.5px;top:1066.1px;font-size:26.5px;line-height:26.5px;letter-spacing:0px">}</div>
<div class="t" style="left:555.5px;top:1066.1px;font-size:26.5px;line-height:26.5px;letter-spacing:0px">,</div>
<div class="t" style="left:571.5px;top:1066.1px;font-size:26.5px;line-height:26.5px;letter-spacing:0.75px">&quot;Wednesday&quot;</div>
<div class="t" style="left:745.5px;top:1066.1px;font-size:26.5px;line-height:26.5px;letter-spacing:0px">:</div>
<div class="t" style="left:758.5px;top:1066.1px;font-size:26.5px;line-height:26.5px;letter-spacing:0px">{</div>
<div class="t" style="left:773.5px;top:1066.1px;font-size:26.5px;line-height:26.5px;letter-spacing:0px">}</div>
<div class="t" style="left:785.5px;top:1066.1px;font-size:26.5px;line-height:26.5px;letter-spacing:0px">,</div>
<div class="t" style="left:800.5px;top:1066.1px;font-size:26.5px;line-height:26.5px;letter-spacing:0.7px">&quot;Monday&quot;</div>
<div class="t" style="left:925.5px;top:1066.1px;font-size:26.5px;line-height:26.5px;letter-spacing:0px">:</div>
<div class="t" style="left:938.5px;top:1066.1px;font-size:26.5px;line-height:26.5px;letter-spacing:0px">{</div>
<div class="t" style="left:952.5px;top:1066.1px;font-size:26.5px;line-height:26.5px;letter-spacing:0px">}</div>
<div class="t" style="left:965.5px;top:1066.1px;font-size:26.5px;line-height:26.5px;letter-spacing:0px">,</div>
<div class="t" style="left:980.5px;top:1066.1px;font-size:26.5px;line-height:26.5px;letter-spacing:0.6px">&quot;Sunday&quot;</div>
<div class="t" style="left:5.5px;top:1110.1px;font-size:26.5px;line-height:26.5px;letter-spacing:0px">{</div>
<div class="t" style="left:26.5px;top:1110.1px;font-size:26.5px;line-height:26.5px;letter-spacing:0.45px">&quot;Friday&quot;</div>
<div class="t" style="left:129.5px;top:1110.1px;font-size:26.5px;line-height:26.5px;letter-spacing:0px">:</div>
<div class="t" style="left:141.5px;top:1110.1px;font-size:26.5px;line-height:26.5px;letter-spacing:0px">{</div>
<div class="t" style="left:156.5px;top:1110.1px;font-size:26.5px;line-height:26.5px;letter-spacing:0px">}</div>
<div class="t" style="left:168.5px;top:1110.1px;font-size:26.5px;line-height:26.5px;letter-spacing:0px">,</div>
<div class="t" style="left:184.5px;top:1110.1px;font-size:26.5px;line-height:26.5px;letter-spacing:1.1px">&quot;Tuesday&quot;</div>
<div class="t" style="left:320.5px;top:1110.1px;font-size:26.5px;line-height:26.5px;letter-spacing:0px">:</div>
<div class="t" style="left:331.5px;top:1110.1px;font-size:26.5px;line-height:26.5px;letter-spacing:0px">{</div>
<div class="t" style="left:346.5px;top:1110.1px;font-size:26.5px;line-height:26.5px;letter-spacing:0px">}</div>
<div class="t" style="left:358.5px;top:1110.1px;font-size:26.5px;line-height:26.5px;letter-spacing:0px">,</div>
<div class="t" style="left:374.5px;top:1110.1px;font-size:26.5px;line-height:26.5px;letter-spacing:0.4px">&quot;Thursday&quot;</div>
<div class="t" style="left:515.5px;top:1110.1px;font-size:26.5px;line-height:26.5px;letter-spacing:0px">:</div>
<div class="t" style="left:528.5px;top:1110.1px;font-size:26.5px;line-height:26.5px;letter-spacing:0px">{</div>
<div class="t" style="left:543.5px;top:1110.1px;font-size:26.5px;line-height:26.5px;letter-spacing:0px">}</div>
<div class="t" style="left:555.5px;top:1110.1px;font-size:26.5px;line-height:26.5px;letter-spacing:0px">,</div>
<div class="t" style="left:571.5px;top:1110.1px;font-size:26.5px;line-height:26.5px;letter-spacing:0.75px">&quot;Wednesday&quot;</div>
<div class="t" style="left:745.5px;top:1110.1px;font-size:26.5px;line-height:26.5px;letter-spacing:0px">:</div>
<div class="t" style="left:758.5px;top:1110.1px;font-size:26.5px;line-height:26.5px;letter-spacing:0px">{</div>
<div class="t" style="left:773.5px;top:1110.1px;font-size:26.5px;line-height:26.5px;letter-spacing:0px">}</div>
<div class="t" style="left:785.5px;top:1110.1px;font-size:26.5px;line-height:26.5px;letter-spacing:0px">,</div>
<div class="t" style="left:800.5px;top:1110.1px;font-size:26.5px;line-height:26.5px;letter-spacing:0.7px">&quot;Monday&quot;</div>
<div class="t" style="left:925.5px;top:1110.1px;font-size:26.5px;line-height:26.5px;letter-spacing:0px">:</div>
<div class="t" style="left:938.5px;top:1110.1px;font-size:26.5px;line-height:26.5px;letter-spacing:0px">{</div>
<div class="t" style="left:952.5px;top:1110.1px;font-size:26.5px;line-height:26.5px;letter-spacing:0px">}</div>
<div class="t" style="left:965.5px;top:1110.1px;font-size:26.5px;line-height:26.5px;letter-spacing:0px">,</div>
<div class="t" style="left:980.5px;top:1110.1px;font-size:26.5px;line-height:26.5px;letter-spacing:0.6px">&quot;Sunday&quot;</div>
<div class="t" style="left:5.5px;top:1154.1px;font-size:26.5px;line-height:26.5px;letter-spacing:0px">{</div>
<div class="t" style="left:26.5px;top:1154.1px;font-size:26.5px;line-height:26.5px;letter-spacing:0.45px">&quot;Friday&quot;</div>
<div class="t" style="left:129.5px;top:1154.1px;font-size:26.5px;line-height:26.5px;letter-spacing:0px">:</div>
<div class="t" style="left:141.5px;top:1154.1px;font-size:26.5px;line-height:26.5px;letter-spacing:0px">{</div>
<div class="t" style="left:175.5px;top:1154.1px;font-size:26.5px;line-height:26.5px;letter-spacing:0.7px">&quot;close&quot;</div>
<div class="t" style="left:266.5px;top:1154.1px;font-size:26.5px;line-height:26.5px;letter-spacing:0px">:</div>
<div class="t" style="left:277.5px;top:1154.1px;font-size:26.5px;line-height:26.5px;letter-spacing:-0.5px">&quot;21:00&quot;</div>
<div class="t" style="left:364.5px;top:1154.1px;font-size:26.5px;line-height:26.5px;letter-spacing:0px">,</div>
<div class="t" style="left:390.5px;top:1154.1px;font-size:26.5px;line-height:26.5px;letter-spacing:0.7px">&quot;open&quot;</div>
<div class="t" style="left:478.5px;top:1154.1px;font-size:26.5px;line-height:26.5px;letter-spacing:0px">:</div>
<div class="t" style="left:490.5px;top:1154.1px;font-size:26.5px;line-height:26.5px;letter-spacing:-0.5px">&quot;10:00&quot;</div>
<div class="t" style="left:585.5px;top:1154.1px;font-size:26.5px;line-height:26.5px;letter-spacing:0px">}</div>
<div class="t" style="left:596.5px;top:1154.1px;font-size:26.5px;line-height:26.5px;letter-spacing:0px">,</div>
<div class="t" style="left:612.5px;top:1154.1px;font-size:26.5px;line-height:26.5px;letter-spacing:1.1px">&quot;Tuesday&quot;</div>
<div class="t" style="left:747.5px;top:1154.1px;font-size:26.5px;line-height:26.5px;letter-spacing:0px">:</div>
<div class="t" style="left:759.5px;top:1154.1px;font-size:26.5px;line-height:26.5px;letter-spacing:0px">{</div>
<div class="t" style="left:794.5px;top:1154.1px;font-size:26.5px;line-height:26.5px;letter-spacing:0.7px">&quot;close&quot;</div>
<div class="t" style="left:886.5px;top:1154.1px;font-size:26.5px;line-height:26.5px;letter-spacing:0px">:</div>
<div class="t" style="left:897.5px;top:1154.1px;font-size:26.5px;line-height:26.5px;letter-spacing:-0.5px">&quot;21:00&quot;</div>
<div class="t" style="left:980.5px;top:1154.1px;font-size:26.5px;line-height:26.5px;letter-spacing:0px">,</div>
<div class="t" style="left:1008.5px;top:1154.1px;font-size:26.5px;line-height:26.5px;letter-spacing:0.7px">&quot;open&quot;</div>
<div class="t" style="left:5.5px;top:1198.1px;font-size:26.5px;line-height:26.5px;letter-spacing:0px">{</div>
<div class="t" style="left:26.5px;top:1198.1px;font-size:26.5px;line-height:26.5px;letter-spacing:0.45px">&quot;Friday&quot;</div>
<div class="t" style="left:129.5px;top:1198.1px;font-size:26.5px;line-height:26.5px;letter-spacing:0px">:</div>
<div class="t" style="left:141.5px;top:1198.1px;font-size:26.5px;line-height:26.5px;letter-spacing:0px">{</div>
<div class="t" style="left:156.5px;top:1198.1px;font-size:26.5px;line-height:26.5px;letter-spacing:0px">}</div>
<div class="t" style="left:168.5px;top:1198.1px;font-size:26.5px;line-height:26.5px;letter-spacing:0px">,</div>
<div class="t" style="left:184.5px;top:1198.1px;font-size:26.5px;line-height:26.5px;letter-spacing:1.1px">&quot;Tuesday&quot;</div>
<div class="t" style="left:320.5px;top:1198.1px;font-size:26.5px;line-height:26.5px;letter-spacing:0px">:</div>
<div class="t" style="left:331.5px;top:1198.1px;font-size:26.5px;line-height:26.5px;letter-spacing:0px">{</div>
<div class="t" style="left:346.5px;top:1198.1px;font-size:26.5px;line-height:26.5px;letter-spacing:0px">}</div>
<div class="t" style="left:358.5px;top:1198.1px;font-size:26.5px;line-height:26.5px;letter-spacing:0px">,</div>
<div class="t" style="left:374.5px;top:1198.1px;font-size:26.5px;line-height:26.5px;letter-spacing:0.4px">&quot;Thursday&quot;</div>
<div class="t" style="left:515.5px;top:1198.1px;font-size:26.5px;line-height:26.5px;letter-spacing:0px">:</div>
<div class="t" style="left:528.5px;top:1198.1px;font-size:26.5px;line-height:26.5px;letter-spacing:0px">{</div>
<div class="t" style="left:543.5px;top:1198.1px;font-size:26.5px;line-height:26.5px;letter-spacing:0px">}</div>
<div class="t" style="left:555.5px;top:1198.1px;font-size:26.5px;line-height:26.5px;letter-spacing:0px">,</div>
<div class="t" style="left:571.5px;top:1198.1px;font-size:26.5px;line-height:26.5px;letter-spacing:0.75px">&quot;Wednesday&quot;</div>
<div class="t" style="left:745.5px;top:1198.1px;font-size:26.5px;line-height:26.5px;letter-spacing:0px">:</div>
<div class="t" style="left:758.5px;top:1198.1px;font-size:26.5px;line-height:26.5px;letter-spacing:0px">{</div>
<div class="t" style="left:773.5px;top:1198.1px;font-size:26.5px;line-height:26.5px;letter-spacing:0px">}</div>
<div class="t" style="left:785.5px;top:1198.1px;font-size:26.5px;line-height:26.5px;letter-spacing:0px">,</div>
<div class="t" style="left:800.5px;top:1198.1px;font-size:26.5px;line-height:26.5px;letter-spacing:0.7px">&quot;Monday&quot;</div>
<div class="t" style="left:925.5px;top:1198.1px;font-size:26.5px;line-height:26.5px;letter-spacing:0px">:</div>
<div class="t" style="left:938.5px;top:1198.1px;font-size:26.5px;line-height:26.5px;letter-spacing:0px">{</div>
<div class="t" style="left:952.5px;top:1198.1px;font-size:26.5px;line-height:26.5px;letter-spacing:0px">}</div>
<div class="t" style="left:965.5px;top:1198.1px;font-size:26.5px;line-height:26.5px;letter-spacing:0px">,</div>
<div class="t" style="left:980.5px;top:1198.1px;font-size:26.5px;line-height:26.5px;letter-spacing:0.6px">&quot;Sunday&quot;</div>
<div class="t" style="left:5.5px;top:1242.1px;font-size:26.5px;line-height:26.5px;letter-spacing:0px">{</div>
<div class="t" style="left:26.5px;top:1242.1px;font-size:26.5px;line-height:26.5px;letter-spacing:0.45px">&quot;Friday&quot;</div>
<div class="t" style="left:129.5px;top:1242.1px;font-size:26.5px;line-height:26.5px;letter-spacing:0px">:</div>
<div class="t" style="left:141.5px;top:1242.1px;font-size:26.5px;line-height:26.5px;letter-spacing:0px">{</div>
<div class="t" style="left:175.5px;top:1242.1px;font-size:26.5px;line-height:26.5px;letter-spacing:0.7px">&quot;close&quot;</div>
<div class="t" style="left:266.5px;top:1242.1px;font-size:26.5px;line-height:26.5px;letter-spacing:0px">:</div>
<div class="t" style="left:277.5px;top:1242.1px;font-size:26.5px;line-height:26.5px;letter-spacing:-0.5px">&quot;02:00&quot;</div>
<div class="t" style="left:364.5px;top:1242.1px;font-size:26.5px;line-height:26.5px;letter-spacing:0px">,</div>
<div class="t" style="left:390.5px;top:1242.1px;font-size:26.5px;line-height:26.5px;letter-spacing:0.7px">&quot;open&quot;</div>
<div class="t" style="left:478.5px;top:1242.1px;font-size:26.5px;line-height:26.5px;letter-spacing:0px">:</div>
<div class="t" style="left:490.5px;top:1242.1px;font-size:26.5px;line-height:26.5px;letter-spacing:-0.5px">&quot;11:00&quot;</div>
<div class="t" style="left:585.5px;top:1242.1px;font-size:26.5px;line-height:26.5px;letter-spacing:0px">}</div>
<div class="t" style="left:596.5px;top:1242.1px;font-size:26.5px;line-height:26.5px;letter-spacing:0px">,</div>
<div class="t" style="left:612.5px;top:1242.1px;font-size:26.5px;line-height:26.5px;letter-spacing:1.1px">&quot;Tuesday&quot;</div>
<div class="t" style="left:747.5px;top:1242.1px;font-size:26.5px;line-height:26.5px;letter-spacing:0px">:</div>
<div class="t" style="left:759.5px;top:1242.1px;font-size:26.5px;line-height:26.5px;letter-spacing:0px">{</div>
<div class="t" style="left:794.5px;top:1242.1px;font-size:26.5px;line-height:26.5px;letter-spacing:0.7px">&quot;close&quot;</div>
<div class="t" style="left:886.5px;top:1242.1px;font-size:26.5px;line-height:26.5px;letter-spacing:0px">:</div>
<div class="t" style="left:897.5px;top:1242.1px;font-size:26.5px;line-height:26.5px;letter-spacing:-0.5px">&quot;02:00&quot;</div>
<div class="t" style="left:980.5px;top:1242.1px;font-size:26.5px;line-height:26.5px;letter-spacing:0px">,</div>
<div class="t" style="left:1008.5px;top:1242.1px;font-size:26.5px;line-height:26.5px;letter-spacing:0.7px">&quot;open&quot;</div>
<div class="t" style="left:5.5px;top:1286.1px;font-size:26.5px;line-height:26.5px;letter-spacing:0px">{</div>
<div class="t" style="left:26.5px;top:1286.1px;font-size:26.5px;line-height:26.5px;letter-spacing:0.45px">&quot;Friday&quot;</div>
<div class="t" style="left:129.5px;top:1286.1px;font-size:26.5px;line-height:26.5px;letter-spacing:0px">:</div>
<div class="t" style="left:141.5px;top:1286.1px;font-size:26.5px;line-height:26.5px;letter-spacing:0px">{</div>
<div class="t" style="left:156.5px;top:1286.1px;font-size:26.5px;line-height:26.5px;letter-spacing:0px">}</div>
<div class="t" style="left:168.5px;top:1286.1px;font-size:26.5px;line-height:26.5px;letter-spacing:0px">,</div>
<div class="t" style="left:184.5px;top:1286.1px;font-size:26.5px;line-height:26.5px;letter-spacing:1.1px">&quot;Tuesday&quot;</div>
<div class="t" style="left:320.5px;top:1286.1px;font-size:26.5px;line-height:26.5px;letter-spacing:0px">:</div>
<div class="t" style="left:331.5px;top:1286.1px;font-size:26.5px;line-height:26.5px;letter-spacing:0px">{</div>
<div class="t" style="left:346.5px;top:1286.1px;font-size:26.5px;line-height:26.5px;letter-spacing:0px">}</div>
<div class="t" style="left:358.5px;top:1286.1px;font-size:26.5px;line-height:26.5px;letter-spacing:0px">,</div>
<div class="t" style="left:374.5px;top:1286.1px;font-size:26.5px;line-height:26.5px;letter-spacing:0.4px">&quot;Thursday&quot;</div>
<div class="t" style="left:515.5px;top:1286.1px;font-size:26.5px;line-height:26.5px;letter-spacing:0px">:</div>
<div class="t" style="left:528.5px;top:1286.1px;font-size:26.5px;line-height:26.5px;letter-spacing:0px">{</div>
<div class="t" style="left:543.5px;top:1286.1px;font-size:26.5px;line-height:26.5px;letter-spacing:0px">}</div>
<div class="t" style="left:555.5px;top:1286.1px;font-size:26.5px;line-height:26.5px;letter-spacing:0px">,</div>
<div class="t" style="left:571.5px;top:1286.1px;font-size:26.5px;line-height:26.5px;letter-spacing:0.75px">&quot;Wednesday&quot;</div>
<div class="t" style="left:745.5px;top:1286.1px;font-size:26.5px;line-height:26.5px;letter-spacing:0px">:</div>
<div class="t" style="left:758.5px;top:1286.1px;font-size:26.5px;line-height:26.5px;letter-spacing:0px">{</div>
<div class="t" style="left:773.5px;top:1286.1px;font-size:26.5px;line-height:26.5px;letter-spacing:0px">}</div>
<div class="t" style="left:785.5px;top:1286.1px;font-size:26.5px;line-height:26.5px;letter-spacing:0px">,</div>
<div class="t" style="left:800.5px;top:1286.1px;font-size:26.5px;line-height:26.5px;letter-spacing:0.7px">&quot;Monday&quot;</div>
<div class="t" style="left:925.5px;top:1286.1px;font-size:26.5px;line-height:26.5px;letter-spacing:0px">:</div>
<div class="t" style="left:938.5px;top:1286.1px;font-size:26.5px;line-height:26.5px;letter-spacing:0px">{</div>
<div class="t" style="left:952.5px;top:1286.1px;font-size:26.5px;line-height:26.5px;letter-spacing:0px">}</div>
<div class="t" style="left:965.5px;top:1286.1px;font-size:26.5px;line-height:26.5px;letter-spacing:0px">,</div>
<div class="t" style="left:980.5px;top:1286.1px;font-size:26.5px;line-height:26.5px;letter-spacing:0.6px">&quot;Sunday&quot;</div>
</div>
<div style="left:3288px;top:498px;width:32px;height:1374px;background:#F0F0F0"></div>
<div style="left:3288px;top:532px;width:30px;height:392px;background:#CDCDCD"></div>
<svg style="left:0;top:0" width="1" height="1"><path d="M3296 520 L3303 513 L3310 520" stroke="#606060" stroke-width="3.2" fill="none"/></svg>
<svg style="left:0;top:0" width="1" height="1"><path d="M3296 1849 L3303 1856 L3310 1849" stroke="#606060" stroke-width="3.2" fill="none"/></svg>
<div style="left:944px;top:1872px;width:2376px;height:32px;background:#F0F0F0"></div>
<div style="left:978px;top:1872px;width:254px;height:30px;background:#CDCDCD"></div>
<svg style="left:0;top:0" width="1" height="1"><path d="M964 1880 L957 1887 L964 1894" stroke="#606060" stroke-width="3.2" fill="none"/></svg>
<svg style="left:0;top:0" width="1" height="1"><path d="M3264 1880 L3271 1887 L3264 1894" stroke="#606060" stroke-width="3.2" fill="none"/></svg>
<div style="left:40px;top:1914px;width:146px;height:44px;background:#E1E1E1;border:2px solid #ADADAD"></div>
<div class="t" style="left:63.5px;top:1924.1px;font-size:26.5px;line-height:26.5px;">Refresh</div>
<div style="left:746px;top:1914px;width:184px;height:44px;background:#CCCCCC;border:2px solid #BFBFBF"></div>
<div class="t" style="left:777.5px;top:1924.1px;font-size:26.5px;line-height:26.5px;color:#838383;">Connect...</div>
<div style="left:944px;top:1914px;width:184px;height:44px;background:#E1E1E1;border:2px solid #ADADAD"></div>
<div class="t" style="left:986.5px;top:1924.1px;font-size:26.5px;line-height:26.5px;">Sample</div>
<div style="left:1142px;top:1918px;width:112px;height:44px;background:#fff;border:2px solid #A4A6AB"></div>
<div class="t" style="left:1146.5px;top:1926.1px;font-size:26.5px;line-height:26.5px;">100</div>
<div style="left:1220px;top:1920px;width:32px;height:40px;background:#F4F4F4"></div>
<div style="left:1222px;top:1922px;width:28px;height:36px;background:#ABABAB"></div>
<div style="left:1224px;top:1924px;width:24px;height:14px;background:linear-gradient(#F2F2F2,#E6E6E6)"></div>
<div style="left:1224px;top:1942px;width:24px;height:14px;background:linear-gradient(#F2F2F2,#E6E6E6)"></div>
<svg style="left:1230px;top:1928px" width="10" height="7"><path d="M0 6 L4 1 L6 1 L10 6 Z" fill="#000"/></svg>
<svg style="left:1230px;top:1946px" width="10" height="7"><path d="M0 0 L10 0 L6 5 L4 5 Z" fill="#000"/></svg>
<div class="t" style="left:1265.5px;top:1926.1px;font-size:26.5px;line-height:26.5px;">Rows</div>
<div style="left:3118px;top:1914px;width:202px;height:44px;background:#E1E1E1;border:2px solid #ADADAD"></div>
<div class="t" style="left:3181.5px;top:1923.1px;font-size:26.5px;line-height:26.5px;">Close</div>
<div class="t" style="left:2741.5px;top:1840.0px;font-size:36px;line-height:36px;color:rgba(100,100,100,0.40);letter-spacing:1.6px">Activate Windows</div>
<div class="t" style="left:2741.5px;top:1888.8px;font-size:28px;line-height:28px;color:rgba(100,100,100,0.40);letter-spacing:0.85px">Go to Settings to activate Windows.</div>
</body></html>
